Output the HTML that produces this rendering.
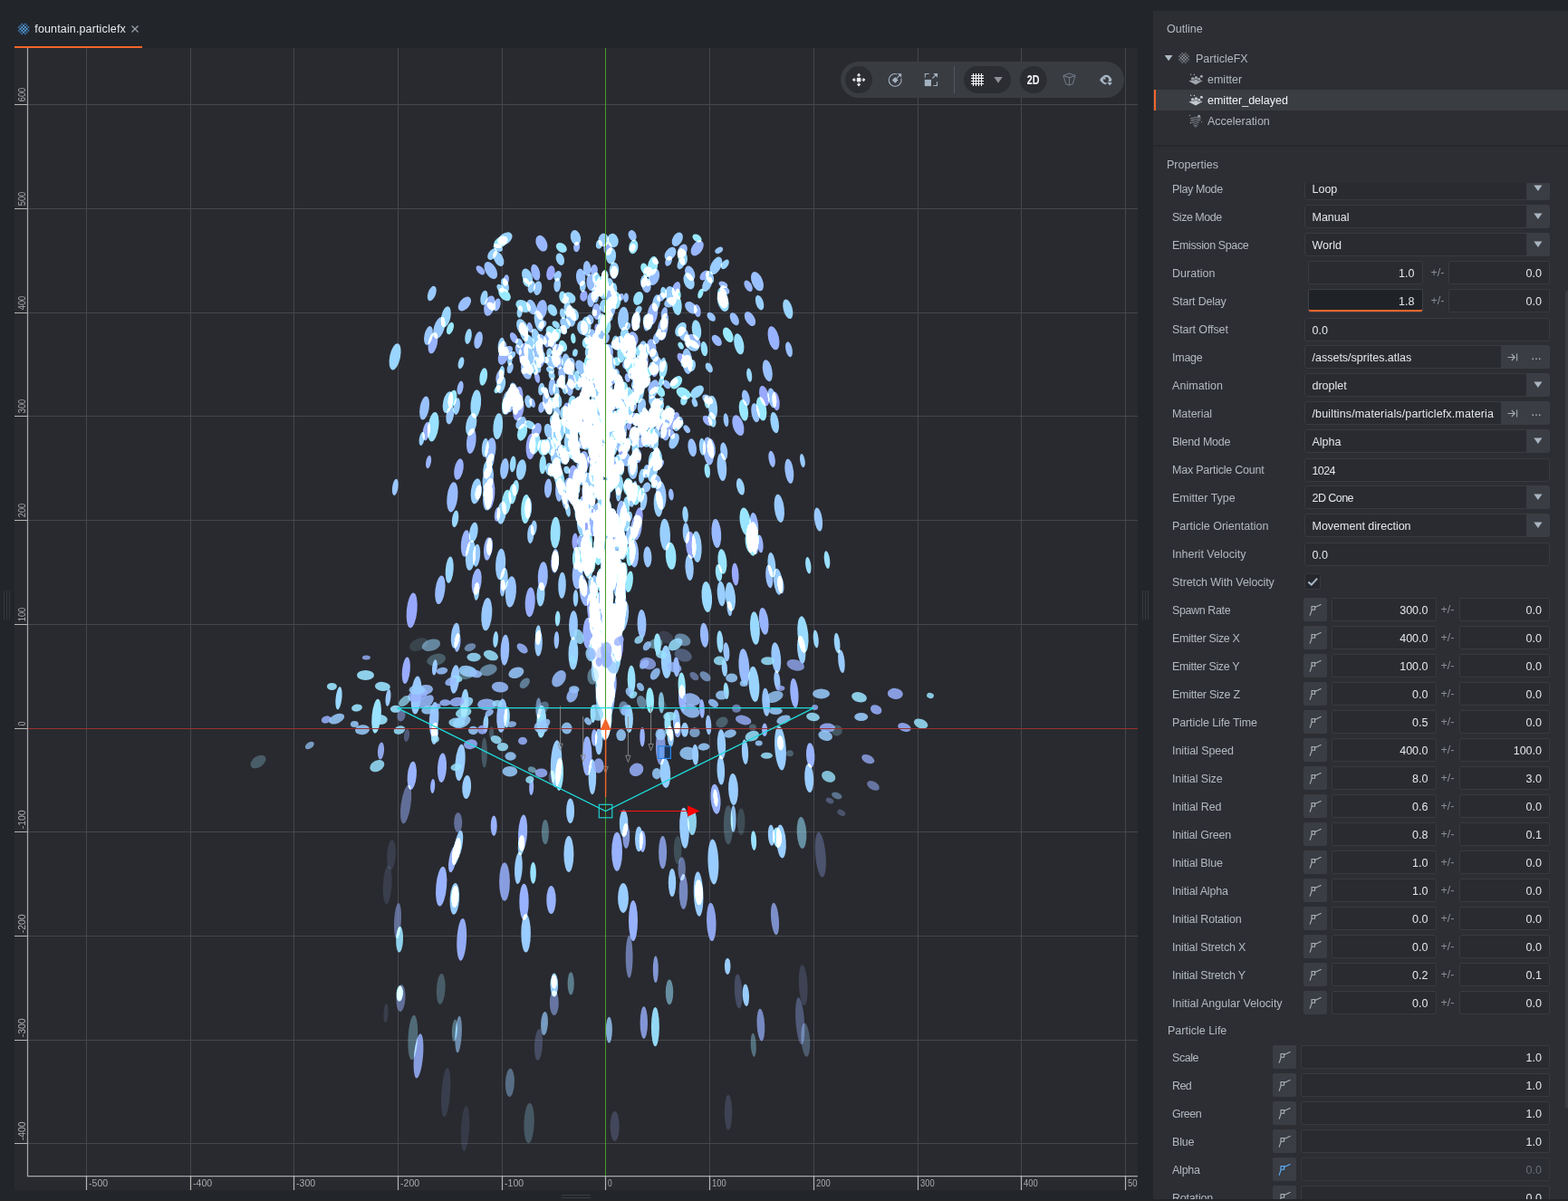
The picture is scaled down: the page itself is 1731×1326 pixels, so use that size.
<!DOCTYPE html>
<html><head><meta charset="utf-8"><title>fountain.particlefx</title><style>
*{box-sizing:border-box;margin:0;padding:0}
html,body{width:1731px;height:1326px;overflow:hidden;background:#22252a;}
body{position:relative;font-family:"Liberation Sans",sans-serif;font-size:12.5px;color:#b2b9c1;}
.abs{position:absolute}
.t{position:absolute;white-space:nowrap;line-height:16px;height:16px}
.val{color:#e4e7ea}
.fld{position:absolute;background:#292b30;border:1px solid #383a40;border-radius:2px;height:26px;line-height:24px;color:#e4e7ea;white-space:nowrap;overflow:hidden}
.fld.r{text-align:right;padding-right:8px}
.fld.l{text-align:left;padding-left:8px}
.cbtn{position:absolute;background:#3a3d43;border-radius:2px;width:26px;height:26px}
.pm{position:absolute;color:#878d95;line-height:16px}
.p{mix-blend-mode:screen;mix-blend-mode:plus-lighter}
</style></head><body>
<div class="t" style="left:38.3px;top:24px;color:#e8eaec;letter-spacing:0.14px">fountain.particlefx</div>
<svg class="abs" style="left:142px;top:25px" width="14" height="14" viewBox="0 0 14 14"><path d="M3.5 3.5 L10.5 10.5 M10.5 3.5 L3.5 10.5" stroke="#9aa0a8" stroke-width="1.3" fill="none"/></svg>
<div class="abs" style="left:16px;top:51px;width:141px;height:2px;background:#f2652a"></div>
<svg class="abs" style="left:0;top:0" width="60" height="50"><rect x="19.82" y="29.28" width="1.78" height="1.78" fill="#3d77ad"/><rect x="19.82" y="32.84" width="1.78" height="1.78" fill="#3d77ad"/><rect x="21.60" y="27.50" width="1.78" height="1.78" fill="#3d77ad"/><rect x="21.60" y="31.06" width="1.78" height="1.78" fill="#5db1fb"/><rect x="21.60" y="34.62" width="1.78" height="1.78" fill="#3d77ad"/><rect x="23.38" y="25.72" width="1.78" height="1.78" fill="#3d77ad"/><rect x="23.38" y="29.28" width="1.78" height="1.78" fill="#5db1fb"/><rect x="23.38" y="32.84" width="1.78" height="1.78" fill="#5db1fb"/><rect x="23.38" y="36.40" width="1.78" height="1.78" fill="#3d77ad"/><rect x="25.16" y="27.50" width="1.78" height="1.78" fill="#5db1fb"/><rect x="25.16" y="31.06" width="1.78" height="1.78" fill="#5db1fb"/><rect x="25.16" y="34.62" width="1.78" height="1.78" fill="#5db1fb"/><rect x="26.94" y="25.72" width="1.78" height="1.78" fill="#3d77ad"/><rect x="26.94" y="29.28" width="1.78" height="1.78" fill="#5db1fb"/><rect x="26.94" y="32.84" width="1.78" height="1.78" fill="#5db1fb"/><rect x="26.94" y="36.40" width="1.78" height="1.78" fill="#3d77ad"/><rect x="28.72" y="27.50" width="1.78" height="1.78" fill="#3d77ad"/><rect x="28.72" y="31.06" width="1.78" height="1.78" fill="#5db1fb"/><rect x="28.72" y="34.62" width="1.78" height="1.78" fill="#3d77ad"/><rect x="30.50" y="29.28" width="1.78" height="1.78" fill="#3d77ad"/><rect x="30.50" y="32.84" width="1.78" height="1.78" fill="#3d77ad"/></svg>
<div class="abs" style="left:16px;top:53px;width:1240px;height:1261px;background:#292a2f"></div>
<svg class="abs" style="left:0;top:0" width="1731" height="1326" viewBox="0 0 1731 1326">
<defs><clipPath id="vp"><rect x="16" y="53" width="1240" height="1261"/></clipPath><clipPath id="vpin"><rect x="31" y="53" width="1225" height="1245"/></clipPath></defs>
<g clip-path="url(#vp)">
<path d="M95.5 53V1298M210.5 53V1298M324.5 53V1298M439.5 53V1298M554.5 53V1298M668.5 53V1298M783.5 53V1298M898.5 53V1298M1013.5 53V1298M1127.5 53V1298M1242.5 53V1298M31 1262.5H1256M31 1148.5H1256M31 1033.5H1256M31 918.5H1256M31 804.5H1256M31 689.5H1256M31 574.5H1256M31 459.5H1256M31 345.5H1256M31 230.5H1256M31 115.5H1256" stroke="#45474c" stroke-width="1" fill="none"/>
<g clip-path="url(#vpin)" style="isolation:isolate">
<ellipse cx="579.4" cy="399.4" rx="4.5" ry="7.3" transform="rotate(-32.1 579.4 399.4)" fill="rgb(153,199,255)" class="p"/>
<ellipse cx="657.4" cy="713.4" rx="4.1" ry="14.6" transform="rotate(-5.1 657.4 713.4)" fill="rgb(153,208,255)" class="p"/>
<ellipse cx="704.8" cy="572.9" rx="4.6" ry="12.7" transform="rotate(7.8 704.8 572.9)" fill="rgb(153,168,255)" class="p"/>
<ellipse cx="657.1" cy="495.7" rx="4.5" ry="10.8" transform="rotate(-2.2 657.1 495.7)" fill="rgb(153,209,255)" class="p"/>
<ellipse cx="697.1" cy="547.5" rx="4.2" ry="12.3" transform="rotate(-1.0 697.1 547.5)" fill="rgb(153,206,255)" class="p"/>
<ellipse cx="697.1" cy="750.6" rx="4.4" ry="15.8" transform="rotate(-0.6 697.1 750.6)" fill="rgb(153,224,255)" class="p"/>
<ellipse cx="669.7" cy="723.7" rx="5.6" ry="17.7" transform="rotate(0.6 669.7 723.7)" fill="rgb(153,193,255)" class="p"/>
<ellipse cx="827.1" cy="599.2" rx="4.3" ry="11.4" transform="rotate(-7.7 827.1 599.2)" fill="rgb(153,229,255)" class="p"/>
<ellipse cx="688.4" cy="680.4" rx="5.4" ry="16.8" transform="rotate(7.0 688.4 680.4)" fill="rgb(153,200,255)" class="p"/>
<ellipse cx="662.4" cy="749.6" rx="2.9" ry="10.5" transform="rotate(-4.5 662.4 749.6)" fill="rgb(153,221,255)" class="p"/>
<ellipse cx="700.5" cy="546.2" rx="3.0" ry="8.5" transform="rotate(6.1 700.5 546.2)" fill="rgb(153,182,255)" class="p"/>
<ellipse cx="668.6" cy="794.7" rx="5.8" ry="21.1" transform="rotate(0.5 668.6 794.7)" fill="rgb(153,206,255)" class="p"/>
<ellipse cx="520.2" cy="468.5" rx="5.7" ry="12.4" transform="rotate(12.2 520.2 468.5)" fill="rgb(153,210,255)" class="p"/>
<ellipse cx="698.3" cy="273.5" rx="2.9" ry="4.2" transform="rotate(17.6 698.3 273.5)" fill="rgb(153,168,255)" class="p"/>
<ellipse cx="603.0" cy="433.7" rx="2.7" ry="6.6" transform="rotate(-10.8 603.0 433.7)" fill="rgb(153,208,255)" class="p"/>
<ellipse cx="662.9" cy="748.8" rx="3.6" ry="11.9" transform="rotate(-4.2 662.9 748.8)" fill="rgb(153,210,255)" class="p"/>
<ellipse cx="781.1" cy="440.9" rx="4.3" ry="6.7" transform="rotate(-49.6 781.1 440.9)" fill="rgb(153,196,255)" class="p"/>
<ellipse cx="601.0" cy="431.0" rx="2.8" ry="4.1" transform="rotate(-53.1 601.0 431.0)" fill="rgb(153,204,255)" class="p"/>
<ellipse cx="499.5" cy="440.3" rx="4.5" ry="9.8" transform="rotate(13.5 499.5 440.3)" fill="rgb(153,234,255)" class="p"/>
<ellipse cx="714.9" cy="355.8" rx="4.5" ry="9.7" transform="rotate(7.6 714.9 355.8)" fill="rgb(153,199,255)" class="p"/>
<ellipse cx="769.5" cy="432.7" rx="5.5" ry="8.7" transform="rotate(47.3 769.5 432.7)" fill="rgb(153,215,255)" class="p"/>
<ellipse cx="593.0" cy="416.7" rx="2.8" ry="6.5" transform="rotate(-12.6 593.0 416.7)" fill="rgb(153,173,255)" class="p"/>
<ellipse cx="663.4" cy="475.5" rx="5.8" ry="10.0" transform="rotate(-1.6 663.4 475.5)" fill="rgb(153,234,255)" class="p"/>
<ellipse cx="625.4" cy="401.8" rx="4.8" ry="11.5" transform="rotate(-6.7 625.4 401.8)" fill="rgb(153,200,255)" class="p"/>
<ellipse cx="811.7" cy="634.1" rx="3.8" ry="12.5" transform="rotate(-3.7 811.7 634.1)" fill="rgb(153,170,255)" class="p"/>
<ellipse cx="541.8" cy="298.5" rx="5.9" ry="10.4" transform="rotate(-30.5 541.8 298.5)" fill="rgb(153,191,255)" class="p"/>
<ellipse cx="598.0" cy="449.7" rx="3.6" ry="6.3" transform="rotate(12.6 598.0 449.7)" fill="rgb(153,186,255)" class="p"/>
<ellipse cx="658.9" cy="385.5" rx="3.2" ry="7.1" transform="rotate(-1.6 658.9 385.5)" fill="rgb(153,218,255)" class="p"/>
<ellipse cx="833.9" cy="455.7" rx="4.4" ry="10.7" transform="rotate(-9.5 833.9 455.7)" fill="rgb(153,195,255)" class="p"/>
<ellipse cx="562.9" cy="397.7" rx="2.7" ry="5.7" transform="rotate(9.8 562.9 397.7)" fill="rgb(153,207,255)" class="p"/>
<ellipse cx="673.2" cy="633.5" rx="4.5" ry="14.5" transform="rotate(-0.1 673.2 633.5)" fill="rgb(153,193,255)" class="p"/>
<ellipse cx="653.9" cy="576.2" rx="5.3" ry="16.1" transform="rotate(-3.0 653.9 576.2)" fill="rgb(153,181,255)" class="p"/>
<ellipse cx="803.8" cy="369.8" rx="5.0" ry="8.8" transform="rotate(-25.2 803.8 369.8)" fill="rgb(153,234,255)" class="p"/>
<ellipse cx="549.0" cy="567.9" rx="3.1" ry="7.9" transform="rotate(6.7 549.0 567.9)" fill="rgb(153,174,255)" class="p"/>
<ellipse cx="675.9" cy="635.0" rx="5.3" ry="17.7" transform="rotate(1.9 675.9 635.0)" fill="rgb(153,212,255)" class="p"/>
<ellipse cx="857.9" cy="751.4" rx="3.4" ry="10.9" transform="rotate(-5.9 857.9 751.4)" fill="rgb(153,197,255)" class="p"/>
<ellipse cx="741.5" cy="479.1" rx="3.3" ry="5.5" transform="rotate(-17.5 741.5 479.1)" fill="rgb(153,184,255)" class="p"/>
<ellipse cx="607.6" cy="493.1" rx="4.5" ry="10.3" transform="rotate(-12.1 607.6 493.1)" fill="rgb(153,212,255)" class="p"/>
<ellipse cx="668.6" cy="764.5" rx="2.9" ry="9.9" transform="rotate(0.1 668.6 764.5)" fill="rgb(153,234,255)" class="p"/>
<ellipse cx="688.1" cy="569.2" rx="3.6" ry="11.4" transform="rotate(3.9 688.1 569.2)" fill="rgb(153,201,255)" class="p"/>
<ellipse cx="613.2" cy="441.4" rx="3.2" ry="5.4" transform="rotate(12.1 613.2 441.4)" fill="rgb(153,224,255)" class="p"/>
<ellipse cx="665.6" cy="629.5" rx="3.0" ry="8.6" transform="rotate(-0.8 665.6 629.5)" fill="rgb(153,192,255)" class="p"/>
<ellipse cx="827.2" cy="414.1" rx="2.9" ry="7.6" transform="rotate(-7.6 827.2 414.1)" fill="rgb(153,216,255)" class="p"/>
<ellipse cx="528.1" cy="375.5" rx="4.5" ry="9.7" transform="rotate(11.0 528.1 375.5)" fill="rgb(153,189,255)" class="p"/>
<ellipse cx="646.3" cy="560.8" rx="3.7" ry="11.7" transform="rotate(-4.3 646.3 560.8)" fill="rgb(153,193,255)" class="p"/>
<ellipse cx="497.0" cy="362.5" rx="3.5" ry="7.0" transform="rotate(19.9 497.0 362.5)" fill="rgb(153,232,255)" class="p"/>
<ellipse cx="661.4" cy="598.5" rx="5.8" ry="18.3" transform="rotate(0.2 661.4 598.5)" fill="rgb(153,229,255)" class="p"/>
<ellipse cx="669.4" cy="359.8" rx="5.0" ry="9.2" transform="rotate(-0.1 669.4 359.8)" fill="rgb(153,224,255)" class="p"/>
<ellipse cx="691.5" cy="401.8" rx="4.1" ry="5.7" transform="rotate(18.6 691.5 401.8)" fill="rgb(153,200,255)" class="p"/>
<ellipse cx="652.5" cy="645.4" rx="3.0" ry="9.8" transform="rotate(-4.4 652.5 645.4)" fill="rgb(153,208,255)" class="p"/>
<ellipse cx="673.0" cy="476.3" rx="3.5" ry="6.0" transform="rotate(1.5 673.0 476.3)" fill="rgb(153,206,255)" class="p"/>
<ellipse cx="648.1" cy="296.4" rx="4.3" ry="8.3" transform="rotate(-3.8 648.1 296.4)" fill="rgb(153,192,255)" class="p"/>
<ellipse cx="668.2" cy="791.9" rx="2.9" ry="10.7" transform="rotate(-0.9 668.2 791.9)" fill="rgb(153,203,255)" class="p"/>
<ellipse cx="671.7" cy="388.7" rx="5.2" ry="8.7" transform="rotate(1.0 671.7 388.7)" fill="rgb(153,188,255)" class="p"/>
<ellipse cx="592.3" cy="475.0" rx="5.1" ry="8.3" transform="rotate(21.1 592.3 475.0)" fill="rgb(153,180,255)" class="p"/>
<ellipse cx="671.1" cy="718.5" rx="5.1" ry="15.7" transform="rotate(1.3 671.1 718.5)" fill="rgb(153,207,255)" class="p"/>
<ellipse cx="764.2" cy="494.2" rx="4.6" ry="10.1" transform="rotate(-8.2 764.2 494.2)" fill="rgb(153,194,255)" class="p"/>
<ellipse cx="436.3" cy="537.9" rx="3.2" ry="9.3" transform="rotate(8.0 436.3 537.9)" fill="rgb(153,198,255)" class="p"/>
<ellipse cx="722.7" cy="487.2" rx="4.3" ry="10.2" transform="rotate(-3.4 722.7 487.2)" fill="rgb(153,210,255)" class="p"/>
<ellipse cx="655.7" cy="657.8" rx="5.1" ry="15.3" transform="rotate(-3.9 655.7 657.8)" fill="rgb(153,215,255)" class="p"/>
<ellipse cx="719.3" cy="384.2" rx="5.2" ry="9.9" transform="rotate(-6.3 719.3 384.2)" fill="rgb(153,185,255)" class="p"/>
<ellipse cx="653.2" cy="547.4" rx="4.6" ry="11.6" transform="rotate(-3.2 653.2 547.4)" fill="rgb(153,186,255)" class="p"/>
<ellipse cx="674.8" cy="680.0" rx="4.9" ry="15.3" transform="rotate(2.2 674.8 680.0)" fill="rgb(153,198,255)" class="p"/>
<ellipse cx="590.5" cy="489.7" rx="5.9" ry="11.8" transform="rotate(8.9 590.5 489.7)" fill="rgb(153,224,255)" class="p"/>
<ellipse cx="673.6" cy="768.2" rx="4.2" ry="13.7" transform="rotate(5.8 673.6 768.2)" fill="rgb(153,202,255)" class="p"/>
<ellipse cx="670.5" cy="406.4" rx="5.8" ry="14.5" transform="rotate(0.3 670.5 406.4)" fill="rgb(153,216,255)" class="p"/>
<ellipse cx="668.1" cy="796.0" rx="3.2" ry="11.4" transform="rotate(-1.9 668.1 796.0)" fill="rgb(153,191,255)" class="p"/>
<ellipse cx="720.6" cy="293.4" rx="5.5" ry="10.5" transform="rotate(9.9 720.6 293.4)" fill="rgb(153,233,255)" class="p"/>
<ellipse cx="552.3" cy="318.3" rx="3.1" ry="5.1" transform="rotate(-36.3 552.3 318.3)" fill="rgb(153,211,255)" class="p"/>
<ellipse cx="620.3" cy="413.2" rx="3.9" ry="8.2" transform="rotate(-9.4 620.3 413.2)" fill="rgb(153,191,255)" class="p"/>
<ellipse cx="634.8" cy="597.9" rx="3.3" ry="9.5" transform="rotate(1.2 634.8 597.9)" fill="rgb(153,168,255)" class="p"/>
<ellipse cx="632.9" cy="450.0" rx="5.7" ry="13.2" transform="rotate(-6.3 632.9 450.0)" fill="rgb(153,223,255)" class="p"/>
<ellipse cx="614.4" cy="452.6" rx="3.5" ry="8.8" transform="rotate(-8.9 614.4 452.6)" fill="rgb(153,203,255)" class="p"/>
<ellipse cx="646.5" cy="542.5" rx="4.1" ry="10.2" transform="rotate(1.2 646.5 542.5)" fill="rgb(153,186,255)" class="p"/>
<ellipse cx="655.3" cy="689.7" rx="4.4" ry="12.7" transform="rotate(-5.1 655.3 689.7)" fill="rgb(153,201,255)" class="p"/>
<ellipse cx="840.6" cy="451.3" rx="5.4" ry="13.3" transform="rotate(-9.8 840.6 451.3)" fill="rgb(153,233,255)" class="p"/>
<ellipse cx="679.5" cy="587.0" rx="5.8" ry="16.8" transform="rotate(2.4 679.5 587.0)" fill="rgb(153,168,255)" class="p"/>
<ellipse cx="682.7" cy="545.7" rx="2.9" ry="8.0" transform="rotate(-0.6 682.7 545.7)" fill="rgb(153,206,255)" class="p"/>
<ellipse cx="565.3" cy="436.4" rx="4.8" ry="12.6" transform="rotate(4.6 565.3 436.4)" fill="rgb(153,191,255)" class="p"/>
<ellipse cx="672.8" cy="581.8" rx="4.0" ry="11.5" transform="rotate(0.9 672.8 581.8)" fill="rgb(153,207,255)" class="p"/>
<ellipse cx="688.7" cy="461.3" rx="5.6" ry="8.3" transform="rotate(11.7 688.7 461.3)" fill="rgb(153,227,255)" class="p"/>
<ellipse cx="692.5" cy="490.3" rx="3.7" ry="7.0" transform="rotate(6.5 692.5 490.3)" fill="rgb(153,224,255)" class="p"/>
<ellipse cx="782.8" cy="405.9" rx="3.5" ry="5.8" transform="rotate(-27.9 782.8 405.9)" fill="rgb(153,206,255)" class="p"/>
<ellipse cx="608.1" cy="399.5" rx="5.3" ry="8.0" transform="rotate(-32.3 608.1 399.5)" fill="rgb(153,202,255)" class="p"/>
<ellipse cx="610.7" cy="379.9" rx="3.5" ry="6.3" transform="rotate(-13.9 610.7 379.9)" fill="rgb(153,181,255)" class="p"/>
<ellipse cx="719.1" cy="507.8" rx="3.2" ry="9.1" transform="rotate(8.6 719.1 507.8)" fill="rgb(153,217,255)" class="p"/>
<ellipse cx="682.0" cy="690.2" rx="5.1" ry="15.1" transform="rotate(5.2 682.0 690.2)" fill="rgb(153,234,255)" class="p"/>
<ellipse cx="613.0" cy="506.2" rx="4.9" ry="11.4" transform="rotate(-11.2 613.0 506.2)" fill="rgb(153,203,255)" class="p"/>
<ellipse cx="530.4" cy="298.3" rx="3.6" ry="6.1" transform="rotate(-41.6 530.4 298.3)" fill="rgb(153,177,255)" class="p"/>
<ellipse cx="682.7" cy="693.9" rx="3.4" ry="11.2" transform="rotate(5.5 682.7 693.9)" fill="rgb(153,178,255)" class="p"/>
<ellipse cx="549.1" cy="429.7" rx="2.8" ry="4.8" transform="rotate(28.7 549.1 429.7)" fill="rgb(153,232,255)" class="p"/>
<ellipse cx="632.8" cy="373.7" rx="2.7" ry="5.7" transform="rotate(-6.4 632.8 373.7)" fill="rgb(153,234,255)" class="p"/>
<ellipse cx="667.8" cy="337.9" rx="5.8" ry="7.4" transform="rotate(-2.1 667.8 337.9)" fill="rgb(153,210,255)" class="p"/>
<ellipse cx="794.9" cy="708.5" rx="3.5" ry="12.3" transform="rotate(-2.9 794.9 708.5)" fill="rgb(153,217,255)" class="p"/>
<ellipse cx="680.1" cy="726.2" rx="5.6" ry="19.4" transform="rotate(6.2 680.1 726.2)" fill="rgb(153,217,255)" class="p"/>
<ellipse cx="666.4" cy="619.2" rx="3.5" ry="10.0" transform="rotate(-0.5 666.4 619.2)" fill="rgb(153,202,255)" class="p"/>
<ellipse cx="797.4" cy="619.9" rx="4.9" ry="13.8" transform="rotate(-5.2 797.4 619.9)" fill="rgb(153,228,255)" class="p"/>
<ellipse cx="569.2" cy="538.7" rx="3.5" ry="8.8" transform="rotate(5.6 569.2 538.7)" fill="rgb(153,227,255)" class="p"/>
<ellipse cx="654.1" cy="524.3" rx="4.0" ry="10.4" transform="rotate(-2.8 654.1 524.3)" fill="rgb(153,225,255)" class="p"/>
<ellipse cx="559.7" cy="791.9" rx="3.1" ry="11.7" transform="rotate(2.0 559.7 791.9)" fill="rgb(153,221,255)" class="p"/>
<ellipse cx="623.5" cy="429.9" rx="2.8" ry="5.4" transform="rotate(-10.0 623.5 429.9)" fill="rgb(153,211,255)" class="p"/>
<ellipse cx="538.5" cy="548.1" rx="5.3" ry="15.5" transform="rotate(4.6 538.5 548.1)" fill="rgb(153,197,255)" class="p"/>
<ellipse cx="565.1" cy="392.3" rx="3.3" ry="5.1" transform="rotate(41.3 565.1 392.3)" fill="rgb(153,202,255)" class="p"/>
<ellipse cx="800.1" cy="320.1" rx="3.7" ry="5.9" transform="rotate(-55.3 800.1 320.1)" fill="rgb(153,188,255)" class="p"/>
<ellipse cx="669.7" cy="790.6" rx="4.1" ry="14.4" transform="rotate(3.5 669.7 790.6)" fill="rgb(153,218,255)" class="p"/>
<ellipse cx="672.4" cy="771.9" rx="3.0" ry="10.2" transform="rotate(4.9 672.4 771.9)" fill="rgb(153,190,255)" class="p"/>
<ellipse cx="618.4" cy="286.2" rx="4.4" ry="6.9" transform="rotate(-18.5 618.4 286.2)" fill="rgb(153,211,255)" class="p"/>
<ellipse cx="459.6" cy="767.5" rx="5.8" ry="21.1" transform="rotate(4.3 459.6 767.5)" fill="rgb(153,200,255)" class="p"/>
<ellipse cx="644.5" cy="509.9" rx="5.7" ry="11.9" transform="rotate(2.3 644.5 509.9)" fill="rgb(153,179,255)" class="p"/>
<ellipse cx="655.8" cy="440.8" rx="3.1" ry="7.0" transform="rotate(-2.3 655.8 440.8)" fill="rgb(153,204,255)" class="p"/>
<ellipse cx="656.4" cy="720.6" rx="5.5" ry="17.3" transform="rotate(-6.1 656.4 720.6)" fill="rgb(153,232,255)" class="p"/>
<ellipse cx="605.1" cy="539.1" rx="4.1" ry="10.7" transform="rotate(3.1 605.1 539.1)" fill="rgb(153,187,255)" class="p"/>
<ellipse cx="698.1" cy="260.0" rx="4.3" ry="6.1" transform="rotate(-18.0 698.1 260.0)" fill="rgb(153,194,255)" class="p"/>
<ellipse cx="513.0" cy="775.8" rx="4.3" ry="15.0" transform="rotate(3.6 513.0 775.8)" fill="rgb(153,211,255)" class="p"/>
<ellipse cx="639.9" cy="617.8" rx="4.8" ry="14.5" transform="rotate(-7.0 639.9 617.8)" fill="rgb(153,209,255)" class="p"/>
<ellipse cx="448.3" cy="740.2" rx="4.4" ry="14.8" transform="rotate(5.6 448.3 740.2)" fill="rgb(153,172,255)" class="p"/>
<ellipse cx="575.4" cy="518.7" rx="5.3" ry="11.5" transform="rotate(8.2 575.4 518.7)" fill="rgb(153,209,255)" class="p"/>
<ellipse cx="593.6" cy="318.1" rx="4.4" ry="8.0" transform="rotate(10.5 593.6 318.1)" fill="rgb(153,201,255)" class="p"/>
<ellipse cx="708.5" cy="525.6" rx="3.3" ry="8.2" transform="rotate(7.9 708.5 525.6)" fill="rgb(153,208,255)" class="p"/>
<ellipse cx="660.3" cy="584.8" rx="5.6" ry="15.6" transform="rotate(-1.8 660.3 584.8)" fill="rgb(153,181,255)" class="p"/>
<ellipse cx="663.2" cy="601.0" rx="5.3" ry="15.2" transform="rotate(-1.2 663.2 601.0)" fill="rgb(153,196,255)" class="p"/>
<ellipse cx="591.2" cy="300.7" rx="4.7" ry="9.2" transform="rotate(-14.3 591.2 300.7)" fill="rgb(153,184,255)" class="p"/>
<ellipse cx="627.0" cy="563.3" rx="2.7" ry="7.4" transform="rotate(-8.7 627.0 563.3)" fill="rgb(153,212,255)" class="p"/>
<ellipse cx="672.9" cy="574.0" rx="4.7" ry="14.3" transform="rotate(0.9 672.9 574.0)" fill="rgb(153,211,255)" class="p"/>
<ellipse cx="636.4" cy="526.9" rx="3.0" ry="8.8" transform="rotate(-5.8 636.4 526.9)" fill="rgb(153,227,255)" class="p"/>
<ellipse cx="746.7" cy="736.4" rx="3.5" ry="10.9" transform="rotate(-2.6 746.7 736.4)" fill="rgb(153,185,255)" class="p"/>
<ellipse cx="661.4" cy="705.3" rx="2.9" ry="9.8" transform="rotate(-3.0 661.4 705.3)" fill="rgb(153,204,255)" class="p"/>
<ellipse cx="668.4" cy="790.7" rx="5.2" ry="17.4" transform="rotate(-0.2 668.4 790.7)" fill="rgb(153,184,255)" class="p"/>
<ellipse cx="593.2" cy="402.9" rx="3.8" ry="9.1" transform="rotate(-11.9 593.2 402.9)" fill="rgb(153,203,255)" class="p"/>
<ellipse cx="648.7" cy="699.0" rx="5.3" ry="17.1" transform="rotate(0.6 648.7 699.0)" fill="rgb(153,176,255)" class="p"/>
<ellipse cx="628.2" cy="475.6" rx="5.6" ry="9.5" transform="rotate(-13.5 628.2 475.6)" fill="rgb(153,217,255)" class="p"/>
<ellipse cx="693.6" cy="437.4" rx="4.9" ry="10.1" transform="rotate(5.2 693.6 437.4)" fill="rgb(153,223,255)" class="p"/>
<ellipse cx="761.1" cy="626.7" rx="4.6" ry="14.2" transform="rotate(-2.9 761.1 626.7)" fill="rgb(153,201,255)" class="p"/>
<ellipse cx="731.6" cy="402.7" rx="3.2" ry="8.1" transform="rotate(9.4 731.6 402.7)" fill="rgb(153,212,255)" class="p"/>
<ellipse cx="550.4" cy="285.7" rx="5.0" ry="9.0" transform="rotate(-25.8 550.4 285.7)" fill="rgb(153,205,255)" class="p"/>
<ellipse cx="701.4" cy="494.8" rx="3.9" ry="11.3" transform="rotate(-1.1 701.4 494.8)" fill="rgb(153,217,255)" class="p"/>
<ellipse cx="686.1" cy="681.4" rx="3.1" ry="9.0" transform="rotate(6.4 686.1 681.4)" fill="rgb(153,173,255)" class="p"/>
<ellipse cx="688.4" cy="605.2" rx="4.8" ry="12.9" transform="rotate(4.9 688.4 605.2)" fill="rgb(153,215,255)" class="p"/>
<ellipse cx="651.5" cy="617.2" rx="3.8" ry="10.6" transform="rotate(-4.3 651.5 617.2)" fill="rgb(153,181,255)" class="p"/>
<ellipse cx="671.2" cy="754.4" rx="3.9" ry="13.9" transform="rotate(2.3 671.2 754.4)" fill="rgb(153,184,255)" class="p"/>
<ellipse cx="608.9" cy="367.7" rx="5.5" ry="8.4" transform="rotate(-27.8 608.9 367.7)" fill="rgb(153,231,255)" class="p"/>
<ellipse cx="668.9" cy="801.7" rx="2.7" ry="9.3" transform="rotate(5.7 668.9 801.7)" fill="rgb(153,221,255)" class="p"/>
<ellipse cx="667.8" cy="304.7" rx="3.9" ry="6.6" transform="rotate(0.1 667.8 304.7)" fill="rgb(153,210,255)" class="p"/>
<ellipse cx="668.4" cy="418.7" rx="3.1" ry="5.4" transform="rotate(-0.0 668.4 418.7)" fill="rgb(153,191,255)" class="p"/>
<ellipse cx="682.0" cy="645.1" rx="4.8" ry="14.1" transform="rotate(3.9 682.0 645.1)" fill="rgb(153,192,255)" class="p"/>
<ellipse cx="594.1" cy="701.1" rx="3.2" ry="10.9" transform="rotate(1.8 594.1 701.1)" fill="rgb(153,209,255)" class="p"/>
<ellipse cx="649.4" cy="469.6" rx="5.3" ry="14.4" transform="rotate(0.8 649.4 469.6)" fill="rgb(153,195,255)" class="p"/>
<ellipse cx="652.9" cy="494.2" rx="4.4" ry="12.3" transform="rotate(-2.6 652.9 494.2)" fill="rgb(153,212,255)" class="p"/>
<ellipse cx="739.8" cy="333.8" rx="5.0" ry="7.2" transform="rotate(55.9 739.8 333.8)" fill="rgb(153,197,255)" class="p"/>
<ellipse cx="703.3" cy="419.8" rx="4.1" ry="10.3" transform="rotate(-1.7 703.3 419.8)" fill="rgb(153,201,255)" class="p"/>
<ellipse cx="572.2" cy="438.8" rx="5.1" ry="12.0" transform="rotate(6.0 572.2 438.8)" fill="rgb(153,168,255)" class="p"/>
<ellipse cx="679.6" cy="621.6" rx="4.8" ry="13.4" transform="rotate(2.9 679.6 621.6)" fill="rgb(153,208,255)" class="p"/>
<ellipse cx="650.7" cy="388.4" rx="4.9" ry="7.7" transform="rotate(5.5 650.7 388.4)" fill="rgb(153,214,255)" class="p"/>
<ellipse cx="669.4" cy="550.6" rx="3.1" ry="7.1" transform="rotate(0.2 669.4 550.6)" fill="rgb(153,184,255)" class="p"/>
<ellipse cx="672.0" cy="505.2" rx="4.1" ry="9.0" transform="rotate(-0.3 672.0 505.2)" fill="rgb(153,193,255)" class="p"/>
<ellipse cx="702.6" cy="435.1" rx="3.1" ry="7.4" transform="rotate(5.8 702.6 435.1)" fill="rgb(153,220,255)" class="p"/>
<ellipse cx="657.0" cy="325.5" rx="4.1" ry="8.8" transform="rotate(-1.8 657.0 325.5)" fill="rgb(153,202,255)" class="p"/>
<ellipse cx="722.0" cy="305.8" rx="5.8" ry="9.4" transform="rotate(16.6 722.0 305.8)" fill="rgb(153,191,255)" class="p"/>
<ellipse cx="740.0" cy="280.1" rx="5.4" ry="8.0" transform="rotate(35.7 740.0 280.1)" fill="rgb(153,201,255)" class="p"/>
<ellipse cx="826.1" cy="315.7" rx="3.9" ry="6.8" transform="rotate(-28.9 826.1 315.7)" fill="rgb(153,182,255)" class="p"/>
<ellipse cx="555.7" cy="393.1" rx="5.5" ry="10.0" transform="rotate(16.8 555.7 393.1)" fill="rgb(153,178,255)" class="p"/>
<ellipse cx="666.4" cy="355.5" rx="4.1" ry="8.2" transform="rotate(-0.4 666.4 355.5)" fill="rgb(153,205,255)" class="p"/>
<ellipse cx="801.7" cy="762.8" rx="2.9" ry="9.2" transform="rotate(-4.2 801.7 762.8)" fill="rgb(153,222,255)" class="p"/>
<ellipse cx="623.3" cy="550.0" rx="2.8" ry="7.3" transform="rotate(-9.2 623.3 550.0)" fill="rgb(153,169,255)" class="p"/>
<ellipse cx="504.3" cy="448.6" rx="3.5" ry="9.4" transform="rotate(6.9 504.3 448.6)" fill="rgb(153,206,255)" class="p"/>
<ellipse cx="801.9" cy="719.8" rx="3.4" ry="10.6" transform="rotate(-4.2 801.9 719.8)" fill="rgb(153,196,255)" class="p"/>
<ellipse cx="608.6" cy="377.8" rx="3.5" ry="5.7" transform="rotate(14.6 608.6 377.8)" fill="rgb(153,183,255)" class="p"/>
<ellipse cx="554.8" cy="384.7" rx="4.3" ry="8.3" transform="rotate(13.8 554.8 384.7)" fill="rgb(153,181,255)" class="p"/>
<ellipse cx="668.7" cy="789.0" rx="4.9" ry="17.3" transform="rotate(0.5 668.7 789.0)" fill="rgb(153,204,255)" class="p"/>
<ellipse cx="575.1" cy="466.9" rx="4.8" ry="7.6" transform="rotate(32.4 575.1 466.9)" fill="rgb(153,201,255)" class="p"/>
<ellipse cx="903.4" cy="573.5" rx="4.4" ry="13.2" transform="rotate(-7.9 903.4 573.5)" fill="rgb(153,200,255)" class="p"/>
<ellipse cx="652.4" cy="331.1" rx="4.1" ry="8.0" transform="rotate(1.8 652.4 331.1)" fill="rgb(153,190,255)" class="p"/>
<ellipse cx="599.2" cy="513.0" rx="3.7" ry="10.3" transform="rotate(2.7 599.2 513.0)" fill="rgb(153,225,255)" class="p"/>
<ellipse cx="758.7" cy="398.8" rx="5.6" ry="14.2" transform="rotate(-4.4 758.7 398.8)" fill="rgb(153,198,255)" class="p"/>
<ellipse cx="668.8" cy="791.7" rx="4.9" ry="15.9" transform="rotate(0.9 668.8 791.7)" fill="rgb(153,202,255)" class="p"/>
<ellipse cx="505.1" cy="709.4" rx="3.3" ry="10.4" transform="rotate(5.2 505.1 709.4)" fill="rgb(153,188,255)" class="p"/>
<ellipse cx="658.7" cy="344.0" rx="4.8" ry="8.9" transform="rotate(-2.1 658.7 344.0)" fill="rgb(153,181,255)" class="p"/>
<ellipse cx="653.6" cy="673.9" rx="5.4" ry="18.6" transform="rotate(-4.9 653.6 673.9)" fill="rgb(153,168,255)" class="p"/>
<ellipse cx="672.6" cy="773.1" rx="5.9" ry="20.3" transform="rotate(5.3 672.6 773.1)" fill="rgb(153,185,255)" class="p"/>
<ellipse cx="598.3" cy="393.6" rx="3.2" ry="5.0" transform="rotate(23.5 598.3 393.6)" fill="rgb(153,205,255)" class="p"/>
<ellipse cx="700.3" cy="540.6" rx="3.1" ry="9.6" transform="rotate(5.8 700.3 540.6)" fill="rgb(153,204,255)" class="p"/>
<ellipse cx="536.3" cy="798.7" rx="2.9" ry="9.8" transform="rotate(3.4 536.3 798.7)" fill="rgb(153,208,255)" class="p"/>
<ellipse cx="753.2" cy="771.0" rx="4.2" ry="14.4" transform="rotate(-2.1 753.2 771.0)" fill="rgb(153,176,255)" class="p"/>
<ellipse cx="587.8" cy="444.8" rx="2.8" ry="5.4" transform="rotate(-18.4 587.8 444.8)" fill="rgb(153,184,255)" class="p"/>
<ellipse cx="746.5" cy="318.9" rx="4.3" ry="8.2" transform="rotate(15.5 746.5 318.9)" fill="rgb(153,177,255)" class="p"/>
<ellipse cx="705.0" cy="342.2" rx="3.2" ry="4.5" transform="rotate(24.5 705.0 342.2)" fill="rgb(153,208,255)" class="p"/>
<ellipse cx="782.2" cy="498.0" rx="5.8" ry="15.5" transform="rotate(-5.1 782.2 498.0)" fill="rgb(153,187,255)" class="p"/>
<ellipse cx="869.8" cy="341.2" rx="5.0" ry="11.1" transform="rotate(-15.0 869.8 341.2)" fill="rgb(153,211,255)" class="p"/>
<ellipse cx="764.2" cy="381.5" rx="5.4" ry="8.1" transform="rotate(-59.7 764.2 381.5)" fill="rgb(153,203,255)" class="p"/>
<ellipse cx="766.9" cy="444.4" rx="2.9" ry="5.0" transform="rotate(-19.9 766.9 444.4)" fill="rgb(153,205,255)" class="p"/>
<ellipse cx="731.5" cy="371.2" rx="3.4" ry="5.1" transform="rotate(30.0 731.5 371.2)" fill="rgb(153,178,255)" class="p"/>
<ellipse cx="833.4" cy="693.6" rx="5.3" ry="18.3" transform="rotate(-3.7 833.4 693.6)" fill="rgb(153,217,255)" class="p"/>
<ellipse cx="672.5" cy="605.4" rx="4.3" ry="11.3" transform="rotate(-0.2 672.5 605.4)" fill="rgb(153,194,255)" class="p"/>
<ellipse cx="673.8" cy="466.7" rx="4.0" ry="10.3" transform="rotate(0.9 673.8 466.7)" fill="rgb(153,197,255)" class="p"/>
<ellipse cx="660.2" cy="569.6" rx="3.1" ry="7.2" transform="rotate(-2.0 660.2 569.6)" fill="rgb(153,182,255)" class="p"/>
<ellipse cx="473.1" cy="510.0" rx="2.8" ry="7.3" transform="rotate(9.7 473.1 510.0)" fill="rgb(153,180,255)" class="p"/>
<ellipse cx="688.3" cy="633.7" rx="4.2" ry="12.8" transform="rotate(5.3 688.3 633.7)" fill="rgb(153,234,255)" class="p"/>
<ellipse cx="871.0" cy="385.8" rx="3.6" ry="8.6" transform="rotate(-11.8 871.0 385.8)" fill="rgb(153,191,255)" class="p"/>
<ellipse cx="636.1" cy="616.3" rx="4.2" ry="12.1" transform="rotate(1.2 636.1 616.3)" fill="rgb(153,228,255)" class="p"/>
<ellipse cx="650.1" cy="405.5" rx="5.7" ry="13.4" transform="rotate(-3.0 650.1 405.5)" fill="rgb(153,234,255)" class="p"/>
<ellipse cx="641.2" cy="578.9" rx="4.3" ry="13.2" transform="rotate(-5.7 641.2 578.9)" fill="rgb(153,210,255)" class="p"/>
<ellipse cx="547.1" cy="706.0" rx="2.8" ry="8.9" transform="rotate(3.7 547.1 706.0)" fill="rgb(153,215,255)" class="p"/>
<ellipse cx="719.3" cy="488.5" rx="3.2" ry="6.5" transform="rotate(11.8 719.3 488.5)" fill="rgb(153,196,255)" class="p"/>
<ellipse cx="468.6" cy="450.5" rx="5.1" ry="13.2" transform="rotate(9.3 468.6 450.5)" fill="rgb(153,194,255)" class="p"/>
<ellipse cx="630.1" cy="349.0" rx="5.5" ry="11.8" transform="rotate(-6.4 630.1 349.0)" fill="rgb(153,200,255)" class="p"/>
<ellipse cx="715.1" cy="482.9" rx="3.1" ry="8.3" transform="rotate(7.8 715.1 482.9)" fill="rgb(153,210,255)" class="p"/>
<ellipse cx="585.8" cy="589.7" rx="3.6" ry="10.5" transform="rotate(2.9 585.8 589.7)" fill="rgb(153,203,255)" class="p"/>
<ellipse cx="758.2" cy="473.7" rx="3.0" ry="4.8" transform="rotate(-35.8 758.2 473.7)" fill="rgb(153,194,255)" class="p"/>
<ellipse cx="669.7" cy="564.6" rx="3.3" ry="8.4" transform="rotate(0.3 669.7 564.6)" fill="rgb(153,168,255)" class="p"/>
<ellipse cx="769.0" cy="364.3" rx="5.1" ry="11.2" transform="rotate(-7.2 769.0 364.3)" fill="rgb(153,219,255)" class="p"/>
<ellipse cx="668.4" cy="643.1" rx="3.6" ry="10.9" transform="rotate(-0.0 668.4 643.1)" fill="rgb(153,210,255)" class="p"/>
<ellipse cx="415.6" cy="790.7" rx="5.1" ry="18.9" transform="rotate(5.1 415.6 790.7)" fill="rgb(153,227,255)" class="p"/>
<ellipse cx="685.8" cy="327.9" rx="2.7" ry="3.9" transform="rotate(10.1 685.8 327.9)" fill="rgb(153,184,255)" class="p"/>
<ellipse cx="694.7" cy="590.8" rx="3.8" ry="10.0" transform="rotate(6.2 694.7 590.8)" fill="rgb(153,201,255)" class="p"/>
<ellipse cx="769.7" cy="274.0" rx="5.8" ry="9.3" transform="rotate(34.1 769.7 274.0)" fill="rgb(153,182,255)" class="p"/>
<ellipse cx="589.3" cy="582.8" rx="3.3" ry="8.2" transform="rotate(4.8 589.3 582.8)" fill="rgb(153,204,255)" class="p"/>
<ellipse cx="595.0" cy="354.5" rx="5.0" ry="11.6" transform="rotate(-11.1 595.0 354.5)" fill="rgb(153,205,255)" class="p"/>
<ellipse cx="525.5" cy="542.3" rx="5.6" ry="14.2" transform="rotate(7.6 525.5 542.3)" fill="rgb(153,207,255)" class="p"/>
<ellipse cx="668.5" cy="704.8" rx="3.6" ry="12.0" transform="rotate(0.0 668.5 704.8)" fill="rgb(153,217,255)" class="p"/>
<ellipse cx="689.7" cy="372.8" rx="5.2" ry="11.9" transform="rotate(-1.3 689.7 372.8)" fill="rgb(153,216,255)" class="p"/>
<ellipse cx="594.6" cy="710.3" rx="4.2" ry="14.3" transform="rotate(1.7 594.6 710.3)" fill="rgb(153,201,255)" class="p"/>
<ellipse cx="651.5" cy="429.5" rx="4.5" ry="8.9" transform="rotate(-3.7 651.5 429.5)" fill="rgb(153,199,255)" class="p"/>
<ellipse cx="557.6" cy="263.5" rx="5.9" ry="8.9" transform="rotate(52.9 557.6 263.5)" fill="rgb(153,210,255)" class="p"/>
<ellipse cx="858.9" cy="642.2" rx="4.8" ry="14.6" transform="rotate(-6.1 858.9 642.2)" fill="rgb(153,203,255)" class="p"/>
<ellipse cx="621.1" cy="346.2" rx="3.0" ry="5.8" transform="rotate(-9.5 621.1 346.2)" fill="rgb(153,211,255)" class="p"/>
<ellipse cx="569.5" cy="449.1" rx="3.5" ry="8.7" transform="rotate(5.0 569.5 449.1)" fill="rgb(153,184,255)" class="p"/>
<ellipse cx="635.5" cy="262.4" rx="5.5" ry="8.4" transform="rotate(-13.3 635.5 262.4)" fill="rgb(153,205,255)" class="p"/>
<ellipse cx="717.8" cy="353.6" rx="3.2" ry="6.4" transform="rotate(9.5 717.8 353.6)" fill="rgb(153,226,255)" class="p"/>
<ellipse cx="671.8" cy="636.1" rx="5.1" ry="14.5" transform="rotate(-0.1 671.8 636.1)" fill="rgb(153,202,255)" class="p"/>
<ellipse cx="658.1" cy="486.2" rx="5.1" ry="13.0" transform="rotate(0.5 658.1 486.2)" fill="rgb(153,219,255)" class="p"/>
<ellipse cx="629.0" cy="328.7" rx="5.3" ry="7.2" transform="rotate(-50.9 629.0 328.7)" fill="rgb(153,216,255)" class="p"/>
<ellipse cx="675.4" cy="442.0" rx="4.6" ry="12.2" transform="rotate(1.1 675.4 442.0)" fill="rgb(153,186,255)" class="p"/>
<ellipse cx="668.5" cy="780.2" rx="5.7" ry="19.8" transform="rotate(-0.0 668.5 780.2)" fill="rgb(153,222,255)" class="p"/>
<ellipse cx="671.6" cy="429.9" rx="5.0" ry="10.8" transform="rotate(-0.2 671.6 429.9)" fill="rgb(153,191,255)" class="p"/>
<ellipse cx="671.5" cy="394.0" rx="3.1" ry="4.1" transform="rotate(3.4 671.5 394.0)" fill="rgb(153,214,255)" class="p"/>
<ellipse cx="766.0" cy="376.7" rx="5.9" ry="9.0" transform="rotate(-40.8 766.0 376.7)" fill="rgb(153,184,255)" class="p"/>
<ellipse cx="677.7" cy="486.2" rx="3.9" ry="9.1" transform="rotate(1.8 677.7 486.2)" fill="rgb(153,229,255)" class="p"/>
<ellipse cx="714.6" cy="312.4" rx="2.7" ry="3.8" transform="rotate(-45.3 714.6 312.4)" fill="rgb(153,203,255)" class="p"/>
<ellipse cx="646.5" cy="441.5" rx="3.1" ry="6.8" transform="rotate(1.8 646.5 441.5)" fill="rgb(153,199,255)" class="p"/>
<ellipse cx="496.2" cy="629.1" rx="4.4" ry="14.7" transform="rotate(4.4 496.2 629.1)" fill="rgb(153,214,255)" class="p"/>
<ellipse cx="662.8" cy="681.1" rx="5.1" ry="15.3" transform="rotate(-2.0 662.8 681.1)" fill="rgb(153,181,255)" class="p"/>
<ellipse cx="717.7" cy="462.9" rx="4.6" ry="12.8" transform="rotate(7.7 717.7 462.9)" fill="rgb(153,192,255)" class="p"/>
<ellipse cx="685.2" cy="689.4" rx="4.2" ry="13.3" transform="rotate(6.3 685.2 689.4)" fill="rgb(153,219,255)" class="p"/>
<ellipse cx="718.9" cy="478.7" rx="3.8" ry="6.9" transform="rotate(14.1 718.9 478.7)" fill="rgb(153,230,255)" class="p"/>
<ellipse cx="852.1" cy="506.8" rx="3.5" ry="9.2" transform="rotate(-9.0 852.1 506.8)" fill="rgb(153,184,255)" class="p"/>
<ellipse cx="851.9" cy="623.6" rx="4.3" ry="13.7" transform="rotate(-5.3 851.9 623.6)" fill="rgb(153,207,255)" class="p"/>
<ellipse cx="630.9" cy="462.0" rx="4.6" ry="6.5" transform="rotate(26.9 630.9 462.0)" fill="rgb(153,191,255)" class="p"/>
<ellipse cx="509.0" cy="400.7" rx="3.1" ry="6.7" transform="rotate(13.3 509.0 400.7)" fill="rgb(153,211,255)" class="p"/>
<ellipse cx="604.2" cy="445.0" rx="4.9" ry="12.6" transform="rotate(-10.2 604.2 445.0)" fill="rgb(153,189,255)" class="p"/>
<ellipse cx="645.6" cy="481.4" rx="5.5" ry="15.5" transform="rotate(-3.7 645.6 481.4)" fill="rgb(153,217,255)" class="p"/>
<ellipse cx="634.1" cy="450.7" rx="4.2" ry="9.7" transform="rotate(-6.2 634.1 450.7)" fill="rgb(153,223,255)" class="p"/>
<ellipse cx="508.1" cy="428.2" rx="3.3" ry="7.7" transform="rotate(10.4 508.1 428.2)" fill="rgb(153,186,255)" class="p"/>
<ellipse cx="678.0" cy="300.9" rx="3.9" ry="7.2" transform="rotate(2.0 678.0 300.9)" fill="rgb(153,189,255)" class="p"/>
<ellipse cx="710.7" cy="310.4" rx="3.7" ry="6.9" transform="rotate(8.3 710.7 310.4)" fill="rgb(153,203,255)" class="p"/>
<ellipse cx="726.7" cy="556.3" rx="5.0" ry="14.4" transform="rotate(-2.1 726.7 556.3)" fill="rgb(153,208,255)" class="p"/>
<ellipse cx="660.3" cy="707.9" rx="3.7" ry="13.0" transform="rotate(-3.6 660.3 707.9)" fill="rgb(153,188,255)" class="p"/>
<ellipse cx="660.9" cy="720.9" rx="5.5" ry="17.7" transform="rotate(-3.9 660.9 720.9)" fill="rgb(153,178,255)" class="p"/>
<ellipse cx="512.9" cy="335.5" rx="5.5" ry="9.1" transform="rotate(39.1 512.9 335.5)" fill="rgb(153,191,255)" class="p"/>
<ellipse cx="682.3" cy="445.6" rx="2.9" ry="4.7" transform="rotate(5.0 682.3 445.6)" fill="rgb(153,204,255)" class="p"/>
<ellipse cx="614.4" cy="481.6" rx="5.0" ry="10.9" transform="rotate(-11.2 614.4 481.6)" fill="rgb(153,212,255)" class="p"/>
<ellipse cx="454.7" cy="673.9" rx="5.8" ry="19.4" transform="rotate(5.4 454.7 673.9)" fill="rgb(153,168,255)" class="p"/>
<ellipse cx="654.6" cy="788.2" rx="2.9" ry="10.0" transform="rotate(0.3 654.6 788.2)" fill="rgb(153,222,255)" class="p"/>
<ellipse cx="576.6" cy="477.4" rx="5.2" ry="9.5" transform="rotate(15.2 576.6 477.4)" fill="rgb(153,230,255)" class="p"/>
<ellipse cx="684.9" cy="476.9" rx="4.5" ry="7.7" transform="rotate(5.4 684.9 476.9)" fill="rgb(153,211,255)" class="p"/>
<ellipse cx="657.3" cy="673.7" rx="3.7" ry="12.2" transform="rotate(-3.7 657.3 673.7)" fill="rgb(153,222,255)" class="p"/>
<ellipse cx="662.9" cy="421.6" rx="5.8" ry="12.3" transform="rotate(-1.1 662.9 421.6)" fill="rgb(153,225,255)" class="p"/>
<ellipse cx="677.5" cy="319.6" rx="3.8" ry="7.4" transform="rotate(1.7 677.5 319.6)" fill="rgb(153,212,255)" class="p"/>
<ellipse cx="666.0" cy="505.2" rx="5.2" ry="13.0" transform="rotate(-0.5 666.0 505.2)" fill="rgb(153,183,255)" class="p"/>
<ellipse cx="647.1" cy="568.2" rx="2.9" ry="8.6" transform="rotate(-4.4 647.1 568.2)" fill="rgb(153,201,255)" class="p"/>
<ellipse cx="663.0" cy="321.4" rx="3.9" ry="6.0" transform="rotate(1.8 663.0 321.4)" fill="rgb(153,215,255)" class="p"/>
<ellipse cx="677.8" cy="674.4" rx="3.0" ry="8.5" transform="rotate(3.3 677.8 674.4)" fill="rgb(153,193,255)" class="p"/>
<ellipse cx="647.1" cy="582.5" rx="4.5" ry="13.3" transform="rotate(-4.6 647.1 582.5)" fill="rgb(153,168,255)" class="p"/>
<ellipse cx="665.6" cy="747.9" rx="3.3" ry="10.6" transform="rotate(-2.2 665.6 747.9)" fill="rgb(153,217,255)" class="p"/>
<ellipse cx="684.0" cy="427.7" rx="5.4" ry="11.3" transform="rotate(3.1 684.0 427.7)" fill="rgb(153,193,255)" class="p"/>
<ellipse cx="607.9" cy="301.3" rx="4.6" ry="8.1" transform="rotate(10.0 607.9 301.3)" fill="rgb(153,168,255)" class="p"/>
<ellipse cx="892.3" cy="624.2" rx="3.0" ry="9.3" transform="rotate(-7.1 892.3 624.2)" fill="rgb(153,222,255)" class="p"/>
<ellipse cx="658.2" cy="387.5" rx="3.8" ry="7.1" transform="rotate(-2.4 658.2 387.5)" fill="rgb(153,179,255)" class="p"/>
<ellipse cx="665.3" cy="443.8" rx="5.9" ry="14.7" transform="rotate(-0.5 665.3 443.8)" fill="rgb(153,234,255)" class="p"/>
<ellipse cx="666.8" cy="460.8" rx="4.8" ry="7.3" transform="rotate(-0.9 666.8 460.8)" fill="rgb(153,199,255)" class="p"/>
<ellipse cx="667.9" cy="744.7" rx="3.0" ry="9.9" transform="rotate(-0.4 667.9 744.7)" fill="rgb(153,219,255)" class="p"/>
<ellipse cx="672.8" cy="336.2" rx="4.6" ry="6.3" transform="rotate(3.5 672.8 336.2)" fill="rgb(153,197,255)" class="p"/>
<ellipse cx="680.7" cy="414.2" rx="3.5" ry="7.3" transform="rotate(-1.1 680.7 414.2)" fill="rgb(153,196,255)" class="p"/>
<ellipse cx="496.8" cy="458.2" rx="4.2" ry="10.3" transform="rotate(9.6 496.8 458.2)" fill="rgb(153,200,255)" class="p"/>
<ellipse cx="538.8" cy="528.7" rx="6.0" ry="14.5" transform="rotate(8.0 538.8 528.7)" fill="rgb(153,202,255)" class="p"/>
<ellipse cx="678.0" cy="465.8" rx="5.3" ry="8.3" transform="rotate(-3.0 678.0 465.8)" fill="rgb(153,195,255)" class="p"/>
<ellipse cx="614.4" cy="706.7" rx="2.8" ry="9.6" transform="rotate(1.3 614.4 706.7)" fill="rgb(153,193,255)" class="p"/>
<ellipse cx="703.4" cy="582.8" rx="5.1" ry="13.7" transform="rotate(7.9 703.4 582.8)" fill="rgb(153,177,255)" class="p"/>
<ellipse cx="780.8" cy="519.8" rx="3.1" ry="8.1" transform="rotate(-5.4 780.8 519.8)" fill="rgb(153,227,255)" class="p"/>
<ellipse cx="675.2" cy="505.7" rx="3.1" ry="6.8" transform="rotate(1.4 675.2 505.7)" fill="rgb(153,191,255)" class="p"/>
<ellipse cx="671.2" cy="564.5" rx="3.7" ry="11.2" transform="rotate(0.5 671.2 564.5)" fill="rgb(153,197,255)" class="p"/>
<ellipse cx="751.5" cy="363.6" rx="5.3" ry="8.5" transform="rotate(31.0 751.5 363.6)" fill="rgb(153,215,255)" class="p"/>
<ellipse cx="519.5" cy="613.3" rx="5.5" ry="16.6" transform="rotate(4.9 519.5 613.3)" fill="rgb(153,206,255)" class="p"/>
<ellipse cx="674.6" cy="491.5" rx="4.0" ry="10.2" transform="rotate(1.1 674.6 491.5)" fill="rgb(153,189,255)" class="p"/>
<ellipse cx="666.5" cy="790.2" rx="4.2" ry="15.3" transform="rotate(-5.7 666.5 790.2)" fill="rgb(153,209,255)" class="p"/>
<ellipse cx="668.5" cy="517.3" rx="3.6" ry="10.2" transform="rotate(-0.0 668.5 517.3)" fill="rgb(153,203,255)" class="p"/>
<ellipse cx="522.8" cy="587.7" rx="4.6" ry="11.2" transform="rotate(9.1 522.8 587.7)" fill="rgb(153,208,255)" class="p"/>
<ellipse cx="585.9" cy="493.0" rx="5.3" ry="14.2" transform="rotate(3.7 585.9 493.0)" fill="rgb(153,168,255)" class="p"/>
<ellipse cx="615.2" cy="314.9" rx="3.8" ry="7.7" transform="rotate(4.9 615.2 314.9)" fill="rgb(153,202,255)" class="p"/>
<ellipse cx="586.8" cy="316.9" rx="3.9" ry="6.7" transform="rotate(14.5 586.8 316.9)" fill="rgb(153,205,255)" class="p"/>
<ellipse cx="618.7" cy="386.7" rx="3.3" ry="5.6" transform="rotate(9.5 618.7 386.7)" fill="rgb(153,205,255)" class="p"/>
<ellipse cx="674.6" cy="416.0" rx="5.8" ry="9.4" transform="rotate(2.2 674.6 416.0)" fill="rgb(153,182,255)" class="p"/>
<ellipse cx="694.8" cy="642.3" rx="3.9" ry="11.8" transform="rotate(7.3 694.8 642.3)" fill="rgb(153,234,255)" class="p"/>
<ellipse cx="666.2" cy="264.9" rx="5.7" ry="7.3" transform="rotate(5.4 666.2 264.9)" fill="rgb(153,201,255)" class="p"/>
<ellipse cx="641.6" cy="522.7" rx="4.0" ry="9.9" transform="rotate(-5.4 641.6 522.7)" fill="rgb(153,217,255)" class="p"/>
<ellipse cx="559.1" cy="554.4" rx="5.1" ry="13.6" transform="rotate(5.1 559.1 554.4)" fill="rgb(153,227,255)" class="p"/>
<ellipse cx="638.5" cy="463.5" rx="2.9" ry="8.0" transform="rotate(1.1 638.5 463.5)" fill="rgb(153,178,255)" class="p"/>
<ellipse cx="621.5" cy="382.0" rx="4.2" ry="6.5" transform="rotate(-20.7 621.5 382.0)" fill="rgb(153,234,255)" class="p"/>
<ellipse cx="628.9" cy="540.6" rx="5.4" ry="13.3" transform="rotate(-8.2 628.9 540.6)" fill="rgb(153,184,255)" class="p"/>
<ellipse cx="618.5" cy="474.8" rx="5.2" ry="12.0" transform="rotate(3.3 618.5 474.8)" fill="rgb(153,214,255)" class="p"/>
<ellipse cx="597.7" cy="796.8" rx="5.3" ry="17.7" transform="rotate(1.9 597.7 796.8)" fill="rgb(153,223,255)" class="p"/>
<ellipse cx="476.8" cy="324.1" rx="4.3" ry="8.6" transform="rotate(20.0 476.8 324.1)" fill="rgb(153,201,255)" class="p"/>
<ellipse cx="656.6" cy="677.1" rx="5.8" ry="18.4" transform="rotate(-4.1 656.6 677.1)" fill="rgb(153,206,255)" class="p"/>
<ellipse cx="707.9" cy="546.5" rx="3.3" ry="8.2" transform="rotate(8.2 707.9 546.5)" fill="rgb(153,234,255)" class="p"/>
<ellipse cx="716.7" cy="300.5" rx="2.9" ry="5.4" transform="rotate(10.2 716.7 300.5)" fill="rgb(153,192,255)" class="p"/>
<ellipse cx="685.6" cy="673.0" rx="5.8" ry="18.9" transform="rotate(5.7 685.6 673.0)" fill="rgb(153,189,255)" class="p"/>
<ellipse cx="661.5" cy="403.3" rx="3.5" ry="8.2" transform="rotate(-1.1 661.5 403.3)" fill="rgb(153,212,255)" class="p"/>
<ellipse cx="678.4" cy="330.7" rx="3.2" ry="6.2" transform="rotate(2.0 678.4 330.7)" fill="rgb(153,232,255)" class="p"/>
<ellipse cx="665.4" cy="514.8" rx="4.6" ry="11.7" transform="rotate(-0.6 665.4 514.8)" fill="rgb(153,221,255)" class="p"/>
<ellipse cx="705.6" cy="431.9" rx="5.6" ry="13.2" transform="rotate(6.2 705.6 431.9)" fill="rgb(153,218,255)" class="p"/>
<ellipse cx="773.4" cy="324.1" rx="2.8" ry="5.6" transform="rotate(18.5 773.4 324.1)" fill="rgb(153,234,255)" class="p"/>
<ellipse cx="634.0" cy="490.8" rx="5.0" ry="14.2" transform="rotate(-5.6 634.0 490.8)" fill="rgb(153,217,255)" class="p"/>
<ellipse cx="556.6" cy="639.7" rx="4.1" ry="12.7" transform="rotate(3.5 556.6 639.7)" fill="rgb(153,206,255)" class="p"/>
<ellipse cx="667.2" cy="305.2" rx="3.2" ry="5.9" transform="rotate(-0.3 667.2 305.2)" fill="rgb(153,206,255)" class="p"/>
<ellipse cx="695.6" cy="450.4" rx="4.4" ry="11.7" transform="rotate(4.2 695.6 450.4)" fill="rgb(153,216,255)" class="p"/>
<ellipse cx="585.2" cy="361.7" rx="2.9" ry="6.0" transform="rotate(-14.7 585.2 361.7)" fill="rgb(153,185,255)" class="p"/>
<ellipse cx="696.8" cy="396.3" rx="4.5" ry="6.0" transform="rotate(50.7 696.8 396.3)" fill="rgb(153,202,255)" class="p"/>
<ellipse cx="746.9" cy="796.6" rx="4.0" ry="13.3" transform="rotate(-2.2 746.9 796.6)" fill="rgb(153,196,255)" class="p"/>
<ellipse cx="577.6" cy="338.0" rx="6.0" ry="8.9" transform="rotate(-57.9 577.6 338.0)" fill="rgb(153,220,255)" class="p"/>
<ellipse cx="704.0" cy="422.4" rx="4.0" ry="9.7" transform="rotate(-1.9 704.0 422.4)" fill="rgb(153,204,255)" class="p"/>
<ellipse cx="885.9" cy="508.6" rx="2.7" ry="7.6" transform="rotate(-8.8 885.9 508.6)" fill="rgb(153,203,255)" class="p"/>
<ellipse cx="710.5" cy="398.4" rx="5.2" ry="12.1" transform="rotate(-2.6 710.5 398.4)" fill="rgb(153,169,255)" class="p"/>
<ellipse cx="708.5" cy="688.8" rx="4.9" ry="15.9" transform="rotate(-1.1 708.5 688.8)" fill="rgb(153,192,255)" class="p"/>
<ellipse cx="732.3" cy="408.2" rx="4.3" ry="10.1" transform="rotate(10.2 732.3 408.2)" fill="rgb(153,226,255)" class="p"/>
<ellipse cx="540.4" cy="337.6" rx="5.8" ry="11.4" transform="rotate(13.7 540.4 337.6)" fill="rgb(153,182,255)" class="p"/>
<ellipse cx="845.6" cy="775.3" rx="4.2" ry="15.5" transform="rotate(-3.6 845.6 775.3)" fill="rgb(153,200,255)" opacity="0.97" class="p"/>
<ellipse cx="655.8" cy="484.9" rx="5.4" ry="15.2" transform="rotate(-2.0 655.8 484.9)" fill="rgb(153,175,255)" class="p"/>
<ellipse cx="828.0" cy="352.0" rx="5.0" ry="8.8" transform="rotate(-30.2 828.0 352.0)" fill="rgb(153,184,255)" class="p"/>
<ellipse cx="542.2" cy="338.1" rx="3.4" ry="5.4" transform="rotate(-48.2 542.2 338.1)" fill="rgb(153,198,255)" class="p"/>
<ellipse cx="552.6" cy="622.9" rx="5.5" ry="17.2" transform="rotate(3.4 552.6 622.9)" fill="rgb(153,201,255)" class="p"/>
<ellipse cx="644.5" cy="442.4" rx="5.3" ry="13.8" transform="rotate(1.1 644.5 442.4)" fill="rgb(153,191,255)" class="p"/>
<ellipse cx="619.6" cy="421.0" rx="4.1" ry="7.0" transform="rotate(9.1 619.6 421.0)" fill="rgb(153,192,255)" class="p"/>
<ellipse cx="557.1" cy="325.3" rx="5.2" ry="8.2" transform="rotate(-43.7 557.1 325.3)" fill="rgb(153,234,255)" class="p"/>
<ellipse cx="740.9" cy="546.0" rx="2.8" ry="6.6" transform="rotate(-5.0 740.9 546.0)" fill="rgb(153,187,255)" class="p"/>
<ellipse cx="738.1" cy="456.0" rx="4.0" ry="8.6" transform="rotate(-6.2 738.1 456.0)" fill="rgb(153,230,255)" class="p"/>
<ellipse cx="526.2" cy="652.9" rx="3.0" ry="10.0" transform="rotate(3.5 526.2 652.9)" fill="rgb(153,210,255)" class="p"/>
<ellipse cx="671.2" cy="613.4" rx="2.9" ry="8.1" transform="rotate(0.7 671.2 613.4)" fill="rgb(153,192,255)" class="p"/>
<ellipse cx="670.7" cy="682.8" rx="6.0" ry="19.6" transform="rotate(0.8 670.7 682.8)" fill="rgb(153,178,255)" class="p"/>
<ellipse cx="675.3" cy="438.3" rx="4.4" ry="6.5" transform="rotate(3.9 675.3 438.3)" fill="rgb(153,202,255)" class="p"/>
<ellipse cx="677.2" cy="704.6" rx="5.5" ry="16.7" transform="rotate(3.8 677.2 704.6)" fill="rgb(153,203,255)" class="p"/>
<ellipse cx="666.7" cy="411.8" rx="4.6" ry="9.9" transform="rotate(0.1 666.7 411.8)" fill="rgb(153,215,255)" class="p"/>
<ellipse cx="777.4" cy="385.1" rx="3.7" ry="8.2" transform="rotate(-7.8 777.4 385.1)" fill="rgb(153,224,255)" class="p"/>
<ellipse cx="502.7" cy="701.7" rx="4.7" ry="14.1" transform="rotate(5.8 502.7 701.7)" fill="rgb(153,199,255)" class="p"/>
<ellipse cx="737.1" cy="799.4" rx="3.6" ry="12.8" transform="rotate(-1.5 737.1 799.4)" fill="rgb(153,226,255)" class="p"/>
<ellipse cx="681.8" cy="669.2" rx="3.7" ry="12.7" transform="rotate(4.2 681.8 669.2)" fill="rgb(153,188,255)" class="p"/>
<ellipse cx="541.6" cy="497.3" rx="5.7" ry="14.2" transform="rotate(7.0 541.6 497.3)" fill="rgb(153,188,255)" class="p"/>
<ellipse cx="665.1" cy="386.4" rx="5.1" ry="12.4" transform="rotate(-0.5 665.1 386.4)" fill="rgb(153,179,255)" class="p"/>
<ellipse cx="668.3" cy="424.6" rx="5.8" ry="9.6" transform="rotate(-0.1 668.3 424.6)" fill="rgb(153,221,255)" class="p"/>
<ellipse cx="517.0" cy="371.5" rx="3.6" ry="8.5" transform="rotate(9.2 517.0 371.5)" fill="rgb(153,215,255)" class="p"/>
<ellipse cx="654.1" cy="515.4" rx="3.5" ry="9.8" transform="rotate(0.6 654.1 515.4)" fill="rgb(153,200,255)" class="p"/>
<ellipse cx="614.4" cy="466.3" rx="4.6" ry="11.9" transform="rotate(-8.9 614.4 466.3)" fill="rgb(153,222,255)" class="p"/>
<ellipse cx="671.2" cy="349.3" rx="3.0" ry="6.9" transform="rotate(-0.2 671.2 349.3)" fill="rgb(153,216,255)" class="p"/>
<ellipse cx="659.7" cy="537.7" rx="4.9" ry="13.9" transform="rotate(-1.6 659.7 537.7)" fill="rgb(153,209,255)" class="p"/>
<ellipse cx="666.5" cy="438.4" rx="3.2" ry="4.3" transform="rotate(-2.5 666.5 438.4)" fill="rgb(153,213,255)" class="p"/>
<ellipse cx="643.3" cy="316.1" rx="3.4" ry="6.2" transform="rotate(3.5 643.3 316.1)" fill="rgb(153,206,255)" class="p"/>
<ellipse cx="730.0" cy="421.3" rx="2.8" ry="5.9" transform="rotate(11.5 730.0 421.3)" fill="rgb(153,223,255)" class="p"/>
<ellipse cx="758.8" cy="376.4" rx="3.2" ry="7.2" transform="rotate(-6.4 758.8 376.4)" fill="rgb(153,196,255)" class="p"/>
<ellipse cx="664.8" cy="735.4" rx="5.6" ry="19.0" transform="rotate(-2.2 664.8 735.4)" fill="rgb(153,224,255)" class="p"/>
<ellipse cx="502.6" cy="572.9" rx="3.5" ry="9.4" transform="rotate(7.8 502.6 572.9)" fill="rgb(153,215,255)" class="p"/>
<ellipse cx="616.3" cy="442.1" rx="3.9" ry="7.7" transform="rotate(-11.3 616.3 442.1)" fill="rgb(153,211,255)" class="p"/>
<ellipse cx="720.1" cy="467.4" rx="4.3" ry="6.0" transform="rotate(59.6 720.1 467.4)" fill="rgb(153,213,255)" class="p"/>
<ellipse cx="647.9" cy="607.3" rx="5.9" ry="18.2" transform="rotate(-4.8 647.9 607.3)" fill="rgb(153,179,255)" class="p"/>
<ellipse cx="762.7" cy="601.8" rx="5.6" ry="15.0" transform="rotate(-4.4 762.7 601.8)" fill="rgb(153,170,255)" class="p"/>
<ellipse cx="631.3" cy="420.4" rx="4.3" ry="9.5" transform="rotate(-6.7 631.3 420.4)" fill="rgb(153,190,255)" class="p"/>
<ellipse cx="790.8" cy="589.0" rx="5.3" ry="16.0" transform="rotate(-4.0 790.8 589.0)" fill="rgb(153,186,255)" class="p"/>
<ellipse cx="752.0" cy="395.3" rx="3.8" ry="6.0" transform="rotate(-29.6 752.0 395.3)" fill="rgb(153,168,255)" class="p"/>
<ellipse cx="665.5" cy="769.3" rx="2.8" ry="10.3" transform="rotate(0.1 665.5 769.3)" fill="rgb(153,229,255)" class="p"/>
<ellipse cx="558.0" cy="447.9" rx="3.9" ry="9.7" transform="rotate(5.8 558.0 447.9)" fill="rgb(153,224,255)" class="p"/>
<ellipse cx="578.1" cy="391.0" rx="5.0" ry="12.3" transform="rotate(4.8 578.1 391.0)" fill="rgb(153,179,255)" class="p"/>
<ellipse cx="695.5" cy="539.7" rx="3.3" ry="10.2" transform="rotate(4.9 695.5 539.7)" fill="rgb(153,213,255)" class="p"/>
<ellipse cx="838.6" cy="334.2" rx="4.2" ry="8.5" transform="rotate(-17.1 838.6 334.2)" fill="rgb(153,208,255)" class="p"/>
<ellipse cx="668.9" cy="621.7" rx="4.0" ry="10.8" transform="rotate(0.1 668.9 621.7)" fill="rgb(153,191,255)" class="p"/>
<ellipse cx="729.8" cy="547.2" rx="5.7" ry="15.6" transform="rotate(-2.6 729.8 547.2)" fill="rgb(153,199,255)" class="p"/>
<ellipse cx="753.2" cy="277.3" rx="5.0" ry="8.2" transform="rotate(23.8 753.2 277.3)" fill="rgb(153,185,255)" class="p"/>
<ellipse cx="597.0" cy="656.2" rx="4.5" ry="13.3" transform="rotate(2.6 597.0 656.2)" fill="rgb(153,209,255)" class="p"/>
<ellipse cx="724.5" cy="403.4" rx="5.3" ry="10.0" transform="rotate(13.0 724.5 403.4)" fill="rgb(153,197,255)" class="p"/>
<ellipse cx="641.4" cy="570.2" rx="5.1" ry="12.8" transform="rotate(-6.2 641.4 570.2)" fill="rgb(153,211,255)" class="p"/>
<ellipse cx="750.5" cy="468.9" rx="3.3" ry="5.3" transform="rotate(35.6 750.5 468.9)" fill="rgb(153,217,255)" class="p"/>
<ellipse cx="520.3" cy="487.1" rx="5.2" ry="14.0" transform="rotate(6.4 520.3 487.1)" fill="rgb(153,181,255)" class="p"/>
<ellipse cx="884.7" cy="717.5" rx="4.5" ry="15.2" transform="rotate(-5.3 884.7 717.5)" fill="rgb(153,208,255)" class="p"/>
<ellipse cx="485.9" cy="651.2" rx="5.4" ry="15.9" transform="rotate(6.9 485.9 651.2)" fill="rgb(153,188,255)" class="p"/>
<ellipse cx="674.4" cy="339.0" rx="5.2" ry="11.3" transform="rotate(0.9 674.4 339.0)" fill="rgb(153,197,255)" class="p"/>
<ellipse cx="619.8" cy="273.5" rx="4.8" ry="6.6" transform="rotate(-52.0 619.8 273.5)" fill="rgb(153,228,255)" class="p"/>
<ellipse cx="876.9" cy="765.2" rx="4.5" ry="16.2" transform="rotate(-4.3 876.9 765.2)" fill="rgb(153,177,255)" class="p"/>
<ellipse cx="662.5" cy="516.7" rx="4.4" ry="13.0" transform="rotate(-1.0 662.5 516.7)" fill="rgb(153,200,255)" class="p"/>
<ellipse cx="691.5" cy="559.0" rx="3.6" ry="10.5" transform="rotate(-0.8 691.5 559.0)" fill="rgb(153,221,255)" class="p"/>
<ellipse cx="668.5" cy="543.3" rx="5.7" ry="14.2" transform="rotate(0.0 668.5 543.3)" fill="rgb(153,177,255)" class="p"/>
<ellipse cx="723.3" cy="409.5" rx="3.6" ry="6.8" transform="rotate(12.8 723.3 409.5)" fill="rgb(153,177,255)" class="p"/>
<ellipse cx="738.0" cy="461.0" rx="5.4" ry="11.5" transform="rotate(14.0 738.0 461.0)" fill="rgb(153,186,255)" class="p"/>
<ellipse cx="730.1" cy="775.7" rx="3.2" ry="11.8" transform="rotate(-1.2 730.1 775.7)" fill="rgb(153,225,255)" opacity="0.80" class="p"/>
<ellipse cx="679.7" cy="679.1" rx="2.9" ry="9.1" transform="rotate(3.9 679.7 679.1)" fill="rgb(153,208,255)" class="p"/>
<ellipse cx="688.6" cy="474.9" rx="3.4" ry="9.0" transform="rotate(-0.9 688.6 474.9)" fill="rgb(153,196,255)" class="p"/>
<ellipse cx="671.3" cy="487.3" rx="2.8" ry="6.0" transform="rotate(0.6 671.3 487.3)" fill="rgb(153,204,255)" class="p"/>
<ellipse cx="722.1" cy="392.0" rx="4.6" ry="7.3" transform="rotate(-15.3 722.1 392.0)" fill="rgb(153,199,255)" class="p"/>
<ellipse cx="798.2" cy="332.7" rx="6.0" ry="11.5" transform="rotate(-15.3 798.2 332.7)" fill="rgb(153,219,255)" class="p"/>
<ellipse cx="526.1" cy="613.2" rx="4.0" ry="12.6" transform="rotate(4.3 526.1 613.2)" fill="rgb(153,201,255)" class="p"/>
<ellipse cx="732.6" cy="323.1" rx="3.4" ry="6.4" transform="rotate(-7.7 732.6 323.1)" fill="rgb(153,215,255)" class="p"/>
<ellipse cx="740.6" cy="613.8" rx="5.8" ry="15.1" transform="rotate(-3.8 740.6 613.8)" fill="rgb(153,229,255)" class="p"/>
<ellipse cx="684.7" cy="655.5" rx="5.1" ry="17.4" transform="rotate(4.7 684.7 655.5)" fill="rgb(153,190,255)" class="p"/>
<ellipse cx="688.0" cy="351.6" rx="6.0" ry="12.9" transform="rotate(3.2 688.0 351.6)" fill="rgb(153,202,255)" class="p"/>
<ellipse cx="662.5" cy="422.1" rx="3.1" ry="3.9" transform="rotate(57.6 662.5 422.1)" fill="rgb(153,209,255)" class="p"/>
<ellipse cx="720.9" cy="517.4" rx="5.7" ry="15.2" transform="rotate(9.6 720.9 517.4)" fill="rgb(153,209,255)" class="p"/>
<ellipse cx="668.8" cy="558.9" rx="3.4" ry="9.4" transform="rotate(0.1 668.8 558.9)" fill="rgb(153,184,255)" class="p"/>
<ellipse cx="674.5" cy="759.3" rx="5.9" ry="19.6" transform="rotate(5.5 674.5 759.3)" fill="rgb(153,177,255)" class="p"/>
<ellipse cx="374.0" cy="770.9" rx="3.4" ry="12.6" transform="rotate(6.0 374.0 770.9)" fill="rgb(153,215,255)" class="p"/>
<ellipse cx="729.3" cy="432.4" rx="4.2" ry="6.3" transform="rotate(-30.5 729.3 432.4)" fill="rgb(153,234,255)" class="p"/>
<ellipse cx="685.8" cy="659.8" rx="4.3" ry="13.2" transform="rotate(5.3 685.8 659.8)" fill="rgb(153,214,255)" class="p"/>
<ellipse cx="657.6" cy="503.2" rx="3.1" ry="6.4" transform="rotate(-2.5 657.6 503.2)" fill="rgb(153,196,255)" class="p"/>
<ellipse cx="720.7" cy="406.9" rx="4.2" ry="7.4" transform="rotate(-8.8 720.7 406.9)" fill="rgb(153,198,255)" class="p"/>
<ellipse cx="633.0" cy="690.4" rx="4.9" ry="16.1" transform="rotate(1.0 633.0 690.4)" fill="rgb(153,201,255)" class="p"/>
<ellipse cx="871.3" cy="520.2" rx="4.7" ry="13.8" transform="rotate(-6.9 871.3 520.2)" fill="rgb(153,191,255)" class="p"/>
<ellipse cx="655.0" cy="383.9" rx="5.3" ry="12.1" transform="rotate(-2.2 655.0 383.9)" fill="rgb(153,215,255)" class="p"/>
<ellipse cx="674.8" cy="731.0" rx="2.9" ry="8.7" transform="rotate(3.6 674.8 731.0)" fill="rgb(153,181,255)" class="p"/>
<ellipse cx="692.7" cy="381.2" rx="5.8" ry="13.1" transform="rotate(3.9 692.7 381.2)" fill="rgb(153,178,255)" class="p"/>
<ellipse cx="631.1" cy="542.8" rx="5.9" ry="14.7" transform="rotate(-7.8 631.1 542.8)" fill="rgb(153,173,255)" class="p"/>
<ellipse cx="669.2" cy="439.6" rx="3.1" ry="8.0" transform="rotate(0.1 669.2 439.6)" fill="rgb(153,212,255)" class="p"/>
<ellipse cx="669.0" cy="799.3" rx="4.4" ry="15.3" transform="rotate(3.5 669.0 799.3)" fill="rgb(153,168,255)" class="p"/>
<ellipse cx="473.0" cy="370.5" rx="4.5" ry="10.6" transform="rotate(11.9 473.0 370.5)" fill="rgb(153,199,255)" class="p"/>
<ellipse cx="499.4" cy="548.8" rx="5.9" ry="16.7" transform="rotate(6.5 499.4 548.8)" fill="rgb(153,188,255)" class="p"/>
<ellipse cx="656.0" cy="647.6" rx="4.1" ry="12.6" transform="rotate(0.4 656.0 647.6)" fill="rgb(153,204,255)" class="p"/>
<ellipse cx="780.3" cy="659.0" rx="5.7" ry="17.0" transform="rotate(-4.0 780.3 659.0)" fill="rgb(153,218,255)" class="p"/>
<ellipse cx="839.2" cy="600.4" rx="3.3" ry="10.0" transform="rotate(-5.7 839.2 600.4)" fill="rgb(153,179,255)" class="p"/>
<ellipse cx="615.6" cy="304.6" rx="3.9" ry="5.8" transform="rotate(20.8 615.6 304.6)" fill="rgb(153,200,255)" class="p"/>
<ellipse cx="635.5" cy="660.4" rx="2.8" ry="9.3" transform="rotate(0.8 635.5 660.4)" fill="rgb(153,208,255)" class="p"/>
<ellipse cx="746.6" cy="422.3" rx="5.3" ry="8.2" transform="rotate(38.7 746.6 422.3)" fill="rgb(153,234,255)" class="p"/>
<ellipse cx="675.6" cy="581.7" rx="3.9" ry="11.9" transform="rotate(1.5 675.6 581.7)" fill="rgb(153,168,255)" class="p"/>
<ellipse cx="823.4" cy="439.2" rx="4.1" ry="8.9" transform="rotate(-12.3 823.4 439.2)" fill="rgb(153,193,255)" class="p"/>
<ellipse cx="535.6" cy="494.2" rx="3.7" ry="10.6" transform="rotate(4.7 535.6 494.2)" fill="rgb(153,206,255)" class="p"/>
<ellipse cx="647.6" cy="561.5" rx="5.0" ry="15.2" transform="rotate(0.6 647.6 561.5)" fill="rgb(153,202,255)" class="p"/>
<ellipse cx="554.9" cy="649.3" rx="2.8" ry="9.2" transform="rotate(3.0 554.9 649.3)" fill="rgb(153,199,255)" class="p"/>
<ellipse cx="557.5" cy="314.7" rx="3.9" ry="7.9" transform="rotate(-19.5 557.5 314.7)" fill="rgb(153,209,255)" class="p"/>
<ellipse cx="661.7" cy="408.3" rx="5.1" ry="8.3" transform="rotate(-2.3 661.7 408.3)" fill="rgb(153,234,255)" class="p"/>
<ellipse cx="525.3" cy="445.9" rx="5.7" ry="15.6" transform="rotate(5.7 525.3 445.9)" fill="rgb(153,218,255)" class="p"/>
<ellipse cx="478.3" cy="471.2" rx="5.9" ry="16.4" transform="rotate(7.6 478.3 471.2)" fill="rgb(153,225,255)" class="p"/>
<ellipse cx="465.6" cy="484.5" rx="2.8" ry="7.6" transform="rotate(8.3 465.6 484.5)" fill="rgb(153,209,255)" class="p"/>
<ellipse cx="738.1" cy="288.4" rx="3.5" ry="5.7" transform="rotate(21.9 738.1 288.4)" fill="rgb(153,196,255)" class="p"/>
<ellipse cx="769.8" cy="343.0" rx="3.7" ry="7.2" transform="rotate(-10.7 769.8 343.0)" fill="rgb(153,181,255)" class="p"/>
<ellipse cx="654.5" cy="452.2" rx="4.8" ry="11.9" transform="rotate(-2.4 654.5 452.2)" fill="rgb(153,224,255)" class="p"/>
<ellipse cx="543.4" cy="280.7" rx="4.3" ry="7.0" transform="rotate(32.6 543.4 280.7)" fill="rgb(153,207,255)" class="p"/>
<ellipse cx="595.9" cy="384.7" rx="3.9" ry="9.4" transform="rotate(-11.0 595.9 384.7)" fill="rgb(153,168,255)" class="p"/>
<ellipse cx="670.4" cy="663.2" rx="5.6" ry="16.6" transform="rotate(0.6 670.4 663.2)" fill="rgb(153,212,255)" class="p"/>
<ellipse cx="667.4" cy="652.8" rx="5.1" ry="14.3" transform="rotate(-0.4 667.4 652.8)" fill="rgb(153,234,255)" class="p"/>
<ellipse cx="711.3" cy="296.2" rx="3.9" ry="5.9" transform="rotate(-14.3 711.3 296.2)" fill="rgb(153,234,255)" class="p"/>
<ellipse cx="669.3" cy="497.9" rx="2.8" ry="6.7" transform="rotate(0.2 669.3 497.9)" fill="rgb(153,234,255)" class="p"/>
<ellipse cx="668.4" cy="629.1" rx="4.7" ry="15.2" transform="rotate(0.0 668.4 629.1)" fill="rgb(153,198,255)" class="p"/>
<ellipse cx="612.0" cy="489.4" rx="3.4" ry="6.8" transform="rotate(-13.7 612.0 489.4)" fill="rgb(153,222,255)" class="p"/>
<ellipse cx="724.0" cy="480.4" rx="4.0" ry="9.6" transform="rotate(10.2 724.0 480.4)" fill="rgb(153,208,255)" class="p"/>
<ellipse cx="668.4" cy="773.6" rx="4.4" ry="15.9" transform="rotate(-0.1 668.4 773.6)" fill="rgb(153,223,255)" class="p"/>
<ellipse cx="563.9" cy="653.3" rx="6.0" ry="17.2" transform="rotate(4.1 563.9 653.3)" fill="rgb(153,197,255)" class="p"/>
<ellipse cx="658.0" cy="407.9" rx="3.8" ry="8.9" transform="rotate(-1.7 658.0 407.9)" fill="rgb(153,202,255)" class="p"/>
<ellipse cx="678.0" cy="465.8" rx="3.6" ry="10.1" transform="rotate(1.5 678.0 465.8)" fill="rgb(153,200,255)" class="p"/>
<ellipse cx="573.8" cy="344.2" rx="3.1" ry="6.7" transform="rotate(7.5 573.8 344.2)" fill="rgb(153,213,255)" class="p"/>
<ellipse cx="528.3" cy="543.6" rx="3.5" ry="8.2" transform="rotate(9.7 528.3 543.6)" fill="rgb(153,201,255)" class="p"/>
<ellipse cx="820.9" cy="452.9" rx="4.9" ry="11.9" transform="rotate(-8.7 820.9 452.9)" fill="rgb(153,232,255)" class="p"/>
<ellipse cx="729.5" cy="468.7" rx="4.1" ry="6.5" transform="rotate(25.9 729.5 468.7)" fill="rgb(153,169,255)" class="p"/>
<ellipse cx="559.6" cy="444.7" rx="4.9" ry="13.0" transform="rotate(4.6 559.6 444.7)" fill="rgb(153,197,255)" class="p"/>
<ellipse cx="617.5" cy="540.6" rx="4.4" ry="13.1" transform="rotate(1.7 617.5 540.6)" fill="rgb(153,190,255)" class="p"/>
<ellipse cx="667.8" cy="654.4" rx="4.9" ry="15.0" transform="rotate(-0.2 667.8 654.4)" fill="rgb(153,204,255)" class="p"/>
<ellipse cx="537.3" cy="678.2" rx="5.9" ry="18.2" transform="rotate(4.1 537.3 678.2)" fill="rgb(153,201,255)" class="p"/>
<ellipse cx="631.6" cy="491.9" rx="4.1" ry="7.7" transform="rotate(-9.8 631.6 491.9)" fill="rgb(153,234,255)" class="p"/>
<ellipse cx="782.2" cy="800.4" rx="3.1" ry="10.8" transform="rotate(-2.8 782.2 800.4)" fill="rgb(153,194,255)" class="p"/>
<ellipse cx="612.9" cy="394.7" rx="4.1" ry="10.2" transform="rotate(-8.2 612.9 394.7)" fill="rgb(153,197,255)" class="p"/>
<ellipse cx="569.2" cy="436.7" rx="3.9" ry="7.7" transform="rotate(11.5 569.2 436.7)" fill="rgb(153,233,255)" class="p"/>
<ellipse cx="861.9" cy="645.5" rx="3.4" ry="9.9" transform="rotate(-7.0 861.9 645.5)" fill="rgb(153,196,255)" class="p"/>
<ellipse cx="682.1" cy="434.4" rx="5.5" ry="8.6" transform="rotate(5.7 682.1 434.4)" fill="rgb(153,220,255)" class="p"/>
<ellipse cx="666.6" cy="772.2" rx="3.0" ry="9.8" transform="rotate(-2.4 666.6 772.2)" fill="rgb(153,187,255)" class="p"/>
<ellipse cx="637.2" cy="449.5" rx="3.6" ry="9.9" transform="rotate(-4.7 637.2 449.5)" fill="rgb(153,191,255)" class="p"/>
<ellipse cx="646.0" cy="611.3" rx="3.8" ry="9.9" transform="rotate(-5.8 646.0 611.3)" fill="rgb(153,168,255)" class="p"/>
<ellipse cx="622.5" cy="363.8" rx="2.9" ry="4.9" transform="rotate(-13.7 622.5 363.8)" fill="rgb(153,213,255)" class="p"/>
<ellipse cx="786.9" cy="449.7" rx="5.1" ry="13.1" transform="rotate(-5.7 786.9 449.7)" fill="rgb(153,209,255)" class="p"/>
<ellipse cx="680.0" cy="518.6" rx="2.9" ry="6.2" transform="rotate(-1.0 680.0 518.6)" fill="rgb(153,219,255)" class="p"/>
<ellipse cx="700.1" cy="504.5" rx="3.5" ry="7.8" transform="rotate(6.6 700.1 504.5)" fill="rgb(153,225,255)" class="p"/>
<ellipse cx="633.6" cy="547.6" rx="4.8" ry="12.9" transform="rotate(-7.0 633.6 547.6)" fill="rgb(153,218,255)" class="p"/>
<ellipse cx="702.0" cy="408.2" rx="2.8" ry="5.6" transform="rotate(6.9 702.0 408.2)" fill="rgb(153,201,255)" class="p"/>
<ellipse cx="833.4" cy="602.5" rx="3.4" ry="9.8" transform="rotate(-6.3 833.4 602.5)" fill="rgb(153,191,255)" class="p"/>
<ellipse cx="549.8" cy="470.6" rx="5.3" ry="14.4" transform="rotate(4.7 549.8 470.6)" fill="rgb(153,217,255)" class="p"/>
<ellipse cx="774.9" cy="782.5" rx="2.9" ry="10.5" transform="rotate(-2.3 774.9 782.5)" fill="rgb(153,178,255)" class="p"/>
<ellipse cx="648.7" cy="621.6" rx="5.8" ry="17.4" transform="rotate(-5.0 648.7 621.6)" fill="rgb(153,218,255)" class="p"/>
<ellipse cx="660.0" cy="569.6" rx="5.1" ry="14.3" transform="rotate(-1.8 660.0 569.6)" fill="rgb(153,190,255)" class="p"/>
<ellipse cx="620.5" cy="646.2" rx="4.3" ry="14.5" transform="rotate(1.2 620.5 646.2)" fill="rgb(153,203,255)" class="p"/>
<ellipse cx="717.8" cy="409.4" rx="3.9" ry="6.2" transform="rotate(20.6 717.8 409.4)" fill="rgb(153,230,255)" class="p"/>
<ellipse cx="666.7" cy="669.6" rx="3.0" ry="9.0" transform="rotate(-0.6 666.7 669.6)" fill="rgb(153,197,255)" class="p"/>
<ellipse cx="657.2" cy="701.4" rx="3.1" ry="9.5" transform="rotate(-4.7 657.2 701.4)" fill="rgb(153,208,255)" class="p"/>
<ellipse cx="637.1" cy="537.1" rx="3.3" ry="7.8" transform="rotate(-6.7 637.1 537.1)" fill="rgb(153,205,255)" class="p"/>
<ellipse cx="641.5" cy="599.8" rx="3.6" ry="9.1" transform="rotate(-6.8 641.5 599.8)" fill="rgb(153,185,255)" class="p"/>
<ellipse cx="913.0" cy="618.1" rx="3.1" ry="9.9" transform="rotate(-6.7 913.0 618.1)" fill="rgb(153,223,255)" class="p"/>
<ellipse cx="664.4" cy="314.6" rx="6.0" ry="9.9" transform="rotate(-1.2 664.4 314.6)" fill="rgb(153,224,255)" class="p"/>
<ellipse cx="633.4" cy="476.8" rx="4.1" ry="10.7" transform="rotate(-5.9 633.4 476.8)" fill="rgb(153,232,255)" class="p"/>
<ellipse cx="777.7" cy="304.0" rx="4.1" ry="6.4" transform="rotate(41.2 777.7 304.0)" fill="rgb(153,179,255)" class="p"/>
<ellipse cx="744.6" cy="464.6" rx="5.1" ry="10.0" transform="rotate(17.9 744.6 464.6)" fill="rgb(153,175,255)" class="p"/>
<ellipse cx="744.0" cy="421.9" rx="3.4" ry="5.1" transform="rotate(46.5 744.0 421.9)" fill="rgb(153,187,255)" class="p"/>
<ellipse cx="584.3" cy="391.4" rx="5.3" ry="11.7" transform="rotate(-14.4 584.3 391.4)" fill="rgb(153,204,255)" class="p"/>
<ellipse cx="632.9" cy="721.5" rx="5.4" ry="18.0" transform="rotate(0.9 632.9 721.5)" fill="rgb(153,210,255)" class="p"/>
<ellipse cx="665.4" cy="446.2" rx="5.7" ry="8.3" transform="rotate(-1.8 665.4 446.2)" fill="rgb(153,202,255)" class="p"/>
<ellipse cx="785.3" cy="495.1" rx="4.4" ry="10.8" transform="rotate(-6.7 785.3 495.1)" fill="rgb(153,188,255)" class="p"/>
<ellipse cx="596.7" cy="400.1" rx="3.9" ry="6.2" transform="rotate(21.3 596.7 400.1)" fill="rgb(153,174,255)" class="p"/>
<ellipse cx="674.5" cy="530.7" rx="4.1" ry="12.6" transform="rotate(1.1 674.5 530.7)" fill="rgb(153,234,255)" class="p"/>
<ellipse cx="754.5" cy="368.8" rx="5.3" ry="8.5" transform="rotate(-24.3 754.5 368.8)" fill="rgb(153,196,255)" class="p"/>
<ellipse cx="583.3" cy="561.2" rx="3.8" ry="11.6" transform="rotate(2.7 583.3 561.2)" fill="rgb(153,202,255)" class="p"/>
<ellipse cx="836.0" cy="310.7" rx="6.0" ry="11.2" transform="rotate(-22.5 836.0 310.7)" fill="rgb(153,192,255)" class="p"/>
<ellipse cx="723.0" cy="453.0" rx="5.7" ry="13.2" transform="rotate(9.7 723.0 453.0)" fill="rgb(153,191,255)" class="p"/>
<ellipse cx="553.1" cy="424.6" rx="4.8" ry="9.9" transform="rotate(10.9 553.1 424.6)" fill="rgb(153,210,255)" class="p"/>
<ellipse cx="669.6" cy="390.0" rx="4.3" ry="8.7" transform="rotate(0.2 669.6 390.0)" fill="rgb(153,186,255)" class="p"/>
<ellipse cx="669.3" cy="792.1" rx="3.5" ry="11.9" transform="rotate(2.6 669.3 792.1)" fill="rgb(153,203,255)" class="p"/>
<ellipse cx="694.4" cy="400.6" rx="5.1" ry="12.2" transform="rotate(-1.5 694.4 400.6)" fill="rgb(153,225,255)" class="p"/>
<ellipse cx="830.0" cy="595.8" rx="5.8" ry="17.9" transform="rotate(-4.8 830.0 595.8)" fill="rgb(153,234,255)" class="p"/>
<ellipse cx="676.3" cy="640.8" rx="3.2" ry="9.1" transform="rotate(2.2 676.3 640.8)" fill="rgb(153,217,255)" class="p"/>
<ellipse cx="775.4" cy="493.3" rx="3.5" ry="9.5" transform="rotate(-4.6 775.4 493.3)" fill="rgb(153,207,255)" class="p"/>
<ellipse cx="553.9" cy="411.4" rx="3.0" ry="7.5" transform="rotate(5.9 553.9 411.4)" fill="rgb(153,214,255)" class="p"/>
<ellipse cx="666.1" cy="314.7" rx="4.2" ry="7.6" transform="rotate(-0.5 666.1 314.7)" fill="rgb(153,224,255)" class="p"/>
<ellipse cx="563.2" cy="406.4" rx="3.3" ry="6.1" transform="rotate(14.6 563.2 406.4)" fill="rgb(153,200,255)" class="p"/>
<ellipse cx="613.0" cy="618.7" rx="4.1" ry="12.7" transform="rotate(1.7 613.0 618.7)" fill="rgb(153,187,255)" class="p"/>
<ellipse cx="617.6" cy="528.6" rx="5.5" ry="14.4" transform="rotate(-9.7 617.6 528.6)" fill="rgb(153,225,255)" class="p"/>
<ellipse cx="653.5" cy="448.7" rx="4.1" ry="5.5" transform="rotate(21.2 653.5 448.7)" fill="rgb(153,197,255)" class="p"/>
<ellipse cx="613.1" cy="588.1" rx="5.5" ry="17.4" transform="rotate(1.6 613.1 588.1)" fill="rgb(153,225,255)" class="p"/>
<ellipse cx="852.4" cy="439.5" rx="4.5" ry="11.1" transform="rotate(-10.4 852.4 439.5)" fill="rgb(153,194,255)" class="p"/>
<ellipse cx="673.1" cy="324.2" rx="5.8" ry="8.4" transform="rotate(2.3 673.1 324.2)" fill="rgb(153,190,255)" class="p"/>
<ellipse cx="617.9" cy="422.2" rx="3.9" ry="5.8" transform="rotate(24.4 617.9 422.2)" fill="rgb(153,188,255)" class="p"/>
<ellipse cx="621.6" cy="364.4" rx="3.8" ry="5.4" transform="rotate(-34.5 621.6 364.4)" fill="rgb(153,208,255)" class="p"/>
<ellipse cx="673.0" cy="750.3" rx="3.2" ry="11.7" transform="rotate(3.4 673.0 750.3)" fill="rgb(153,194,255)" class="p"/>
<ellipse cx="675.4" cy="688.1" rx="5.7" ry="17.5" transform="rotate(2.6 675.4 688.1)" fill="rgb(153,225,255)" class="p"/>
<ellipse cx="651.1" cy="616.5" rx="5.2" ry="15.8" transform="rotate(-4.3 651.1 616.5)" fill="rgb(153,196,255)" class="p"/>
<ellipse cx="721.2" cy="443.6" rx="4.7" ry="7.1" transform="rotate(-21.1 721.2 443.6)" fill="rgb(153,208,255)" class="p"/>
<ellipse cx="676.4" cy="576.2" rx="3.1" ry="8.3" transform="rotate(1.7 676.4 576.2)" fill="rgb(153,203,255)" class="p"/>
<ellipse cx="724.0" cy="502.8" rx="3.9" ry="9.3" transform="rotate(10.7 724.0 502.8)" fill="rgb(153,222,255)" class="p"/>
<ellipse cx="744.1" cy="486.9" rx="5.0" ry="9.1" transform="rotate(22.1 744.1 486.9)" fill="rgb(153,201,255)" class="p"/>
<ellipse cx="694.5" cy="467.4" rx="2.9" ry="7.5" transform="rotate(4.4 694.5 467.4)" fill="rgb(153,177,255)" class="p"/>
<ellipse cx="659.8" cy="381.8" rx="5.6" ry="9.1" transform="rotate(2.1 659.8 381.8)" fill="rgb(153,198,255)" class="p"/>
<ellipse cx="737.4" cy="456.8" rx="5.7" ry="8.3" transform="rotate(61.3 737.4 456.8)" fill="rgb(153,194,255)" class="p"/>
<ellipse cx="747.8" cy="264.3" rx="5.3" ry="8.3" transform="rotate(28.1 747.8 264.3)" fill="rgb(153,200,255)" class="p"/>
<ellipse cx="669.0" cy="791.2" rx="4.6" ry="16.4" transform="rotate(1.6 669.0 791.2)" fill="rgb(153,201,255)" class="p"/>
<ellipse cx="733.6" cy="355.2" rx="4.3" ry="9.5" transform="rotate(10.6 733.6 355.2)" fill="rgb(153,189,255)" class="p"/>
<ellipse cx="526.2" cy="642.2" rx="5.3" ry="14.5" transform="rotate(6.4 526.2 642.2)" fill="rgb(153,180,255)" class="p"/>
<ellipse cx="662.2" cy="452.6" rx="5.1" ry="8.6" transform="rotate(-2.1 662.2 452.6)" fill="rgb(153,202,255)" class="p"/>
<ellipse cx="652.4" cy="618.6" rx="4.9" ry="13.8" transform="rotate(-4.1 652.4 618.6)" fill="rgb(153,232,255)" class="p"/>
<ellipse cx="781.0" cy="464.4" rx="4.1" ry="6.6" transform="rotate(-39.0 781.0 464.4)" fill="rgb(153,174,255)" class="p"/>
<ellipse cx="810.8" cy="352.2" rx="4.3" ry="7.5" transform="rotate(-26.9 810.8 352.2)" fill="rgb(153,189,255)" class="p"/>
<ellipse cx="801.5" cy="463.7" rx="2.8" ry="7.5" transform="rotate(-5.9 801.5 463.7)" fill="rgb(153,196,255)" class="p"/>
<ellipse cx="643.8" cy="646.8" rx="4.2" ry="11.9" transform="rotate(-7.3 643.8 646.8)" fill="rgb(153,176,255)" class="p"/>
<ellipse cx="582.1" cy="305.4" rx="5.4" ry="9.3" transform="rotate(-22.0 582.1 305.4)" fill="rgb(153,209,255)" class="p"/>
<ellipse cx="627.2" cy="459.1" rx="5.8" ry="14.7" transform="rotate(-6.8 627.2 459.1)" fill="rgb(153,173,255)" class="p"/>
<ellipse cx="654.6" cy="673.7" rx="3.0" ry="8.9" transform="rotate(0.5 654.6 673.7)" fill="rgb(153,231,255)" class="p"/>
<ellipse cx="821.4" cy="736.2" rx="5.9" ry="19.9" transform="rotate(-3.8 821.4 736.2)" fill="rgb(153,187,255)" class="p"/>
<ellipse cx="661.3" cy="512.2" rx="3.3" ry="8.4" transform="rotate(-1.4 661.3 512.2)" fill="rgb(153,217,255)" class="p"/>
<ellipse cx="710.2" cy="405.2" rx="4.7" ry="9.0" transform="rotate(9.1 710.2 405.2)" fill="rgb(153,219,255)" class="p"/>
<ellipse cx="558.6" cy="309.4" rx="3.1" ry="6.3" transform="rotate(10.4 558.6 309.4)" fill="rgb(153,180,255)" class="p"/>
<ellipse cx="725.9" cy="710.9" rx="3.9" ry="11.7" transform="rotate(-2.1 725.9 710.9)" fill="rgb(153,228,255)" class="p"/>
<ellipse cx="578.2" cy="366.5" rx="4.5" ry="10.7" transform="rotate(-13.6 578.2 366.5)" fill="rgb(153,209,255)" class="p"/>
<ellipse cx="642.3" cy="518.1" rx="5.9" ry="17.6" transform="rotate(0.8 642.3 518.1)" fill="rgb(153,195,255)" class="p"/>
<ellipse cx="751.6" cy="381.7" rx="2.8" ry="4.3" transform="rotate(-27.4 751.6 381.7)" fill="rgb(153,225,255)" class="p"/>
<ellipse cx="725.0" cy="449.1" rx="3.6" ry="9.7" transform="rotate(8.7 725.0 449.1)" fill="rgb(153,219,255)" class="p"/>
<ellipse cx="642.2" cy="570.3" rx="3.9" ry="11.8" transform="rotate(-5.3 642.2 570.3)" fill="rgb(153,180,255)" class="p"/>
<ellipse cx="580.9" cy="311.8" rx="3.2" ry="5.2" transform="rotate(-28.6 580.9 311.8)" fill="rgb(153,218,255)" class="p"/>
<ellipse cx="672.6" cy="514.7" rx="4.1" ry="10.4" transform="rotate(0.8 672.6 514.7)" fill="rgb(153,223,255)" class="p"/>
<ellipse cx="666.1" cy="769.2" rx="5.2" ry="18.3" transform="rotate(-2.8 666.1 769.2)" fill="rgb(153,205,255)" class="p"/>
<ellipse cx="660.0" cy="608.1" rx="5.2" ry="16.0" transform="rotate(-2.0 660.0 608.1)" fill="rgb(153,234,255)" class="p"/>
<ellipse cx="669.0" cy="580.9" rx="5.7" ry="16.8" transform="rotate(-0.0 669.0 580.9)" fill="rgb(153,195,255)" class="p"/>
<ellipse cx="675.6" cy="615.4" rx="4.1" ry="13.5" transform="rotate(1.7 675.6 615.4)" fill="rgb(153,197,255)" class="p"/>
<ellipse cx="548.7" cy="336.5" rx="3.7" ry="7.2" transform="rotate(14.0 548.7 336.5)" fill="rgb(153,186,255)" class="p"/>
<ellipse cx="552.7" cy="267.4" rx="5.5" ry="8.4" transform="rotate(55.7 552.7 267.4)" fill="rgb(153,234,255)" class="p"/>
<ellipse cx="668.8" cy="477.5" rx="3.8" ry="10.9" transform="rotate(0.1 668.8 477.5)" fill="rgb(153,227,255)" class="p"/>
<ellipse cx="654.0" cy="452.7" rx="4.9" ry="10.3" transform="rotate(1.3 654.0 452.7)" fill="rgb(153,221,255)" class="p"/>
<ellipse cx="614.3" cy="397.2" rx="4.0" ry="6.1" transform="rotate(-27.4 614.3 397.2)" fill="rgb(153,218,255)" class="p"/>
<ellipse cx="676.7" cy="265.5" rx="6.0" ry="7.8" transform="rotate(-13.1 676.7 265.5)" fill="rgb(153,211,255)" class="p"/>
<ellipse cx="668.0" cy="435.1" rx="5.4" ry="10.6" transform="rotate(0.1 668.0 435.1)" fill="rgb(153,200,255)" class="p"/>
<ellipse cx="747.3" cy="336.4" rx="5.3" ry="11.7" transform="rotate(-5.7 747.3 336.4)" fill="rgb(153,223,255)" class="p"/>
<ellipse cx="709.4" cy="382.4" rx="3.9" ry="6.2" transform="rotate(14.6 709.4 382.4)" fill="rgb(153,198,255)" class="p"/>
<ellipse cx="572.1" cy="386.4" rx="3.0" ry="6.0" transform="rotate(-19.2 572.1 386.4)" fill="rgb(153,187,255)" class="p"/>
<ellipse cx="669.4" cy="795.8" rx="6.0" ry="21.6" transform="rotate(4.2 669.4 795.8)" fill="rgb(153,215,255)" class="p"/>
<ellipse cx="651.1" cy="460.1" rx="3.9" ry="9.4" transform="rotate(-3.1 651.1 460.1)" fill="rgb(153,169,255)" class="p"/>
<ellipse cx="668.9" cy="406.0" rx="4.4" ry="10.2" transform="rotate(-0.0 668.9 406.0)" fill="rgb(153,180,255)" class="p"/>
<ellipse cx="725.9" cy="506.9" rx="5.3" ry="12.1" transform="rotate(-4.1 725.9 506.9)" fill="rgb(153,216,255)" class="p"/>
<ellipse cx="652.6" cy="411.7" rx="3.7" ry="7.6" transform="rotate(-3.1 652.6 411.7)" fill="rgb(153,181,255)" class="p"/>
<ellipse cx="658.3" cy="307.3" rx="3.9" ry="6.5" transform="rotate(2.0 658.3 307.3)" fill="rgb(153,220,255)" class="p"/>
<ellipse cx="607.5" cy="408.3" rx="3.5" ry="4.9" transform="rotate(-60.5 607.5 408.3)" fill="rgb(153,209,255)" class="p"/>
<ellipse cx="470.7" cy="476.1" rx="3.9" ry="10.4" transform="rotate(8.7 470.7 476.1)" fill="rgb(153,178,255)" class="p"/>
<ellipse cx="722.8" cy="458.5" rx="5.5" ry="14.3" transform="rotate(8.8 722.8 458.5)" fill="rgb(153,211,255)" class="p"/>
<ellipse cx="606.2" cy="388.8" rx="2.8" ry="4.6" transform="rotate(14.0 606.2 388.8)" fill="rgb(153,210,255)" class="p"/>
<ellipse cx="730.0" cy="328.1" rx="3.8" ry="5.5" transform="rotate(40.0 730.0 328.1)" fill="rgb(153,193,255)" class="p"/>
<ellipse cx="666.2" cy="759.5" rx="3.4" ry="11.4" transform="rotate(-2.1 666.2 759.5)" fill="rgb(153,181,255)" class="p"/>
<ellipse cx="553.4" cy="381.5" rx="3.7" ry="8.9" transform="rotate(6.8 553.4 381.5)" fill="rgb(153,207,255)" class="p"/>
<ellipse cx="800.4" cy="291.8" rx="3.5" ry="6.0" transform="rotate(34.7 800.4 291.8)" fill="rgb(153,212,255)" class="p"/>
<ellipse cx="736.0" cy="424.4" rx="3.6" ry="5.3" transform="rotate(-36.7 736.0 424.4)" fill="rgb(153,193,255)" class="p"/>
<ellipse cx="636.6" cy="272.8" rx="3.5" ry="5.5" transform="rotate(7.6 636.6 272.8)" fill="rgb(153,182,255)" class="p"/>
<ellipse cx="536.9" cy="541.4" rx="3.6" ry="8.7" transform="rotate(8.0 536.9 541.4)" fill="rgb(153,182,255)" class="p"/>
<ellipse cx="661.3" cy="270.0" rx="3.4" ry="4.7" transform="rotate(5.3 661.3 270.0)" fill="rgb(153,211,255)" class="p"/>
<ellipse cx="624.0" cy="357.0" rx="5.0" ry="7.0" transform="rotate(-36.7 624.0 357.0)" fill="rgb(153,204,255)" class="p"/>
<ellipse cx="678.2" cy="380.0" rx="3.7" ry="4.9" transform="rotate(10.6 678.2 380.0)" fill="rgb(153,194,255)" class="p"/>
<ellipse cx="646.8" cy="456.7" rx="4.0" ry="5.3" transform="rotate(62.4 646.8 456.7)" fill="rgb(153,218,255)" class="p"/>
<ellipse cx="638.1" cy="566.2" rx="3.5" ry="10.0" transform="rotate(1.1 638.1 566.2)" fill="rgb(153,208,255)" class="p"/>
<ellipse cx="597.9" cy="268.7" rx="5.9" ry="9.3" transform="rotate(-23.1 597.9 268.7)" fill="rgb(153,184,255)" class="p"/>
<ellipse cx="540.7" cy="603.4" rx="3.3" ry="9.8" transform="rotate(4.3 540.7 603.4)" fill="rgb(153,187,255)" class="p"/>
<ellipse cx="538.5" cy="606.0" rx="4.4" ry="12.7" transform="rotate(4.9 538.5 606.0)" fill="rgb(153,182,255)" class="p"/>
<ellipse cx="701.0" cy="431.3" rx="3.2" ry="7.1" transform="rotate(-2.4 701.0 431.3)" fill="rgb(153,194,255)" class="p"/>
<ellipse cx="565.9" cy="545.3" rx="4.2" ry="11.2" transform="rotate(4.6 565.9 545.3)" fill="rgb(153,229,255)" class="p"/>
<ellipse cx="655.8" cy="409.8" rx="5.9" ry="13.3" transform="rotate(0.9 655.8 409.8)" fill="rgb(153,215,255)" class="p"/>
<ellipse cx="843.2" cy="685.9" rx="5.1" ry="14.9" transform="rotate(-6.8 843.2 685.9)" fill="rgb(153,180,255)" class="p"/>
<ellipse cx="554.0" cy="790.1" rx="5.7" ry="18.7" transform="rotate(3.2 554.0 790.1)" fill="rgb(153,191,255)" class="p"/>
<ellipse cx="660.3" cy="740.4" rx="4.8" ry="17.2" transform="rotate(-5.2 660.3 740.4)" fill="rgb(153,211,255)" class="p"/>
<ellipse cx="728.3" cy="460.9" rx="6.0" ry="10.1" transform="rotate(20.3 728.3 460.9)" fill="rgb(153,211,255)" class="p"/>
<ellipse cx="553.8" cy="566.2" rx="5.0" ry="12.5" transform="rotate(6.6 553.8 566.2)" fill="rgb(153,211,255)" class="p"/>
<ellipse cx="928.9" cy="730.1" rx="3.6" ry="12.9" transform="rotate(-5.8 928.9 730.1)" fill="rgb(153,202,255)" class="p"/>
<ellipse cx="540.5" cy="545.3" rx="5.8" ry="17.4" transform="rotate(4.2 540.5 545.3)" fill="rgb(153,170,255)" class="p"/>
<ellipse cx="753.5" cy="283.6" rx="5.2" ry="9.3" transform="rotate(-12.3 753.5 283.6)" fill="rgb(153,215,255)" class="p"/>
<ellipse cx="653.4" cy="390.6" rx="4.4" ry="6.2" transform="rotate(-12.3 653.4 390.6)" fill="rgb(153,192,255)" class="p"/>
<ellipse cx="668.0" cy="618.3" rx="4.0" ry="11.5" transform="rotate(-0.1 668.0 618.3)" fill="rgb(153,187,255)" class="p"/>
<ellipse cx="712.9" cy="388.0" rx="3.6" ry="8.9" transform="rotate(6.5 712.9 388.0)" fill="rgb(153,214,255)" class="p"/>
<ellipse cx="599.3" cy="636.2" rx="5.5" ry="15.9" transform="rotate(2.7 599.3 636.2)" fill="rgb(153,184,255)" class="p"/>
<ellipse cx="734.2" cy="590.2" rx="5.8" ry="17.4" transform="rotate(-2.2 734.2 590.2)" fill="rgb(153,207,255)" class="p"/>
<ellipse cx="797.2" cy="329.8" rx="4.0" ry="7.6" transform="rotate(-15.6 797.2 329.8)" fill="rgb(153,211,255)" class="p"/>
<ellipse cx="666.7" cy="447.5" rx="4.5" ry="11.8" transform="rotate(-0.3 666.7 447.5)" fill="rgb(153,184,255)" class="p"/>
<ellipse cx="662.9" cy="763.9" rx="5.2" ry="18.9" transform="rotate(-5.6 662.9 763.9)" fill="rgb(153,211,255)" class="p"/>
<ellipse cx="614.1" cy="517.0" rx="5.1" ry="11.9" transform="rotate(3.7 614.1 517.0)" fill="rgb(153,207,255)" class="p"/>
<ellipse cx="699.3" cy="272.5" rx="5.0" ry="7.8" transform="rotate(10.7 699.3 272.5)" fill="rgb(153,227,255)" class="p"/>
<ellipse cx="797.8" cy="328.8" rx="5.6" ry="11.6" transform="rotate(-11.3 797.8 328.8)" fill="rgb(153,216,255)" class="p"/>
<ellipse cx="630.8" cy="406.5" rx="3.7" ry="7.6" transform="rotate(-7.3 630.8 406.5)" fill="rgb(153,208,255)" class="p"/>
<ellipse cx="580.0" cy="408.5" rx="3.5" ry="5.2" transform="rotate(52.7 580.0 408.5)" fill="rgb(153,219,255)" class="p"/>
<ellipse cx="624.2" cy="331.3" rx="3.0" ry="4.1" transform="rotate(32.8 624.2 331.3)" fill="rgb(153,224,255)" class="p"/>
<ellipse cx="665.1" cy="449.9" rx="3.3" ry="5.8" transform="rotate(0.6 665.1 449.9)" fill="rgb(153,197,255)" class="p"/>
<ellipse cx="662.1" cy="662.5" rx="3.2" ry="9.2" transform="rotate(0.2 662.1 662.5)" fill="rgb(153,195,255)" class="p"/>
<ellipse cx="685.2" cy="472.1" rx="2.8" ry="6.3" transform="rotate(3.3 685.2 472.1)" fill="rgb(153,230,255)" class="p"/>
<ellipse cx="586.9" cy="339.0" rx="4.9" ry="8.6" transform="rotate(-20.6 586.9 339.0)" fill="rgb(153,196,255)" class="p"/>
<ellipse cx="748.7" cy="324.7" rx="2.9" ry="6.0" transform="rotate(-7.5 748.7 324.7)" fill="rgb(153,234,255)" class="p"/>
<ellipse cx="663.3" cy="745.9" rx="4.0" ry="14.0" transform="rotate(-3.7 663.3 745.9)" fill="rgb(153,185,255)" class="p"/>
<ellipse cx="641.5" cy="563.2" rx="4.2" ry="9.8" transform="rotate(1.8 641.5 563.2)" fill="rgb(153,203,255)" class="p"/>
<ellipse cx="661.5" cy="721.1" rx="4.2" ry="12.8" transform="rotate(-3.6 661.5 721.1)" fill="rgb(153,189,255)" class="p"/>
<ellipse cx="659.1" cy="392.7" rx="5.8" ry="11.0" transform="rotate(-2.1 659.1 392.7)" fill="rgb(153,214,255)" class="p"/>
<ellipse cx="785.2" cy="349.8" rx="3.7" ry="5.8" transform="rotate(-41.0 785.2 349.8)" fill="rgb(153,196,255)" class="p"/>
<ellipse cx="637.3" cy="528.1" rx="3.5" ry="10.5" transform="rotate(-5.5 637.3 528.1)" fill="rgb(153,200,255)" class="p"/>
<ellipse cx="647.4" cy="619.4" rx="5.4" ry="16.3" transform="rotate(-5.3 647.4 619.4)" fill="rgb(153,192,255)" class="p"/>
<ellipse cx="477.9" cy="378.7" rx="5.0" ry="11.9" transform="rotate(11.3 477.9 378.7)" fill="rgb(153,179,255)" class="p"/>
<ellipse cx="604.8" cy="374.9" rx="4.6" ry="8.8" transform="rotate(7.9 604.8 374.9)" fill="rgb(153,189,255)" class="p"/>
<ellipse cx="724.5" cy="334.4" rx="4.3" ry="9.3" transform="rotate(9.2 724.5 334.4)" fill="rgb(153,205,255)" class="p"/>
<ellipse cx="646.9" cy="360.3" rx="5.6" ry="10.7" transform="rotate(2.6 646.9 360.3)" fill="rgb(153,212,255)" class="p"/>
<ellipse cx="636.0" cy="500.6" rx="4.2" ry="10.4" transform="rotate(-6.1 636.0 500.6)" fill="rgb(153,202,255)" class="p"/>
<ellipse cx="679.0" cy="602.6" rx="2.9" ry="8.2" transform="rotate(2.5 679.0 602.6)" fill="rgb(153,196,255)" class="p"/>
<ellipse cx="854.0" cy="373.3" rx="5.9" ry="13.3" transform="rotate(-13.0 854.0 373.3)" fill="rgb(153,178,255)" class="p"/>
<ellipse cx="714.0" cy="300.5" rx="3.5" ry="6.0" transform="rotate(11.1 714.0 300.5)" fill="rgb(153,223,255)" class="p"/>
<ellipse cx="621.5" cy="328.4" rx="4.0" ry="6.9" transform="rotate(-12.4 621.5 328.4)" fill="rgb(153,223,255)" class="p"/>
<ellipse cx="664.0" cy="774.8" rx="5.9" ry="20.8" transform="rotate(-6.1 664.0 774.8)" fill="rgb(153,205,255)" class="p"/>
<ellipse cx="701.6" cy="355.2" rx="4.6" ry="10.4" transform="rotate(5.2 701.6 355.2)" fill="rgb(153,190,255)" class="p"/>
<ellipse cx="670.6" cy="760.6" rx="4.5" ry="14.7" transform="rotate(2.0 670.6 760.6)" fill="rgb(153,207,255)" class="p"/>
<ellipse cx="702.4" cy="353.7" rx="4.6" ry="9.8" transform="rotate(5.7 702.4 353.7)" fill="rgb(153,194,255)" class="p"/>
<ellipse cx="777.6" cy="701.2" rx="4.6" ry="13.6" transform="rotate(-4.0 777.6 701.2)" fill="rgb(153,185,255)" class="p"/>
<ellipse cx="696.5" cy="611.5" rx="4.8" ry="13.7" transform="rotate(6.9 696.5 611.5)" fill="rgb(153,234,255)" class="p"/>
<ellipse cx="817.5" cy="537.3" rx="4.2" ry="9.4" transform="rotate(-12.3 817.5 537.3)" fill="rgb(153,210,255)" class="p"/>
<ellipse cx="762.8" cy="339.7" rx="5.3" ry="7.9" transform="rotate(-43.2 762.8 339.7)" fill="rgb(153,192,255)" class="p"/>
<ellipse cx="669.2" cy="430.0" rx="3.8" ry="7.5" transform="rotate(-0.1 669.2 430.0)" fill="rgb(153,197,255)" class="p"/>
<ellipse cx="694.3" cy="793.6" rx="4.6" ry="15.4" transform="rotate(-0.7 694.3 793.6)" fill="rgb(153,210,255)" class="p"/>
<ellipse cx="560.0" cy="387.5" rx="4.5" ry="6.9" transform="rotate(52.3 560.0 387.5)" fill="rgb(153,189,255)" class="p"/>
<ellipse cx="673.0" cy="615.8" rx="3.1" ry="8.6" transform="rotate(1.1 673.0 615.8)" fill="rgb(153,218,255)" class="p"/>
<ellipse cx="682.3" cy="710.7" rx="5.8" ry="19.6" transform="rotate(-0.3 682.3 710.7)" fill="rgb(153,168,255)" class="p"/>
<ellipse cx="676.2" cy="574.8" rx="5.0" ry="13.8" transform="rotate(-0.3 676.2 574.8)" fill="rgb(153,206,255)" class="p"/>
<ellipse cx="698.1" cy="384.8" rx="4.5" ry="10.2" transform="rotate(4.8 698.1 384.8)" fill="rgb(153,191,255)" class="p"/>
<ellipse cx="677.9" cy="298.2" rx="5.3" ry="8.7" transform="rotate(2.6 677.9 298.2)" fill="rgb(153,207,255)" class="p"/>
<ellipse cx="783.8" cy="305.9" rx="4.0" ry="7.2" transform="rotate(-18.0 783.8 305.9)" fill="rgb(153,202,255)" class="p"/>
<ellipse cx="640.6" cy="566.3" rx="5.4" ry="15.3" transform="rotate(-5.8 640.6 566.3)" fill="rgb(153,230,255)" class="p"/>
<ellipse cx="635.8" cy="482.0" rx="2.7" ry="5.7" transform="rotate(-7.2 635.8 482.0)" fill="rgb(153,226,255)" class="p"/>
<ellipse cx="731.6" cy="362.7" rx="5.6" ry="12.7" transform="rotate(9.9 731.6 362.7)" fill="rgb(153,185,255)" class="p"/>
<ellipse cx="796.9" cy="515.7" rx="5.2" ry="15.4" transform="rotate(-4.3 796.9 515.7)" fill="rgb(153,201,255)" class="p"/>
<ellipse cx="654.2" cy="554.0" rx="2.8" ry="8.1" transform="rotate(0.5 654.2 554.0)" fill="rgb(153,197,255)" class="p"/>
<ellipse cx="708.4" cy="448.5" rx="4.5" ry="8.9" transform="rotate(8.8 708.4 448.5)" fill="rgb(153,201,255)" class="p"/>
<ellipse cx="620.3" cy="423.4" rx="3.8" ry="6.4" transform="rotate(-15.3 620.3 423.4)" fill="rgb(153,195,255)" class="p"/>
<ellipse cx="667.6" cy="560.5" rx="4.0" ry="9.2" transform="rotate(-0.2 667.6 560.5)" fill="rgb(153,224,255)" class="p"/>
<ellipse cx="701.2" cy="581.6" rx="4.9" ry="13.1" transform="rotate(7.4 701.2 581.6)" fill="rgb(153,172,255)" class="p"/>
<ellipse cx="662.2" cy="388.3" rx="5.7" ry="11.4" transform="rotate(0.6 662.2 388.3)" fill="rgb(153,234,255)" class="p"/>
<ellipse cx="761.7" cy="301.7" rx="5.1" ry="8.4" transform="rotate(-20.8 761.7 301.7)" fill="rgb(153,193,255)" class="p"/>
<ellipse cx="671.0" cy="274.5" rx="4.6" ry="7.3" transform="rotate(0.8 671.0 274.5)" fill="rgb(153,176,255)" class="p"/>
<ellipse cx="667.7" cy="314.6" rx="4.2" ry="5.8" transform="rotate(0.5 667.7 314.6)" fill="rgb(153,195,255)" class="p"/>
<ellipse cx="534.4" cy="328.8" rx="3.9" ry="8.2" transform="rotate(10.8 534.4 328.8)" fill="rgb(153,211,255)" class="p"/>
<ellipse cx="860.3" cy="561.3" rx="5.4" ry="15.7" transform="rotate(-6.9 860.3 561.3)" fill="rgb(153,201,255)" class="p"/>
<ellipse cx="665.6" cy="423.4" rx="2.8" ry="7.5" transform="rotate(0.1 665.6 423.4)" fill="rgb(153,210,255)" class="p"/>
<ellipse cx="566.2" cy="512.4" rx="3.3" ry="8.9" transform="rotate(4.6 566.2 512.4)" fill="rgb(153,217,255)" class="p"/>
<ellipse cx="714.9" cy="614.8" rx="4.5" ry="11.6" transform="rotate(-2.4 714.9 614.8)" fill="rgb(153,198,255)" class="p"/>
<ellipse cx="662.5" cy="371.1" rx="5.6" ry="13.4" transform="rotate(-0.9 662.5 371.1)" fill="rgb(153,197,255)" class="p"/>
<ellipse cx="757.4" cy="588.6" rx="3.7" ry="11.5" transform="rotate(-2.6 757.4 588.6)" fill="rgb(153,201,255)" class="p"/>
<ellipse cx="637.7" cy="634.5" rx="6.0" ry="15.9" transform="rotate(1.5 637.7 634.5)" fill="rgb(153,187,255)" class="p"/>
<ellipse cx="494.4" cy="444.2" rx="5.2" ry="12.1" transform="rotate(12.1 494.4 444.2)" fill="rgb(153,215,255)" class="p"/>
<ellipse cx="713.4" cy="314.7" rx="5.2" ry="8.6" transform="rotate(-9.5 713.4 314.7)" fill="rgb(153,191,255)" class="p"/>
<ellipse cx="700.0" cy="611.2" rx="5.1" ry="15.2" transform="rotate(-1.1 700.0 611.2)" fill="rgb(153,189,255)" class="p"/>
<ellipse cx="641.1" cy="306.1" rx="5.1" ry="9.7" transform="rotate(-5.3 641.1 306.1)" fill="rgb(153,194,255)" class="p"/>
<ellipse cx="634.9" cy="552.8" rx="3.6" ry="10.8" transform="rotate(-6.4 634.9 552.8)" fill="rgb(153,198,255)" class="p"/>
<ellipse cx="638.6" cy="468.1" rx="5.2" ry="8.7" transform="rotate(-10.2 638.6 468.1)" fill="rgb(153,196,255)" class="p"/>
<ellipse cx="769.5" cy="262.9" rx="3.7" ry="5.6" transform="rotate(-55.0 769.5 262.9)" fill="rgb(153,234,255)" class="p"/>
<ellipse cx="614.1" cy="431.6" rx="3.3" ry="7.9" transform="rotate(-9.1 614.1 431.6)" fill="rgb(153,207,255)" class="p"/>
<ellipse cx="674.2" cy="403.8" rx="5.3" ry="12.1" transform="rotate(-0.4 674.2 403.8)" fill="rgb(153,201,255)" class="p"/>
<ellipse cx="805.4" cy="672.1" rx="2.8" ry="8.1" transform="rotate(-5.5 805.4 672.1)" fill="rgb(153,199,255)" class="p"/>
<ellipse cx="723.7" cy="288.6" rx="2.9" ry="4.0" transform="rotate(-41.3 723.7 288.6)" fill="rgb(153,202,255)" class="p"/>
<ellipse cx="538.3" cy="517.5" rx="4.8" ry="11.1" transform="rotate(9.2 538.3 517.5)" fill="rgb(153,212,255)" class="p"/>
<ellipse cx="667.2" cy="577.2" rx="5.8" ry="15.3" transform="rotate(-0.3 667.2 577.2)" fill="rgb(153,194,255)" class="p"/>
<ellipse cx="611.2" cy="443.9" rx="4.5" ry="6.4" transform="rotate(-61.9 611.2 443.9)" fill="rgb(153,219,255)" class="p"/>
<ellipse cx="684.7" cy="591.6" rx="4.7" ry="12.6" transform="rotate(3.8 684.7 591.6)" fill="rgb(153,234,255)" class="p"/>
<ellipse cx="752.7" cy="756.9" rx="4.1" ry="14.4" transform="rotate(-1.9 752.7 756.9)" fill="rgb(153,230,255)" class="p"/>
<ellipse cx="676.9" cy="706.2" rx="4.3" ry="14.3" transform="rotate(3.6 676.9 706.2)" fill="rgb(153,209,255)" class="p"/>
<ellipse cx="674.9" cy="742.3" rx="4.9" ry="17.9" transform="rotate(4.2 674.9 742.3)" fill="rgb(153,190,255)" class="p"/>
<ellipse cx="669.7" cy="796.2" rx="3.1" ry="11.5" transform="rotate(6.0 669.7 796.2)" fill="rgb(153,234,255)" class="p"/>
<ellipse cx="668.4" cy="710.8" rx="3.2" ry="10.6" transform="rotate(-0.0 668.4 710.8)" fill="rgb(153,194,255)" class="p"/>
<ellipse cx="670.7" cy="460.3" rx="6.0" ry="14.1" transform="rotate(-0.1 670.7 460.3)" fill="rgb(153,223,255)" class="p"/>
<ellipse cx="664.3" cy="765.0" rx="4.1" ry="14.6" transform="rotate(-4.4 664.3 765.0)" fill="rgb(153,234,255)" class="p"/>
<ellipse cx="702.2" cy="463.8" rx="3.3" ry="7.4" transform="rotate(6.3 702.2 463.8)" fill="rgb(153,185,255)" class="p"/>
<ellipse cx="686.2" cy="568.9" rx="5.7" ry="16.2" transform="rotate(-0.7 686.2 568.9)" fill="rgb(153,188,255)" class="p"/>
<ellipse cx="551.7" cy="416.1" rx="4.1" ry="8.2" transform="rotate(12.8 551.7 416.1)" fill="rgb(153,183,255)" class="p"/>
<ellipse cx="644.4" cy="326.7" rx="4.1" ry="6.0" transform="rotate(10.6 644.4 326.7)" fill="rgb(153,171,255)" class="p"/>
<ellipse cx="668.1" cy="764.7" rx="4.7" ry="16.4" transform="rotate(-0.4 668.1 764.7)" fill="rgb(153,234,255)" class="p"/>
<ellipse cx="732.2" cy="477.4" rx="3.7" ry="7.1" transform="rotate(15.8 732.2 477.4)" fill="rgb(153,188,255)" class="p"/>
<ellipse cx="760.6" cy="310.6" rx="5.6" ry="9.3" transform="rotate(-19.4 760.6 310.6)" fill="rgb(153,209,255)" class="p"/>
<ellipse cx="667.9" cy="665.0" rx="5.6" ry="17.2" transform="rotate(-0.2 667.9 665.0)" fill="rgb(153,226,255)" class="p"/>
<ellipse cx="847.3" cy="409.2" rx="5.1" ry="12.2" transform="rotate(-10.7 847.3 409.2)" fill="rgb(153,193,255)" class="p"/>
<ellipse cx="646.8" cy="438.0" rx="4.2" ry="8.9" transform="rotate(-4.2 646.8 438.0)" fill="rgb(153,208,255)" class="p"/>
<ellipse cx="640.9" cy="456.0" rx="4.7" ry="6.3" transform="rotate(-41.3 640.9 456.0)" fill="rgb(153,193,255)" class="p"/>
<ellipse cx="634.9" cy="389.5" rx="2.8" ry="4.2" transform="rotate(13.4 634.9 389.5)" fill="rgb(153,220,255)" class="p"/>
<ellipse cx="669.8" cy="448.3" rx="3.6" ry="5.3" transform="rotate(0.8 669.8 448.3)" fill="rgb(153,220,255)" class="p"/>
<ellipse cx="626.8" cy="341.1" rx="4.2" ry="8.7" transform="rotate(-7.1 626.8 341.1)" fill="rgb(153,212,255)" class="p"/>
<ellipse cx="661.4" cy="536.6" rx="5.2" ry="14.9" transform="rotate(-1.3 661.4 536.6)" fill="rgb(153,198,255)" class="p"/>
<ellipse cx="786.1" cy="463.5" rx="4.1" ry="8.3" transform="rotate(-13.2 786.1 463.5)" fill="rgb(153,215,255)" class="p"/>
<ellipse cx="596.4" cy="379.6" rx="3.2" ry="6.5" transform="rotate(6.9 596.4 379.6)" fill="rgb(153,197,255)" class="p"/>
<ellipse cx="672.0" cy="347.2" rx="3.4" ry="4.9" transform="rotate(2.2 672.0 347.2)" fill="rgb(153,211,255)" class="p"/>
<ellipse cx="653.2" cy="498.0" rx="3.0" ry="6.8" transform="rotate(1.0 653.2 498.0)" fill="rgb(153,218,255)" class="p"/>
<ellipse cx="648.6" cy="451.7" rx="3.5" ry="8.0" transform="rotate(-3.7 648.6 451.7)" fill="rgb(153,200,255)" class="p"/>
<ellipse cx="669.0" cy="700.4" rx="5.4" ry="18.5" transform="rotate(0.2 669.0 700.4)" fill="rgb(153,187,255)" class="p"/>
<ellipse cx="673.9" cy="604.5" rx="3.9" ry="12.6" transform="rotate(1.2 673.9 604.5)" fill="rgb(153,211,255)" class="p"/>
<ellipse cx="688.8" cy="430.3" rx="4.4" ry="8.8" transform="rotate(4.3 688.8 430.3)" fill="rgb(153,221,255)" class="p"/>
<ellipse cx="636.5" cy="557.9" rx="3.7" ry="9.4" transform="rotate(-6.9 636.5 557.9)" fill="rgb(153,220,255)" class="p"/>
<ellipse cx="513.9" cy="599.9" rx="4.9" ry="14.8" transform="rotate(5.0 513.9 599.9)" fill="rgb(153,182,255)" class="p"/>
<ellipse cx="635.3" cy="540.0" rx="4.0" ry="11.2" transform="rotate(-6.3 635.3 540.0)" fill="rgb(153,182,255)" class="p"/>
<ellipse cx="584.5" cy="377.4" rx="5.0" ry="8.5" transform="rotate(-25.8 584.5 377.4)" fill="rgb(153,212,255)" class="p"/>
<ellipse cx="479.1" cy="793.8" rx="5.2" ry="18.9" transform="rotate(4.0 479.1 793.8)" fill="rgb(153,197,255)" class="p"/>
<ellipse cx="698.8" cy="514.3" rx="3.8" ry="10.2" transform="rotate(5.5 698.8 514.3)" fill="rgb(153,187,255)" class="p"/>
<ellipse cx="632.6" cy="524.6" rx="5.0" ry="11.2" transform="rotate(2.8 632.6 524.6)" fill="rgb(153,174,255)" class="p"/>
<ellipse cx="815.8" cy="379.8" rx="5.3" ry="11.7" transform="rotate(-11.2 815.8 379.8)" fill="rgb(153,224,255)" class="p"/>
<ellipse cx="645.2" cy="654.1" rx="5.4" ry="14.9" transform="rotate(-7.2 645.2 654.1)" fill="rgb(153,181,255)" class="p"/>
<ellipse cx="793.7" cy="276.3" rx="3.1" ry="4.8" transform="rotate(57.6 793.7 276.3)" fill="rgb(153,199,255)" class="p"/>
<ellipse cx="735.6" cy="730.9" rx="5.8" ry="18.2" transform="rotate(-2.1 735.6 730.9)" fill="rgb(153,206,255)" class="p"/>
<ellipse cx="724.9" cy="373.3" rx="3.9" ry="6.9" transform="rotate(14.4 724.9 373.3)" fill="rgb(153,196,255)" class="p"/>
<ellipse cx="796.3" cy="655.5" rx="4.5" ry="13.8" transform="rotate(-4.0 796.3 655.5)" fill="rgb(153,206,255)" class="p"/>
<ellipse cx="576.7" cy="361.5" rx="5.7" ry="9.9" transform="rotate(-24.9 576.7 361.5)" fill="rgb(153,208,255)" class="p"/>
<ellipse cx="697.9" cy="385.4" rx="3.9" ry="8.4" transform="rotate(-2.2 697.9 385.4)" fill="rgb(153,234,255)" class="p"/>
<ellipse cx="594.4" cy="781.8" rx="3.1" ry="11.6" transform="rotate(1.5 594.4 781.8)" fill="rgb(153,197,255)" opacity="0.61" class="p"/>
<ellipse cx="682.0" cy="470.1" rx="4.7" ry="10.3" transform="rotate(-1.1 682.0 470.1)" fill="rgb(153,206,255)" class="p"/>
<ellipse cx="661.1" cy="818.6" rx="4.2" ry="14.7" transform="rotate(0.2 661.1 818.6)" fill="rgb(153,202,255)" class="p"/>
<ellipse cx="806.4" cy="658.7" rx="5.5" ry="15.9" transform="rotate(-5.5 806.4 658.7)" fill="rgb(153,208,255)" class="p"/>
<ellipse cx="740.6" cy="326.3" rx="5.9" ry="10.5" transform="rotate(-11.4 740.6 326.3)" fill="rgb(153,205,255)" class="p"/>
<ellipse cx="751.8" cy="291.0" rx="3.8" ry="6.6" transform="rotate(21.1 751.8 291.0)" fill="rgb(153,205,255)" class="p"/>
<ellipse cx="780.7" cy="313.8" rx="4.7" ry="8.6" transform="rotate(24.3 780.7 313.8)" fill="rgb(153,206,255)" class="p"/>
<ellipse cx="484.8" cy="361.9" rx="5.8" ry="12.3" transform="rotate(16.3 484.8 361.9)" fill="rgb(153,202,255)" class="p"/>
<ellipse cx="793.5" cy="632.5" rx="3.6" ry="9.6" transform="rotate(-5.9 793.5 632.5)" fill="rgb(153,226,255)" class="p"/>
<ellipse cx="666.1" cy="767.6" rx="3.9" ry="12.5" transform="rotate(-2.6 666.1 767.6)" fill="rgb(153,192,255)" class="p"/>
<ellipse cx="502.1" cy="750.0" rx="5.0" ry="15.7" transform="rotate(5.4 502.1 750.0)" fill="rgb(153,197,255)" class="p"/>
<ellipse cx="691.6" cy="576.6" rx="4.2" ry="10.1" transform="rotate(5.6 691.6 576.6)" fill="rgb(153,217,255)" class="p"/>
<ellipse cx="843.7" cy="437.1" rx="5.1" ry="11.4" transform="rotate(-13.7 843.7 437.1)" fill="rgb(153,168,255)" class="p"/>
<ellipse cx="655.0" cy="612.7" rx="3.3" ry="8.8" transform="rotate(0.7 655.0 612.7)" fill="rgb(153,200,255)" class="p"/>
<ellipse cx="492.3" cy="349.8" rx="5.1" ry="11.7" transform="rotate(11.3 492.3 349.8)" fill="rgb(153,213,255)" class="p"/>
<ellipse cx="609.8" cy="342.4" rx="4.7" ry="6.9" transform="rotate(-31.5 609.8 342.4)" fill="rgb(153,216,255)" class="p"/>
<ellipse cx="648.9" cy="539.4" rx="6.0" ry="17.6" transform="rotate(0.7 648.9 539.4)" fill="rgb(153,202,255)" class="p"/>
<ellipse cx="652.4" cy="311.7" rx="5.0" ry="9.3" transform="rotate(-3.4 652.4 311.7)" fill="rgb(153,189,255)" class="p"/>
<ellipse cx="697.1" cy="597.1" rx="3.1" ry="9.2" transform="rotate(6.5 697.1 597.1)" fill="rgb(153,232,255)" class="p"/>
<ellipse cx="709.0" cy="469.3" rx="5.2" ry="14.4" transform="rotate(-1.6 709.0 469.3)" fill="rgb(153,184,255)" class="p"/>
<ellipse cx="659.2" cy="403.4" rx="4.5" ry="11.0" transform="rotate(0.5 659.2 403.4)" fill="rgb(153,207,255)" class="p"/>
<ellipse cx="616.8" cy="518.8" rx="3.7" ry="7.7" transform="rotate(-12.5 616.8 518.8)" fill="rgb(153,174,255)" class="p"/>
<ellipse cx="663.7" cy="745.8" rx="5.5" ry="18.3" transform="rotate(-3.4 663.7 745.8)" fill="rgb(153,168,255)" class="p"/>
<ellipse cx="780.3" cy="443.9" rx="2.7" ry="7.0" transform="rotate(-5.5 780.3 443.9)" fill="rgb(153,227,255)" class="p"/>
<ellipse cx="567.3" cy="373.0" rx="3.7" ry="6.4" transform="rotate(-28.2 567.3 373.0)" fill="rgb(153,178,255)" class="p"/>
<ellipse cx="855.2" cy="466.6" rx="4.5" ry="11.8" transform="rotate(-8.5 855.2 466.6)" fill="rgb(153,211,255)" class="p"/>
<ellipse cx="790.5" cy="293.3" rx="5.7" ry="10.4" transform="rotate(26.2 790.5 293.3)" fill="rgb(153,204,255)" class="p"/>
<ellipse cx="686.8" cy="602.9" rx="5.3" ry="14.4" transform="rotate(4.5 686.8 602.9)" fill="rgb(153,202,255)" class="p"/>
<ellipse cx="671.0" cy="776.7" rx="4.4" ry="14.4" transform="rotate(3.7 671.0 776.7)" fill="rgb(153,207,255)" class="p"/>
<ellipse cx="657.2" cy="462.6" rx="5.2" ry="6.9" transform="rotate(-19.6 657.2 462.6)" fill="rgb(153,234,255)" class="p"/>
<ellipse cx="822.7" cy="575.7" rx="5.9" ry="15.4" transform="rotate(-7.7 822.7 575.7)" fill="rgb(153,229,255)" class="p"/>
<ellipse cx="584.9" cy="469.0" rx="4.1" ry="6.3" transform="rotate(-55.6 584.9 469.0)" fill="rgb(153,218,255)" class="p"/>
<ellipse cx="832.3" cy="592.3" rx="5.1" ry="15.8" transform="rotate(-5.1 832.3 592.3)" fill="rgb(153,219,255)" class="p"/>
<ellipse cx="549.8" cy="273.5" rx="3.7" ry="5.8" transform="rotate(-54.6 549.8 273.5)" fill="rgb(153,208,255)" class="p"/>
<ellipse cx="769.2" cy="603.7" rx="5.4" ry="17.2" transform="rotate(-2.8 769.2 603.7)" fill="rgb(153,207,255)" class="p"/>
<ellipse cx="636.9" cy="416.5" rx="3.2" ry="7.3" transform="rotate(-5.4 636.9 416.5)" fill="rgb(153,220,255)" class="p"/>
<ellipse cx="617.5" cy="495.8" rx="3.7" ry="9.4" transform="rotate(-9.2 617.5 495.8)" fill="rgb(153,185,255)" class="p"/>
<ellipse cx="702.5" cy="403.9" rx="4.6" ry="8.7" transform="rotate(-4.5 702.5 403.9)" fill="rgb(153,207,255)" class="p"/>
<ellipse cx="623.8" cy="552.7" rx="3.6" ry="10.0" transform="rotate(-8.8 623.8 552.7)" fill="rgb(153,195,255)" class="p"/>
<ellipse cx="657.6" cy="375.8" rx="3.9" ry="8.2" transform="rotate(-2.0 657.6 375.8)" fill="rgb(153,212,255)" class="p"/>
<ellipse cx="668.5" cy="763.5" rx="2.7" ry="9.0" transform="rotate(-0.0 668.5 763.5)" fill="rgb(153,208,255)" class="p"/>
<ellipse cx="623.2" cy="503.9" rx="4.4" ry="9.2" transform="rotate(-10.3 623.2 503.9)" fill="rgb(153,234,255)" class="p"/>
<ellipse cx="679.4" cy="580.1" rx="4.8" ry="13.3" transform="rotate(2.4 679.4 580.1)" fill="rgb(153,191,255)" class="p"/>
<ellipse cx="672.4" cy="771.3" rx="3.0" ry="9.6" transform="rotate(4.8 672.4 771.3)" fill="rgb(153,192,255)" class="p"/>
<ellipse cx="711.1" cy="466.4" rx="5.4" ry="14.6" transform="rotate(6.8 711.1 466.4)" fill="rgb(153,212,255)" class="p"/>
<ellipse cx="628.5" cy="429.4" rx="4.0" ry="7.6" transform="rotate(-9.3 628.5 429.4)" fill="rgb(153,188,255)" class="p"/>
<ellipse cx="557.4" cy="717.7" rx="4.8" ry="17.0" transform="rotate(2.4 557.4 717.7)" fill="rgb(153,189,255)" class="p"/>
<ellipse cx="512.3" cy="784.4" rx="3.5" ry="12.3" transform="rotate(3.7 512.3 784.4)" fill="rgb(153,187,255)" class="p"/>
<ellipse cx="674.3" cy="660.7" rx="3.0" ry="8.6" transform="rotate(1.8 674.3 660.7)" fill="rgb(153,208,255)" class="p"/>
<ellipse cx="669.8" cy="745.4" rx="3.0" ry="10.0" transform="rotate(0.9 669.8 745.4)" fill="rgb(153,227,255)" class="p"/>
<ellipse cx="647.9" cy="421.8" rx="5.8" ry="12.2" transform="rotate(-4.0 647.9 421.8)" fill="rgb(153,189,255)" class="p"/>
<ellipse cx="661.1" cy="434.0" rx="5.0" ry="11.3" transform="rotate(-1.3 661.1 434.0)" fill="rgb(153,208,255)" class="p"/>
<ellipse cx="672.9" cy="349.6" rx="3.7" ry="5.4" transform="rotate(2.7 672.9 349.6)" fill="rgb(153,205,255)" class="p"/>
<ellipse cx="656.0" cy="298.4" rx="3.9" ry="6.4" transform="rotate(2.4 656.0 298.4)" fill="rgb(153,182,255)" class="p"/>
<ellipse cx="710.7" cy="553.6" rx="3.6" ry="10.0" transform="rotate(8.5 710.7 553.6)" fill="rgb(153,203,255)" class="p"/>
<ellipse cx="727.0" cy="367.6" rx="2.7" ry="4.6" transform="rotate(17.3 727.0 367.6)" fill="rgb(153,212,255)" class="p"/>
<ellipse cx="659.2" cy="469.9" rx="4.6" ry="7.5" transform="rotate(2.5 659.2 469.9)" fill="rgb(153,212,255)" class="p"/>
<ellipse cx="615.6" cy="683.0" rx="2.8" ry="8.5" transform="rotate(1.9 615.6 683.0)" fill="rgb(153,225,255)" class="p"/>
<ellipse cx="673.7" cy="657.3" rx="3.7" ry="11.8" transform="rotate(1.6 673.7 657.3)" fill="rgb(153,198,255)" class="p"/>
<ellipse cx="612.6" cy="445.9" rx="3.6" ry="5.3" transform="rotate(32.0 612.6 445.9)" fill="rgb(153,168,255)" class="p"/>
<ellipse cx="659.2" cy="400.9" rx="5.3" ry="13.3" transform="rotate(-1.4 659.2 400.9)" fill="rgb(153,208,255)" class="p"/>
<ellipse cx="589.9" cy="407.4" rx="3.3" ry="6.7" transform="rotate(-15.4 589.9 407.4)" fill="rgb(153,210,255)" class="p"/>
<ellipse cx="664.3" cy="355.4" rx="4.3" ry="9.4" transform="rotate(0.3 664.3 355.4)" fill="rgb(153,214,255)" class="p"/>
<ellipse cx="832.4" cy="755.4" rx="5.8" ry="19.6" transform="rotate(-4.2 832.4 755.4)" fill="rgb(153,212,255)" class="p"/>
<ellipse cx="660.0" cy="685.7" rx="3.2" ry="10.9" transform="rotate(-3.0 660.0 685.7)" fill="rgb(153,180,255)" class="p"/>
<ellipse cx="675.0" cy="436.7" rx="3.7" ry="7.0" transform="rotate(-0.9 675.0 436.7)" fill="rgb(153,202,255)" class="p"/>
<ellipse cx="686.8" cy="594.5" rx="3.3" ry="9.7" transform="rotate(4.1 686.8 594.5)" fill="rgb(153,194,255)" class="p"/>
<ellipse cx="648.4" cy="600.5" rx="5.8" ry="15.8" transform="rotate(0.9 648.4 600.5)" fill="rgb(153,234,255)" class="p"/>
<ellipse cx="679.7" cy="693.2" rx="3.0" ry="9.9" transform="rotate(-0.3 679.7 693.2)" fill="rgb(153,234,255)" class="p"/>
<ellipse cx="712.3" cy="455.7" rx="3.1" ry="5.7" transform="rotate(-6.8 712.3 455.7)" fill="rgb(153,208,255)" class="p"/>
<ellipse cx="799.8" cy="737.5" rx="3.1" ry="9.6" transform="rotate(-4.5 799.8 737.5)" fill="rgb(153,207,255)" class="p"/>
<ellipse cx="436.1" cy="393.9" rx="5.9" ry="14.9" transform="rotate(11.7 436.1 393.9)" fill="rgb(153,213,255)" class="p"/>
<ellipse cx="720.3" cy="346.7" rx="5.7" ry="12.4" transform="rotate(8.3 720.3 346.7)" fill="rgb(153,181,255)" class="p"/>
<ellipse cx="671.7" cy="601.6" rx="3.1" ry="8.5" transform="rotate(-0.1 671.7 601.6)" fill="rgb(153,194,255)" class="p"/>
<ellipse cx="563.2" cy="441.2" rx="5.3" ry="14.2" transform="rotate(4.5 563.2 441.2)" fill="rgb(153,187,255)" class="p"/>
<ellipse cx="799.2" cy="498.1" rx="3.9" ry="9.8" transform="rotate(-7.2 799.2 498.1)" fill="rgb(153,199,255)" class="p"/>
<ellipse cx="556.9" cy="517.5" rx="4.6" ry="11.6" transform="rotate(6.1 556.9 517.5)" fill="rgb(153,195,255)" class="p"/>
<ellipse cx="669.5" cy="756.3" rx="5.4" ry="19.1" transform="rotate(0.9 669.5 756.3)" fill="rgb(153,222,255)" class="p"/>
<ellipse cx="670.5" cy="450.6" rx="4.5" ry="11.5" transform="rotate(-0.1 670.5 450.6)" fill="rgb(153,209,255)" class="p"/>
<ellipse cx="754.6" cy="434.3" rx="5.8" ry="8.6" transform="rotate(-56.7 754.6 434.3)" fill="rgb(153,233,255)" class="p"/>
<ellipse cx="686.5" cy="637.4" rx="4.9" ry="16.6" transform="rotate(4.7 686.5 637.4)" fill="rgb(153,193,255)" class="p"/>
<ellipse cx="683.4" cy="535.7" rx="4.6" ry="11.3" transform="rotate(3.1 683.4 535.7)" fill="rgb(153,220,255)" class="p"/>
<ellipse cx="686.0" cy="389.2" rx="4.6" ry="11.4" transform="rotate(2.6 686.0 389.2)" fill="rgb(153,224,255)" class="p"/>
<ellipse cx="661.7" cy="318.0" rx="5.8" ry="9.4" transform="rotate(1.5 661.7 318.0)" fill="rgb(153,193,255)" class="p"/>
<ellipse cx="668.6" cy="799.1" rx="4.4" ry="16.3" transform="rotate(1.1 668.6 799.1)" fill="rgb(153,168,255)" class="p"/>
<ellipse cx="672.4" cy="633.9" rx="4.9" ry="14.2" transform="rotate(1.1 672.4 633.9)" fill="rgb(153,210,255)" class="p"/>
<ellipse cx="670.1" cy="732.0" rx="2.9" ry="9.0" transform="rotate(1.0 670.1 732.0)" fill="rgb(153,231,255)" class="p"/>
<ellipse cx="703.0" cy="546.6" rx="4.8" ry="11.2" transform="rotate(7.8 703.0 546.6)" fill="rgb(153,231,255)" class="p"/>
<ellipse cx="661.6" cy="639.5" rx="3.2" ry="9.1" transform="rotate(-1.9 661.6 639.5)" fill="rgb(153,222,255)" class="p"/>
<ellipse cx="671.8" cy="685.9" rx="5.6" ry="16.2" transform="rotate(1.3 671.8 685.9)" fill="rgb(153,183,255)" class="p"/>
<ellipse cx="533.7" cy="416.0" rx="4.2" ry="9.9" transform="rotate(8.6 533.7 416.0)" fill="rgb(153,229,255)" class="p"/>
<ellipse cx="572.3" cy="452.3" rx="5.9" ry="12.1" transform="rotate(9.9 572.3 452.3)" fill="rgb(153,168,255)" class="p"/>
<ellipse cx="663.6" cy="405.1" rx="3.6" ry="5.4" transform="rotate(-2.6 663.6 405.1)" fill="rgb(153,194,255)" class="p"/>
<ellipse cx="664.5" cy="553.2" rx="4.9" ry="14.8" transform="rotate(0.1 664.5 553.2)" fill="rgb(153,216,255)" class="p"/>
<ellipse cx="591.6" cy="371.6" rx="4.3" ry="9.0" transform="rotate(-13.7 591.6 371.6)" fill="rgb(153,209,255)" class="p"/>
<ellipse cx="832.5" cy="579.8" rx="4.6" ry="13.9" transform="rotate(-5.3 832.5 579.8)" fill="rgb(153,185,255)" class="p"/>
<ellipse cx="684.6" cy="626.6" rx="2.8" ry="8.8" transform="rotate(-0.5 684.6 626.6)" fill="rgb(153,200,255)" class="p"/>
<ellipse cx="585.2" cy="664.9" rx="5.5" ry="16.3" transform="rotate(2.9 585.2 664.9)" fill="rgb(153,175,255)" class="p"/>
<ellipse cx="594.2" cy="390.1" rx="5.6" ry="12.0" transform="rotate(-13.2 594.2 390.1)" fill="rgb(153,196,255)" class="p"/>
<ellipse cx="541.4" cy="508.9" rx="3.9" ry="8.4" transform="rotate(11.5 541.4 508.9)" fill="rgb(153,195,255)" class="p"/>
<ellipse cx="647.3" cy="428.8" rx="5.8" ry="11.1" transform="rotate(-4.9 647.3 428.8)" fill="rgb(153,183,255)" class="p"/>
<ellipse cx="900.7" cy="705.4" rx="2.9" ry="9.9" transform="rotate(-5.6 900.7 705.4)" fill="rgb(153,213,255)" class="p"/>
<ellipse cx="856.6" cy="442.9" rx="3.9" ry="10.5" transform="rotate(-7.9 856.6 442.9)" fill="rgb(153,168,255)" class="p"/>
<ellipse cx="756.6" cy="568.0" rx="3.2" ry="9.0" transform="rotate(-3.6 756.6 568.0)" fill="rgb(153,212,255)" class="p"/>
<ellipse cx="609.4" cy="426.8" rx="3.8" ry="9.6" transform="rotate(2.9 609.4 426.8)" fill="rgb(153,194,255)" class="p"/>
<ellipse cx="672.6" cy="433.7" rx="4.8" ry="6.3" transform="rotate(-8.1 672.6 433.7)" fill="rgb(153,210,255)" class="p"/>
<ellipse cx="672.9" cy="313.9" rx="4.3" ry="6.8" transform="rotate(-1.2 672.9 313.9)" fill="rgb(153,210,255)" class="p"/>
<ellipse cx="924.1" cy="709.9" rx="3.2" ry="11.3" transform="rotate(-5.5 924.1 709.9)" fill="rgb(153,211,255)" class="p"/>
<ellipse cx="661.6" cy="696.7" rx="4.1" ry="14.2" transform="rotate(-2.7 661.6 696.7)" fill="rgb(153,204,255)" class="p"/>
<ellipse cx="798.4" cy="314.2" rx="3.3" ry="5.3" transform="rotate(-62.6 798.4 314.2)" fill="rgb(153,184,255)" class="p"/>
<ellipse cx="506.5" cy="518.1" rx="4.9" ry="11.9" transform="rotate(10.1 506.5 518.1)" fill="rgb(153,177,255)" class="p"/>
<ellipse cx="614.0" cy="370.1" rx="4.9" ry="7.8" transform="rotate(15.4 614.0 370.1)" fill="rgb(153,234,255)" class="p"/>
<ellipse cx="686.1" cy="651.9" rx="5.1" ry="16.0" transform="rotate(-0.5 686.1 651.9)" fill="rgb(153,193,255)" class="p"/>
<ellipse cx="644.6" cy="562.1" rx="4.9" ry="14.9" transform="rotate(-4.7 644.6 562.1)" fill="rgb(153,188,255)" class="p"/>
<ellipse cx="663.3" cy="640.9" rx="4.8" ry="13.2" transform="rotate(-1.5 663.3 640.9)" fill="rgb(153,230,255)" class="p"/>
<ellipse cx="613.7" cy="358.3" rx="3.4" ry="4.8" transform="rotate(-46.8 613.7 358.3)" fill="rgb(153,220,255)" class="p"/>
<ellipse cx="675.3" cy="582.0" rx="4.8" ry="12.1" transform="rotate(1.6 675.3 582.0)" fill="rgb(153,192,255)" class="p"/>
<ellipse cx="613.4" cy="371.5" rx="3.1" ry="4.8" transform="rotate(17.9 613.4 371.5)" fill="rgb(153,220,255)" class="p"/>
<ellipse cx="733.3" cy="345.6" rx="3.4" ry="6.6" transform="rotate(12.8 733.3 345.6)" fill="rgb(153,187,255)" class="p"/>
<ellipse cx="666.0" cy="321.4" rx="4.4" ry="9.1" transform="rotate(0.2 666.0 321.4)" fill="rgb(153,208,255)" class="p"/>
<ellipse cx="691.1" cy="328.7" rx="2.8" ry="5.3" transform="rotate(4.7 691.1 328.7)" fill="rgb(153,193,255)" class="p"/>
<ellipse cx="660.9" cy="527.4" rx="5.8" ry="17.3" transform="rotate(0.2 660.9 527.4)" fill="rgb(153,186,255)" class="p"/>
<ellipse cx="685.3" cy="516.5" rx="3.9" ry="8.5" transform="rotate(-1.4 685.3 516.5)" fill="rgb(153,218,255)" class="p"/>
<ellipse cx="658.0" cy="512.1" rx="4.7" ry="10.5" transform="rotate(-2.3 658.0 512.1)" fill="rgb(153,192,255)" class="p"/>
<ellipse cx="428.5" cy="770.2" rx="2.8" ry="9.6" transform="rotate(5.9 428.5 770.2)" fill="rgb(153,200,255)" class="p"/>
<ellipse cx="717.6" cy="773.3" rx="4.4" ry="14.0" transform="rotate(-1.6 717.6 773.3)" fill="rgb(153,234,255)" class="p"/>
<ellipse cx="677.7" cy="634.6" rx="3.3" ry="10.7" transform="rotate(2.4 677.7 634.6)" fill="rgb(153,194,255)" class="p"/>
<ellipse cx="886.4" cy="700.5" rx="5.9" ry="20.2" transform="rotate(-5.2 886.4 700.5)" fill="rgb(153,219,255)" class="p"/>
<ellipse cx="656.8" cy="739.8" rx="4.0" ry="12.8" transform="rotate(0.4 656.8 739.8)" fill="rgb(153,198,255)" class="p"/>
<ellipse cx="479.9" cy="736.8" rx="2.8" ry="8.7" transform="rotate(6.1 479.9 736.8)" fill="rgb(153,196,255)" class="p"/>
<ellipse cx="646.3" cy="609.8" rx="5.2" ry="16.5" transform="rotate(-5.2 646.3 609.8)" fill="rgb(153,205,255)" class="p"/>
<ellipse cx="791.3" cy="375.9" rx="4.4" ry="7.0" transform="rotate(-39.2 791.3 375.9)" fill="rgb(153,184,255)" class="p"/>
<ellipse cx="856.8" cy="726.0" rx="5.2" ry="16.8" transform="rotate(-5.5 856.8 726.0)" fill="rgb(153,199,255)" class="p"/>
<ellipse cx="674.5" cy="282.4" rx="5.6" ry="9.2" transform="rotate(1.7 674.5 282.4)" fill="rgb(153,211,255)" class="p"/>
<ellipse cx="849.3" cy="636.5" rx="4.0" ry="12.9" transform="rotate(-5.0 849.3 636.5)" fill="rgb(153,192,255)" class="p"/>
<ellipse cx="667.3" cy="734.0" rx="2.8" ry="9.0" transform="rotate(0.0 667.3 734.0)" fill="rgb(153,210,255)" class="p"/>
<ellipse cx="622.7" cy="466.2" rx="2.9" ry="4.6" transform="rotate(-19.6 622.7 466.2)" fill="rgb(153,206,255)" class="p"/>
<ellipse cx="670.3" cy="341.2" rx="3.3" ry="6.3" transform="rotate(-0.2 670.3 341.2)" fill="rgb(153,213,255)" class="p"/>
<ellipse cx="698.5" cy="515.6" rx="5.7" ry="13.5" transform="rotate(-1.9 698.5 515.6)" fill="rgb(153,200,255)" class="p"/>
<ellipse cx="702.1" cy="501.6" rx="2.9" ry="6.9" transform="rotate(6.6 702.1 501.6)" fill="rgb(153,191,255)" class="p"/>
<ellipse cx="702.4" cy="361.0" rx="3.3" ry="4.4" transform="rotate(45.1 702.4 361.0)" fill="rgb(153,209,255)" class="p"/>
<ellipse cx="628.1" cy="490.4" rx="5.2" ry="11.5" transform="rotate(-8.3 628.1 490.4)" fill="rgb(153,213,255)" class="p"/>
<ellipse cx="680.8" cy="621.6" rx="4.3" ry="13.6" transform="rotate(3.1 680.8 621.6)" fill="rgb(153,204,255)" class="p"/>
<ellipse cx="647.8" cy="451.6" rx="5.2" ry="11.4" transform="rotate(-4.0 647.8 451.6)" fill="rgb(153,202,255)" class="p"/>
<ellipse cx="580.4" cy="562.0" rx="5.2" ry="16.0" transform="rotate(2.6 580.4 562.0)" fill="rgb(153,231,255)" class="p"/>
<ellipse cx="612.5" cy="620.3" rx="4.3" ry="12.2" transform="rotate(2.2 612.5 620.3)" fill="rgb(153,174,255)" class="p"/>
<ellipse cx="597.6" cy="429.6" rx="3.4" ry="7.0" transform="rotate(6.8 597.6 429.6)" fill="rgb(153,208,255)" class="p"/>
<ellipse cx="667.7" cy="543.2" rx="4.9" ry="13.4" transform="rotate(0.0 667.7 543.2)" fill="rgb(153,203,255)" class="p"/>
<ellipse cx="814.9" cy="469.7" rx="5.9" ry="11.7" transform="rotate(-17.0 814.9 469.7)" fill="rgb(153,177,255)" class="p"/>
<ellipse cx="598.9" cy="358.4" rx="3.6" ry="5.2" transform="rotate(42.0 598.9 358.4)" fill="rgb(153,191,255)" class="p"/>
<ellipse cx="675.7" cy="737.4" rx="3.6" ry="11.4" transform="rotate(4.5 675.7 737.4)" fill="rgb(153,219,255)" class="p"/>
<ellipse cx="643.2" cy="437.5" rx="3.3" ry="4.7" transform="rotate(-11.8 643.2 437.5)" fill="rgb(153,204,255)" class="p"/>
<ellipse cx="616.8" cy="399.3" rx="4.5" ry="8.5" transform="rotate(-4.6 616.8 399.3)" fill="rgb(153,185,255)" class="p"/>
<ellipse cx="644.2" cy="487.3" rx="5.7" ry="8.5" transform="rotate(9.2 644.2 487.3)" fill="rgb(153,183,255)" class="p"/>
<ellipse cx="707.4" cy="388.4" rx="5.5" ry="8.1" transform="rotate(-0.8 707.4 388.4)" fill="rgb(153,224,255)" class="p"/>
<ellipse cx="676.4" cy="526.5" rx="4.0" ry="5.8" transform="rotate(1.2 676.4 526.5)" fill="rgb(153,216,255)" class="p"/>
<ellipse cx="725.1" cy="464.9" rx="4.2" ry="7.9" transform="rotate(-14.3 725.1 464.9)" fill="rgb(153,168,255)" class="p"/>
<ellipse cx="648.5" cy="427.6" rx="5.7" ry="7.8" transform="rotate(-17.7 648.5 427.6)" fill="rgb(153,210,255)" class="p"/>
<ellipse cx="661.8" cy="474.0" rx="2.8" ry="4.4" transform="rotate(-5.2 661.8 474.0)" fill="rgb(153,207,255)" class="p"/>
<ellipse cx="651.1" cy="448.7" rx="3.7" ry="4.7" transform="rotate(11.0 651.1 448.7)" fill="rgb(153,193,255)" class="p"/>
<ellipse cx="693.1" cy="360.1" rx="2.9" ry="4.1" transform="rotate(14.8 693.1 360.1)" fill="rgb(153,203,255)" class="p"/>
<ellipse cx="672.2" cy="515.7" rx="5.0" ry="9.4" transform="rotate(18.0 672.2 515.7)" fill="rgb(153,228,255)" class="p"/>
<ellipse cx="606.8" cy="518.1" rx="4.7" ry="7.2" transform="rotate(-2.6 606.8 518.1)" fill="rgb(153,212,255)" class="p"/>
<ellipse cx="681.7" cy="426.9" rx="3.2" ry="4.5" transform="rotate(-6.3 681.7 426.9)" fill="rgb(153,175,255)" class="p"/>
<ellipse cx="694.9" cy="570.4" rx="3.1" ry="5.6" transform="rotate(7.0 694.9 570.4)" fill="rgb(153,206,255)" class="p"/>
<ellipse cx="654.2" cy="383.1" rx="2.9" ry="4.0" transform="rotate(11.7 654.2 383.1)" fill="rgb(153,177,255)" class="p"/>
<ellipse cx="630.2" cy="423.6" rx="3.9" ry="5.2" transform="rotate(-22.7 630.2 423.6)" fill="rgb(153,233,255)" class="p"/>
<ellipse cx="660.3" cy="519.3" rx="4.2" ry="6.1" transform="rotate(-15.3 660.3 519.3)" fill="rgb(153,189,255)" class="p"/>
<ellipse cx="633.7" cy="347.3" rx="5.1" ry="7.1" transform="rotate(-20.4 633.7 347.3)" fill="rgb(153,213,255)" class="p"/>
<ellipse cx="668.6" cy="410.0" rx="5.2" ry="6.8" transform="rotate(11.8 668.6 410.0)" fill="rgb(153,168,255)" class="p"/>
<ellipse cx="666.4" cy="389.5" rx="5.7" ry="10.5" transform="rotate(-14.6 666.4 389.5)" fill="rgb(153,209,255)" class="p"/>
<ellipse cx="700.5" cy="479.7" rx="5.6" ry="8.6" transform="rotate(-10.5 700.5 479.7)" fill="rgb(153,190,255)" class="p"/>
<ellipse cx="654.6" cy="372.0" rx="4.7" ry="9.0" transform="rotate(-12.7 654.6 372.0)" fill="rgb(153,194,255)" class="p"/>
<ellipse cx="598.6" cy="374.6" rx="3.9" ry="6.6" transform="rotate(-36.5 598.6 374.6)" fill="rgb(153,188,255)" class="p"/>
<ellipse cx="692.2" cy="377.4" rx="3.3" ry="5.5" transform="rotate(-14.0 692.2 377.4)" fill="rgb(153,187,255)" class="p"/>
<ellipse cx="690.7" cy="492.3" rx="5.5" ry="8.2" transform="rotate(5.8 690.7 492.3)" fill="rgb(153,196,255)" class="p"/>
<ellipse cx="666.2" cy="460.7" rx="3.7" ry="6.4" transform="rotate(-7.5 666.2 460.7)" fill="rgb(153,203,255)" class="p"/>
<ellipse cx="679.3" cy="523.2" rx="3.4" ry="6.0" transform="rotate(-12.3 679.3 523.2)" fill="rgb(153,202,255)" class="p"/>
<ellipse cx="605.8" cy="476.2" rx="4.8" ry="8.5" transform="rotate(-14.5 605.8 476.2)" fill="rgb(153,205,255)" class="p"/>
<ellipse cx="690.0" cy="456.5" rx="3.7" ry="6.1" transform="rotate(-0.8 690.0 456.5)" fill="rgb(153,221,255)" class="p"/>
<ellipse cx="628.6" cy="404.3" rx="5.8" ry="9.6" transform="rotate(15.2 628.6 404.3)" fill="rgb(153,195,255)" class="p"/>
<ellipse cx="750.0" cy="465.5" rx="4.0" ry="5.5" transform="rotate(10.0 750.0 465.5)" fill="rgb(153,194,255)" class="p"/>
<ellipse cx="702.5" cy="412.6" rx="5.5" ry="9.5" transform="rotate(18.2 702.5 412.6)" fill="rgb(153,168,255)" class="p"/>
<ellipse cx="683.6" cy="419.3" rx="3.6" ry="5.9" transform="rotate(-6.0 683.6 419.3)" fill="rgb(153,217,255)" class="p"/>
<ellipse cx="572.3" cy="443.6" rx="5.6" ry="8.9" transform="rotate(-5.9 572.3 443.6)" fill="rgb(153,207,255)" class="p"/>
<ellipse cx="671.8" cy="394.0" rx="2.8" ry="4.1" transform="rotate(0.7 671.8 394.0)" fill="rgb(153,187,255)" class="p"/>
<ellipse cx="662.4" cy="537.2" rx="4.5" ry="7.5" transform="rotate(-6.8 662.4 537.2)" fill="rgb(153,187,255)" class="p"/>
<ellipse cx="699.3" cy="391.4" rx="2.9" ry="3.7" transform="rotate(10.5 699.3 391.4)" fill="rgb(153,196,255)" class="p"/>
<ellipse cx="669.4" cy="495.2" rx="4.2" ry="7.2" transform="rotate(10.8 669.4 495.2)" fill="rgb(153,175,255)" class="p"/>
<ellipse cx="689.4" cy="435.5" rx="3.6" ry="5.4" transform="rotate(-0.7 689.4 435.5)" fill="rgb(153,192,255)" class="p"/>
<ellipse cx="601.9" cy="493.7" rx="4.9" ry="8.8" transform="rotate(1.9 601.9 493.7)" fill="rgb(153,227,255)" class="p"/>
<ellipse cx="655.0" cy="570.2" rx="3.2" ry="4.2" transform="rotate(-18.7 655.0 570.2)" fill="rgb(153,205,255)" class="p"/>
<ellipse cx="715.0" cy="355.5" rx="5.1" ry="8.4" transform="rotate(-11.6 715.0 355.5)" fill="rgb(153,205,255)" class="p"/>
<ellipse cx="660.4" cy="443.5" rx="3.8" ry="6.4" transform="rotate(6.1 660.4 443.5)" fill="rgb(153,208,255)" class="p"/>
<ellipse cx="709.7" cy="415.1" rx="5.9" ry="10.3" transform="rotate(5.2 709.7 415.1)" fill="rgb(153,221,255)" class="p"/>
<ellipse cx="659.9" cy="484.6" rx="5.3" ry="7.5" transform="rotate(6.5 659.9 484.6)" fill="rgb(153,174,255)" class="p"/>
<ellipse cx="681.7" cy="477.4" rx="5.4" ry="9.9" transform="rotate(-16.2 681.7 477.4)" fill="rgb(153,220,255)" class="p"/>
<ellipse cx="640.7" cy="423.1" rx="2.9" ry="4.4" transform="rotate(3.8 640.7 423.1)" fill="rgb(153,200,255)" class="p"/>
<ellipse cx="682.6" cy="506.6" rx="3.1" ry="4.8" transform="rotate(6.4 682.6 506.6)" fill="rgb(153,218,255)" class="p"/>
<ellipse cx="637.0" cy="492.5" rx="3.8" ry="5.6" transform="rotate(-6.1 637.0 492.5)" fill="rgb(153,206,255)" class="p"/>
<ellipse cx="693.1" cy="535.5" rx="4.5" ry="7.8" transform="rotate(5.4 693.1 535.5)" fill="rgb(153,234,255)" class="p"/>
<ellipse cx="657.3" cy="401.6" rx="4.4" ry="8.2" transform="rotate(13.3 657.3 401.6)" fill="rgb(153,207,255)" class="p"/>
<ellipse cx="700.2" cy="462.3" rx="4.8" ry="6.6" transform="rotate(-1.9 700.2 462.3)" fill="rgb(153,186,255)" class="p"/>
<ellipse cx="658.3" cy="465.9" rx="3.4" ry="6.3" transform="rotate(8.1 658.3 465.9)" fill="rgb(153,210,255)" class="p"/>
<ellipse cx="703.6" cy="463.2" rx="4.6" ry="7.1" transform="rotate(4.0 703.6 463.2)" fill="rgb(153,229,255)" class="p"/>
<ellipse cx="686.3" cy="463.5" rx="4.7" ry="6.9" transform="rotate(21.6 686.3 463.5)" fill="rgb(153,230,255)" class="p"/>
<ellipse cx="714.1" cy="422.0" rx="3.5" ry="5.7" transform="rotate(27.5 714.1 422.0)" fill="rgb(153,213,255)" class="p"/>
<ellipse cx="640.1" cy="444.5" rx="5.3" ry="7.2" transform="rotate(-12.0 640.1 444.5)" fill="rgb(153,202,255)" class="p"/>
<ellipse cx="687.6" cy="498.8" rx="4.9" ry="8.3" transform="rotate(1.3 687.6 498.8)" fill="rgb(153,168,255)" class="p"/>
<ellipse cx="636.1" cy="471.8" rx="4.4" ry="7.6" transform="rotate(3.6 636.1 471.8)" fill="rgb(153,184,255)" class="p"/>
<ellipse cx="699.8" cy="440.2" rx="5.2" ry="7.7" transform="rotate(23.0 699.8 440.2)" fill="rgb(153,215,255)" class="p"/>
<ellipse cx="681.1" cy="457.0" rx="2.9" ry="4.0" transform="rotate(4.4 681.1 457.0)" fill="rgb(153,218,255)" class="p"/>
<ellipse cx="656.6" cy="325.8" rx="3.6" ry="5.8" transform="rotate(17.3 656.6 325.8)" fill="rgb(153,195,255)" class="p"/>
<ellipse cx="700.3" cy="424.1" rx="3.2" ry="4.6" transform="rotate(16.5 700.3 424.1)" fill="rgb(153,202,255)" class="p"/>
<ellipse cx="678.6" cy="465.0" rx="3.5" ry="5.8" transform="rotate(-9.0 678.6 465.0)" fill="rgb(153,212,255)" class="p"/>
<ellipse cx="643.1" cy="419.6" rx="4.0" ry="6.4" transform="rotate(-5.1 643.1 419.6)" fill="rgb(153,204,255)" class="p"/>
<ellipse cx="683.1" cy="422.3" rx="4.8" ry="8.4" transform="rotate(1.7 683.1 422.3)" fill="rgb(153,204,255)" class="p"/>
<ellipse cx="705.6" cy="418.2" rx="5.0" ry="9.5" transform="rotate(13.1 705.6 418.2)" fill="rgb(153,191,255)" class="p"/>
<ellipse cx="724.4" cy="531.7" rx="5.7" ry="8.1" transform="rotate(-15.4 724.4 531.7)" fill="rgb(153,196,255)" class="p"/>
<ellipse cx="663.5" cy="416.0" rx="5.8" ry="8.1" transform="rotate(4.4 663.5 416.0)" fill="rgb(153,200,255)" class="p"/>
<ellipse cx="714.1" cy="518.4" rx="3.5" ry="5.5" transform="rotate(5.5 714.1 518.4)" fill="rgb(153,200,255)" class="p"/>
<ellipse cx="667.8" cy="484.1" rx="4.0" ry="7.0" transform="rotate(19.9 667.8 484.1)" fill="rgb(153,197,255)" class="p"/>
<ellipse cx="727.0" cy="513.8" rx="4.1" ry="7.7" transform="rotate(42.4 727.0 513.8)" fill="rgb(153,178,255)" class="p"/>
<ellipse cx="623.6" cy="505.3" rx="5.6" ry="7.4" transform="rotate(15.5 623.6 505.3)" fill="rgb(153,196,255)" class="p"/>
<ellipse cx="763.7" cy="403.7" rx="4.2" ry="6.7" transform="rotate(9.8 763.7 403.7)" fill="rgb(153,211,255)" class="p"/>
<ellipse cx="727.1" cy="450.5" rx="4.8" ry="8.8" transform="rotate(29.4 727.1 450.5)" fill="rgb(153,217,255)" class="p"/>
<ellipse cx="635.4" cy="525.8" rx="2.8" ry="5.0" transform="rotate(14.0 635.4 525.8)" fill="rgb(153,209,255)" class="p"/>
<ellipse cx="675.8" cy="460.5" rx="4.1" ry="7.8" transform="rotate(23.0 675.8 460.5)" fill="rgb(153,196,255)" class="p"/>
<ellipse cx="698.0" cy="543.1" rx="6.0" ry="10.3" transform="rotate(17.2 698.0 543.1)" fill="rgb(153,231,255)" class="p"/>
<ellipse cx="669.0" cy="519.1" rx="3.0" ry="4.4" transform="rotate(-1.5 669.0 519.1)" fill="rgb(153,190,255)" class="p"/>
<ellipse cx="695.4" cy="463.0" rx="3.6" ry="4.8" transform="rotate(-19.7 695.4 463.0)" fill="rgb(153,203,255)" class="p"/>
<ellipse cx="668.3" cy="400.6" rx="5.6" ry="9.3" transform="rotate(39.8 668.3 400.6)" fill="rgb(153,216,255)" class="p"/>
<ellipse cx="673.3" cy="510.8" rx="4.2" ry="6.7" transform="rotate(-9.5 673.3 510.8)" fill="rgb(153,190,255)" class="p"/>
<ellipse cx="692.8" cy="417.1" rx="3.1" ry="5.0" transform="rotate(-8.1 692.8 417.1)" fill="rgb(153,185,255)" class="p"/>
<ellipse cx="721.3" cy="427.5" rx="5.3" ry="8.6" transform="rotate(23.5 721.3 427.5)" fill="rgb(153,187,255)" class="p"/>
<ellipse cx="602.7" cy="397.5" rx="2.8" ry="3.6" transform="rotate(-5.6 602.7 397.5)" fill="rgb(153,196,255)" class="p"/>
<ellipse cx="704.6" cy="329.4" rx="5.3" ry="7.6" transform="rotate(16.6 704.6 329.4)" fill="rgb(153,225,255)" class="p"/>
<ellipse cx="661.1" cy="495.7" rx="4.5" ry="7.6" transform="rotate(2.3 661.1 495.7)" fill="rgb(153,211,255)" class="p"/>
<ellipse cx="755.0" cy="442.2" rx="3.7" ry="5.5" transform="rotate(13.7 755.0 442.2)" fill="rgb(153,228,255)" class="p"/>
<ellipse cx="668.5" cy="385.5" rx="3.9" ry="5.7" transform="rotate(2.8 668.5 385.5)" fill="rgb(153,219,255)" class="p"/>
<ellipse cx="692.6" cy="538.0" rx="4.7" ry="8.2" transform="rotate(-1.5 692.6 538.0)" fill="rgb(153,227,255)" class="p"/>
<ellipse cx="599.1" cy="494.1" rx="5.5" ry="8.8" transform="rotate(-5.1 599.1 494.1)" fill="rgb(153,228,255)" class="p"/>
<ellipse cx="655.1" cy="434.1" rx="2.9" ry="4.6" transform="rotate(-5.7 655.1 434.1)" fill="rgb(153,225,255)" class="p"/>
<ellipse cx="682.8" cy="491.9" rx="3.8" ry="7.2" transform="rotate(-16.4 682.8 491.9)" fill="rgb(153,193,255)" class="p"/>
<ellipse cx="649.2" cy="375.1" rx="3.8" ry="5.3" transform="rotate(4.2 649.2 375.1)" fill="rgb(153,210,255)" class="p"/>
<ellipse cx="706.7" cy="427.5" rx="5.6" ry="9.0" transform="rotate(16.3 706.7 427.5)" fill="rgb(153,186,255)" class="p"/>
<ellipse cx="699.9" cy="481.8" rx="5.7" ry="11.0" transform="rotate(6.8 699.9 481.8)" fill="rgb(153,200,255)" class="p"/>
<ellipse cx="641.7" cy="421.9" rx="3.5" ry="4.7" transform="rotate(-11.3 641.7 421.9)" fill="rgb(153,196,255)" class="p"/>
<ellipse cx="711.4" cy="485.0" rx="3.1" ry="5.4" transform="rotate(3.8 711.4 485.0)" fill="rgb(153,213,255)" class="p"/>
<ellipse cx="734.9" cy="476.5" rx="5.2" ry="9.9" transform="rotate(2.5 734.9 476.5)" fill="rgb(153,182,255)" class="p"/>
<ellipse cx="698.1" cy="412.2" rx="4.5" ry="6.5" transform="rotate(7.8 698.1 412.2)" fill="rgb(153,187,255)" class="p"/>
<ellipse cx="690.6" cy="507.0" rx="5.7" ry="7.9" transform="rotate(-9.2 690.6 507.0)" fill="rgb(153,191,255)" class="p"/>
<ellipse cx="643.1" cy="361.7" rx="6.0" ry="8.0" transform="rotate(-6.9 643.1 361.7)" fill="rgb(153,206,255)" class="p"/>
<ellipse cx="597.9" cy="341.8" rx="5.9" ry="11.0" transform="rotate(8.2 597.9 341.8)" fill="rgb(153,185,255)" class="p"/>
<ellipse cx="685.1" cy="463.2" rx="5.4" ry="9.5" transform="rotate(-3.7 685.1 463.2)" fill="rgb(153,221,255)" class="p"/>
<ellipse cx="620.1" cy="539.3" rx="4.4" ry="7.6" transform="rotate(-1.5 620.1 539.3)" fill="rgb(153,205,255)" class="p"/>
<ellipse cx="581.2" cy="407.9" rx="5.9" ry="11.0" transform="rotate(-12.1 581.2 407.9)" fill="rgb(153,189,255)" class="p"/>
<ellipse cx="666.5" cy="475.2" rx="2.9" ry="3.7" transform="rotate(11.8 666.5 475.2)" fill="rgb(153,204,255)" class="p"/>
<ellipse cx="614.9" cy="387.2" rx="5.2" ry="7.5" transform="rotate(15.0 614.9 387.2)" fill="rgb(153,182,255)" class="p"/>
<ellipse cx="664.3" cy="474.3" rx="3.8" ry="6.9" transform="rotate(-2.3 664.3 474.3)" fill="rgb(153,192,255)" class="p"/>
<ellipse cx="609.1" cy="414.4" rx="3.3" ry="4.7" transform="rotate(-16.2 609.1 414.4)" fill="rgb(153,213,255)" class="p"/>
<ellipse cx="706.2" cy="473.3" rx="2.7" ry="3.7" transform="rotate(1.1 706.2 473.3)" fill="rgb(153,231,255)" class="p"/>
<ellipse cx="679.9" cy="331.6" rx="5.6" ry="9.7" transform="rotate(2.8 679.9 331.6)" fill="rgb(153,225,255)" class="p"/>
<ellipse cx="674.6" cy="414.9" rx="4.0" ry="6.1" transform="rotate(-7.1 674.6 414.9)" fill="rgb(153,216,255)" class="p"/>
<ellipse cx="682.0" cy="430.1" rx="4.2" ry="6.1" transform="rotate(-12.9 682.0 430.1)" fill="rgb(153,217,255)" class="p"/>
<ellipse cx="665.2" cy="497.1" rx="4.6" ry="7.9" transform="rotate(3.3 665.2 497.1)" fill="rgb(153,221,255)" class="p"/>
<ellipse cx="655.5" cy="490.1" rx="5.9" ry="8.2" transform="rotate(11.0 655.5 490.1)" fill="rgb(153,224,255)" class="p"/>
<ellipse cx="747.3" cy="469.5" rx="4.5" ry="6.6" transform="rotate(12.5 747.3 469.5)" fill="rgb(153,205,255)" class="p"/>
<ellipse cx="679.1" cy="377.2" rx="3.5" ry="6.8" transform="rotate(8.6 679.1 377.2)" fill="rgb(153,211,255)" class="p"/>
<ellipse cx="573.3" cy="378.9" rx="3.8" ry="5.3" transform="rotate(-15.0 573.3 378.9)" fill="rgb(153,202,255)" class="p"/>
<ellipse cx="637.1" cy="452.5" rx="5.9" ry="9.2" transform="rotate(-4.4 637.1 452.5)" fill="rgb(153,168,255)" class="p"/>
<ellipse cx="584.6" cy="407.6" rx="4.1" ry="6.0" transform="rotate(-12.9 584.6 407.6)" fill="rgb(153,228,255)" class="p"/>
<ellipse cx="705.5" cy="399.4" rx="5.0" ry="6.7" transform="rotate(5.2 705.5 399.4)" fill="rgb(153,184,255)" class="p"/>
<ellipse cx="697.0" cy="377.0" rx="4.3" ry="7.1" transform="rotate(-0.7 697.0 377.0)" fill="rgb(153,179,255)" class="p"/>
<ellipse cx="678.1" cy="527.6" rx="5.9" ry="10.9" transform="rotate(2.7 678.1 527.6)" fill="rgb(153,195,255)" class="p"/>
<ellipse cx="623.6" cy="456.4" rx="5.6" ry="8.2" transform="rotate(-1.8 623.6 456.4)" fill="rgb(153,214,255)" class="p"/>
<ellipse cx="685.3" cy="481.2" rx="5.7" ry="8.8" transform="rotate(-3.4 685.3 481.2)" fill="rgb(153,175,255)" class="p"/>
<ellipse cx="683.6" cy="481.7" rx="4.7" ry="6.4" transform="rotate(-4.2 683.6 481.7)" fill="rgb(153,233,255)" class="p"/>
<ellipse cx="667.5" cy="405.1" rx="5.9" ry="11.2" transform="rotate(-3.5 667.5 405.1)" fill="rgb(153,204,255)" class="p"/>
<ellipse cx="680.3" cy="380.4" rx="3.4" ry="5.4" transform="rotate(1.8 680.3 380.4)" fill="rgb(153,223,255)" class="p"/>
<ellipse cx="583.2" cy="443.4" rx="3.9" ry="7.2" transform="rotate(-6.7 583.2 443.4)" fill="rgb(153,204,255)" class="p"/>
<ellipse cx="642.0" cy="449.3" rx="5.9" ry="10.6" transform="rotate(-6.0 642.0 449.3)" fill="rgb(153,215,255)" class="p"/>
<ellipse cx="651.5" cy="352.7" rx="3.9" ry="5.4" transform="rotate(-11.5 651.5 352.7)" fill="rgb(153,196,255)" class="p"/>
<ellipse cx="647.5" cy="378.7" rx="4.8" ry="6.1" transform="rotate(0.5 647.5 378.7)" fill="rgb(153,225,255)" class="p"/>
<ellipse cx="687.0" cy="444.8" rx="5.8" ry="11.0" transform="rotate(-24.5 687.0 444.8)" fill="rgb(153,194,255)" class="p"/>
<ellipse cx="712.8" cy="458.8" rx="3.9" ry="5.8" transform="rotate(15.1 712.8 458.8)" fill="rgb(153,202,255)" class="p"/>
<ellipse cx="708.8" cy="488.0" rx="4.7" ry="6.6" transform="rotate(28.9 708.8 488.0)" fill="rgb(153,189,255)" class="p"/>
<ellipse cx="649.4" cy="466.2" rx="4.3" ry="7.7" transform="rotate(-7.3 649.4 466.2)" fill="rgb(153,200,255)" class="p"/>
<ellipse cx="637.6" cy="426.3" rx="3.4" ry="4.9" transform="rotate(-16.2 637.6 426.3)" fill="rgb(153,215,255)" class="p"/>
<ellipse cx="683.6" cy="516.8" rx="5.5" ry="6.9" transform="rotate(8.1 683.6 516.8)" fill="rgb(153,197,255)" class="p"/>
<ellipse cx="659.8" cy="363.4" rx="3.3" ry="6.1" transform="rotate(-12.6 659.8 363.4)" fill="rgb(153,171,255)" class="p"/>
<ellipse cx="684.7" cy="457.0" rx="2.8" ry="5.4" transform="rotate(2.5 684.7 457.0)" fill="rgb(153,197,255)" class="p"/>
<ellipse cx="658.5" cy="405.9" rx="3.6" ry="5.2" transform="rotate(8.0 658.5 405.9)" fill="rgb(153,204,255)" class="p"/>
<ellipse cx="648.1" cy="447.9" rx="4.7" ry="8.4" transform="rotate(13.1 648.1 447.9)" fill="rgb(153,215,255)" class="p"/>
<ellipse cx="652.8" cy="508.0" rx="4.0" ry="5.4" transform="rotate(-23.8 652.8 508.0)" fill="rgb(153,168,255)" class="p"/>
<ellipse cx="673.8" cy="501.0" rx="4.1" ry="6.6" transform="rotate(30.8 673.8 501.0)" fill="rgb(153,195,255)" class="p"/>
<ellipse cx="704.5" cy="505.1" rx="3.5" ry="6.1" transform="rotate(1.5 704.5 505.1)" fill="rgb(153,175,255)" class="p"/>
<ellipse cx="675.3" cy="499.6" rx="4.5" ry="7.9" transform="rotate(32.9 675.3 499.6)" fill="rgb(153,228,255)" class="p"/>
<ellipse cx="656.2" cy="345.3" rx="2.8" ry="3.6" transform="rotate(-0.8 656.2 345.3)" fill="rgb(153,211,255)" class="p"/>
<ellipse cx="685.1" cy="449.2" rx="5.1" ry="9.5" transform="rotate(-19.5 685.1 449.2)" fill="rgb(153,213,255)" class="p"/>
<ellipse cx="673.7" cy="496.4" rx="4.0" ry="5.1" transform="rotate(7.7 673.7 496.4)" fill="rgb(153,209,255)" class="p"/>
<ellipse cx="567.2" cy="429.0" rx="3.9" ry="6.7" transform="rotate(-19.2 567.2 429.0)" fill="rgb(153,195,255)" class="p"/>
<ellipse cx="699.4" cy="449.0" rx="3.4" ry="5.4" transform="rotate(19.2 699.4 449.0)" fill="rgb(153,193,255)" class="p"/>
<ellipse cx="651.6" cy="478.8" rx="5.5" ry="8.5" transform="rotate(1.3 651.6 478.8)" fill="rgb(153,205,255)" class="p"/>
<ellipse cx="645.5" cy="456.4" rx="5.2" ry="7.2" transform="rotate(8.7 645.5 456.4)" fill="rgb(153,212,255)" class="p"/>
<ellipse cx="757.5" cy="398.9" rx="5.5" ry="7.2" transform="rotate(32.0 757.5 398.9)" fill="rgb(153,205,255)" class="p"/>
<ellipse cx="674.9" cy="533.6" rx="4.9" ry="7.6" transform="rotate(-9.8 674.9 533.6)" fill="rgb(153,184,255)" class="p"/>
<ellipse cx="644.4" cy="463.9" rx="5.2" ry="10.0" transform="rotate(-9.0 644.4 463.9)" fill="rgb(153,168,255)" class="p"/>
<ellipse cx="669.5" cy="559.6" rx="5.3" ry="8.8" transform="rotate(4.2 669.5 559.6)" fill="rgb(153,211,255)" class="p"/>
<ellipse cx="713.1" cy="523.1" rx="3.3" ry="4.6" transform="rotate(0.3 713.1 523.1)" fill="rgb(153,210,255)" class="p"/>
<ellipse cx="666.4" cy="449.6" rx="4.0" ry="6.8" transform="rotate(-11.4 666.4 449.6)" fill="rgb(153,221,255)" class="p"/>
<ellipse cx="695.9" cy="442.7" rx="4.4" ry="6.2" transform="rotate(8.0 695.9 442.7)" fill="rgb(153,210,255)" class="p"/>
<ellipse cx="676.6" cy="514.4" rx="5.5" ry="10.5" transform="rotate(15.8 676.6 514.4)" fill="rgb(153,189,255)" class="p"/>
<ellipse cx="677.8" cy="413.4" rx="3.5" ry="5.5" transform="rotate(13.9 677.8 413.4)" fill="rgb(153,229,255)" class="p"/>
<ellipse cx="660.9" cy="489.4" rx="3.6" ry="5.2" transform="rotate(-9.7 660.9 489.4)" fill="rgb(153,234,255)" class="p"/>
<ellipse cx="682.5" cy="378.8" rx="5.2" ry="8.3" transform="rotate(24.4 682.5 378.8)" fill="rgb(153,197,255)" class="p"/>
<ellipse cx="669.8" cy="543.3" rx="3.6" ry="4.7" transform="rotate(9.4 669.8 543.3)" fill="rgb(153,187,255)" class="p"/>
<ellipse cx="642.4" cy="476.8" rx="3.9" ry="5.3" transform="rotate(-0.5 642.4 476.8)" fill="rgb(153,225,255)" class="p"/>
<ellipse cx="606.2" cy="450.8" rx="4.1" ry="7.0" transform="rotate(-10.8 606.2 450.8)" fill="rgb(153,220,255)" class="p"/>
<ellipse cx="620.5" cy="496.6" rx="4.3" ry="5.4" transform="rotate(2.9 620.5 496.6)" fill="rgb(153,224,255)" class="p"/>
<ellipse cx="631.0" cy="490.1" rx="3.9" ry="5.1" transform="rotate(-19.4 631.0 490.1)" fill="rgb(153,192,255)" class="p"/>
<ellipse cx="688.4" cy="436.0" rx="3.5" ry="5.1" transform="rotate(-6.2 688.4 436.0)" fill="rgb(153,174,255)" class="p"/>
<ellipse cx="652.2" cy="405.4" rx="4.9" ry="8.9" transform="rotate(-11.5 652.2 405.4)" fill="rgb(153,228,255)" class="p"/>
<ellipse cx="695.8" cy="388.8" rx="3.0" ry="4.1" transform="rotate(9.3 695.8 388.8)" fill="rgb(153,180,255)" class="p"/>
<ellipse cx="680.8" cy="399.1" rx="3.7" ry="4.9" transform="rotate(-13.1 680.8 399.1)" fill="rgb(153,229,255)" class="p"/>
<ellipse cx="674.1" cy="492.6" rx="5.4" ry="10.2" transform="rotate(4.4 674.1 492.6)" fill="rgb(153,216,255)" class="p"/>
<ellipse cx="660.5" cy="421.7" rx="4.6" ry="8.0" transform="rotate(-14.1 660.5 421.7)" fill="rgb(153,171,255)" class="p"/>
<ellipse cx="609.3" cy="519.1" rx="4.2" ry="7.4" transform="rotate(4.2 609.3 519.1)" fill="rgb(153,216,255)" class="p"/>
<ellipse cx="667.8" cy="402.4" rx="4.0" ry="5.2" transform="rotate(-0.9 667.8 402.4)" fill="rgb(153,191,255)" class="p"/>
<ellipse cx="612.2" cy="469.3" rx="4.2" ry="7.7" transform="rotate(-9.4 612.2 469.3)" fill="rgb(153,177,255)" class="p"/>
<ellipse cx="714.1" cy="485.3" rx="5.6" ry="8.5" transform="rotate(5.8 714.1 485.3)" fill="rgb(153,216,255)" class="p"/>
<ellipse cx="669.3" cy="373.8" rx="3.3" ry="5.6" transform="rotate(16.1 669.3 373.8)" fill="rgb(153,194,255)" class="p"/>
<ellipse cx="724.6" cy="508.4" rx="5.0" ry="8.2" transform="rotate(-0.2 724.6 508.4)" fill="rgb(153,185,255)" class="p"/>
<ellipse cx="669.9" cy="521.7" rx="4.0" ry="7.3" transform="rotate(-1.6 669.9 521.7)" fill="rgb(153,203,255)" class="p"/>
<ellipse cx="652.4" cy="411.9" rx="3.6" ry="4.8" transform="rotate(0.6 652.4 411.9)" fill="rgb(153,184,255)" class="p"/>
<ellipse cx="636.0" cy="501.9" rx="5.3" ry="9.3" transform="rotate(-4.6 636.0 501.9)" fill="rgb(153,207,255)" class="p"/>
<ellipse cx="612.8" cy="465.9" rx="5.7" ry="8.3" transform="rotate(-17.9 612.8 465.9)" fill="rgb(153,212,255)" class="p"/>
<ellipse cx="713.8" cy="538.1" rx="4.3" ry="5.8" transform="rotate(21.3 713.8 538.1)" fill="rgb(153,198,255)" class="p"/>
<ellipse cx="654.2" cy="425.7" rx="3.6" ry="5.7" transform="rotate(-10.8 654.2 425.7)" fill="rgb(153,178,255)" class="p"/>
<ellipse cx="729.1" cy="443.1" rx="3.0" ry="4.8" transform="rotate(24.9 729.1 443.1)" fill="rgb(153,209,255)" class="p"/>
<ellipse cx="645.8" cy="455.5" rx="4.4" ry="6.8" transform="rotate(-27.4 645.8 455.5)" fill="rgb(153,194,255)" class="p"/>
<ellipse cx="721.0" cy="433.8" rx="4.0" ry="7.2" transform="rotate(32.3 721.0 433.8)" fill="rgb(153,202,255)" class="p"/>
<ellipse cx="685.2" cy="435.0" rx="3.6" ry="5.3" transform="rotate(-9.3 685.2 435.0)" fill="rgb(153,210,255)" class="p"/>
<ellipse cx="713.0" cy="420.2" rx="4.8" ry="8.4" transform="rotate(8.4 713.0 420.2)" fill="rgb(153,220,255)" class="p"/>
<ellipse cx="653.9" cy="484.9" rx="2.8" ry="4.9" transform="rotate(9.1 653.9 484.9)" fill="rgb(153,218,255)" class="p"/>
<ellipse cx="641.7" cy="406.6" rx="5.5" ry="9.8" transform="rotate(-25.5 641.7 406.6)" fill="rgb(153,197,255)" class="p"/>
<ellipse cx="722.2" cy="534.4" rx="2.9" ry="4.8" transform="rotate(27.8 722.2 534.4)" fill="rgb(153,223,255)" class="p"/>
<ellipse cx="675.0" cy="568.5" rx="4.5" ry="6.9" transform="rotate(25.6 675.0 568.5)" fill="rgb(153,184,255)" class="p"/>
<ellipse cx="688.3" cy="482.1" rx="3.0" ry="5.0" transform="rotate(16.5 688.3 482.1)" fill="rgb(153,199,255)" class="p"/>
<ellipse cx="631.5" cy="502.3" rx="3.1" ry="4.9" transform="rotate(-11.5 631.5 502.3)" fill="rgb(153,220,255)" class="p"/>
<ellipse cx="682.5" cy="433.4" rx="5.9" ry="10.1" transform="rotate(14.2 682.5 433.4)" fill="rgb(153,194,255)" class="p"/>
<ellipse cx="704.8" cy="502.3" rx="3.4" ry="6.2" transform="rotate(-3.6 704.8 502.3)" fill="rgb(153,186,255)" class="p"/>
<ellipse cx="693.9" cy="381.1" rx="4.5" ry="6.4" transform="rotate(2.6 693.9 381.1)" fill="rgb(153,224,255)" class="p"/>
<ellipse cx="625.7" cy="518.9" rx="3.3" ry="4.2" transform="rotate(-12.2 625.7 518.9)" fill="rgb(153,215,255)" class="p"/>
<ellipse cx="638.1" cy="446.6" rx="4.7" ry="8.2" transform="rotate(5.5 638.1 446.6)" fill="rgb(153,189,255)" class="p"/>
<ellipse cx="688.7" cy="383.2" rx="3.7" ry="6.7" transform="rotate(1.7 688.7 383.2)" fill="rgb(153,204,255)" class="p"/>
<ellipse cx="633.0" cy="488.9" rx="3.6" ry="5.0" transform="rotate(1.2 633.0 488.9)" fill="rgb(153,201,255)" class="p"/>
<ellipse cx="678.8" cy="446.0" rx="3.8" ry="7.1" transform="rotate(20.7 678.8 446.0)" fill="rgb(153,185,255)" class="p"/>
<ellipse cx="698.7" cy="374.4" rx="5.8" ry="8.1" transform="rotate(-6.6 698.7 374.4)" fill="rgb(153,179,255)" class="p"/>
<ellipse cx="505.7" cy="908.2" rx="4.5" ry="11.2" transform="rotate(0.0 505.7 908.2)" fill="rgb(153,178,255)" opacity="0.50" class="p"/>
<ellipse cx="545.2" cy="911.7" rx="3.5" ry="11.2" transform="rotate(0.0 545.2 911.7)" fill="rgb(153,178,255)" class="p"/>
<ellipse cx="577.1" cy="919.5" rx="5.0" ry="20.0" transform="rotate(3.0 577.1 919.5)" fill="rgb(153,178,255)" class="p"/>
<ellipse cx="575.4" cy="933.3" rx="3.5" ry="11.0" transform="rotate(5.0 575.4 933.3)" fill="rgb(153,204,255)" class="p"/>
<ellipse cx="601.9" cy="918.6" rx="4.0" ry="13.5" transform="rotate(0.0 601.9 918.6)" fill="rgb(153,226,255)" opacity="0.40" class="p"/>
<ellipse cx="506.1" cy="933.3" rx="4.3" ry="16.5" transform="rotate(10.0 506.1 933.3)" fill="rgb(153,204,255)" class="p"/>
<ellipse cx="503.8" cy="940.0" rx="4.0" ry="15.0" transform="rotate(10.0 503.8 940.0)" fill="rgb(153,204,255)" class="p"/>
<ellipse cx="499.7" cy="948.9" rx="4.0" ry="14.5" transform="rotate(10.0 499.7 948.9)" fill="rgb(153,178,255)" class="p"/>
<ellipse cx="627.9" cy="942.9" rx="5.5" ry="20.0" transform="rotate(0.0 627.9 942.9)" fill="rgb(153,204,255)" class="p"/>
<ellipse cx="681.1" cy="940.3" rx="5.9" ry="21.5" transform="rotate(0.0 681.1 940.3)" fill="rgb(153,178,255)" class="p"/>
<ellipse cx="688.6" cy="909.1" rx="4.8" ry="14.8" transform="rotate(0.0 688.6 909.1)" fill="rgb(153,204,255)" class="p"/>
<ellipse cx="691.2" cy="922.9" rx="4.0" ry="14.0" transform="rotate(0.0 691.2 922.9)" fill="rgb(153,178,255)" opacity="0.80" class="p"/>
<ellipse cx="432.0" cy="943.7" rx="4.8" ry="16.5" transform="rotate(3.0 432.0 943.7)" fill="rgb(153,178,255)" opacity="0.14" class="p"/>
<ellipse cx="427.7" cy="976.7" rx="4.8" ry="21.5" transform="rotate(3.0 427.7 976.7)" fill="rgb(153,178,255)" opacity="0.14" class="p"/>
<ellipse cx="487.2" cy="978.7" rx="5.9" ry="22.0" transform="rotate(5.0 487.2 978.7)" fill="rgb(153,178,255)" class="p"/>
<ellipse cx="557.0" cy="973.5" rx="5.9" ry="21.2" transform="rotate(0.0 557.0 973.5)" fill="rgb(153,178,255)" opacity="0.85" class="p"/>
<ellipse cx="572.4" cy="958.5" rx="4.3" ry="17.4" transform="rotate(3.0 572.4 958.5)" fill="rgb(153,204,255)" class="p"/>
<ellipse cx="588.6" cy="963.7" rx="3.3" ry="12.0" transform="rotate(0.0 588.6 963.7)" fill="rgb(153,226,255)" class="p"/>
<ellipse cx="501.9" cy="992.3" rx="5.2" ry="17.4" transform="rotate(3.0 501.9 992.3)" fill="rgb(153,204,255)" class="p"/>
<ellipse cx="502.3" cy="990.0" rx="3.8" ry="12.0" transform="rotate(3.0 502.3 990.0)" fill="rgb(153,226,255)" class="p"/>
<ellipse cx="578.5" cy="995.7" rx="5.2" ry="20.0" transform="rotate(0.0 578.5 995.7)" fill="rgb(153,178,255)" class="p"/>
<ellipse cx="608.5" cy="993.5" rx="5.2" ry="15.5" transform="rotate(0.0 608.5 993.5)" fill="rgb(153,178,255)" class="p"/>
<ellipse cx="688.0" cy="991.4" rx="5.9" ry="16.5" transform="rotate(0.0 688.0 991.4)" fill="rgb(153,204,255)" class="p"/>
<ellipse cx="699.0" cy="1016.5" rx="5.0" ry="22.5" transform="rotate(0.0 699.0 1016.5)" fill="rgb(153,178,255)" class="p"/>
<ellipse cx="439.0" cy="1016.5" rx="3.9" ry="19.5" transform="rotate(3.0 439.0 1016.5)" fill="rgb(153,178,255)" opacity="0.50" class="p"/>
<ellipse cx="441.1" cy="1037.3" rx="3.9" ry="14.3" transform="rotate(2.0 441.1 1037.3)" fill="rgb(153,226,255)" opacity="0.90" class="p"/>
<ellipse cx="509.7" cy="1037.3" rx="5.3" ry="23.4" transform="rotate(3.0 509.7 1037.3)" fill="rgb(153,178,255)" opacity="0.95" class="p"/>
<ellipse cx="580.6" cy="1030.4" rx="5.3" ry="21.2" transform="rotate(0.0 580.6 1030.4)" fill="rgb(153,204,255)" class="p"/>
<ellipse cx="694.6" cy="1056.4" rx="3.9" ry="23.4" transform="rotate(0.0 694.6 1056.4)" fill="rgb(153,178,255)" opacity="0.60" class="p"/>
<ellipse cx="486.7" cy="1091.9" rx="4.8" ry="16.9" transform="rotate(3.0 486.7 1091.9)" fill="rgb(153,226,255)" opacity="0.28" class="p"/>
<ellipse cx="611.8" cy="1087.6" rx="4.3" ry="13.0" transform="rotate(0.0 611.8 1087.6)" fill="rgb(153,204,255)" class="p"/>
<ellipse cx="611.6" cy="1084.0" rx="3.0" ry="7.5" transform="rotate(0.0 611.6 1084.0)" fill="rgb(153,226,255)" class="p"/>
<ellipse cx="611.8" cy="1107.3" rx="5.0" ry="13.8" transform="rotate(0.0 611.8 1107.3)" fill="rgb(153,178,255)" opacity="0.55" class="p"/>
<ellipse cx="630.2" cy="1085.8" rx="3.6" ry="12.5" transform="rotate(0.0 630.2 1085.8)" fill="rgb(153,226,255)" opacity="0.45" class="p"/>
<ellipse cx="705.3" cy="926.4" rx="4.3" ry="13.8" transform="rotate(0.0 705.3 926.4)" fill="rgb(153,204,255)" class="p"/>
<ellipse cx="709.4" cy="929.0" rx="3.5" ry="12.0" transform="rotate(0.0 709.4 929.0)" fill="rgb(153,178,255)" class="p"/>
<ellipse cx="731.6" cy="941.1" rx="4.5" ry="18.2" transform="rotate(0.0 731.6 941.1)" fill="rgb(153,178,255)" opacity="0.80" class="p"/>
<ellipse cx="748.1" cy="938.5" rx="4.3" ry="15.5" transform="rotate(0.0 748.1 938.5)" fill="rgb(153,226,255)" opacity="0.20" class="p"/>
<ellipse cx="755.5" cy="914.3" rx="5.3" ry="22.5" transform="rotate(-2.0 755.5 914.3)" fill="rgb(153,204,255)" class="p"/>
<ellipse cx="764.2" cy="907.3" rx="4.8" ry="14.8" transform="rotate(0.0 764.2 907.3)" fill="rgb(153,226,255)" opacity="0.90" class="p"/>
<ellipse cx="804.0" cy="910.8" rx="5.2" ry="21.5" transform="rotate(0.0 804.0 910.8)" fill="rgb(153,226,255)" opacity="0.25" class="p"/>
<ellipse cx="809.6" cy="904.0" rx="3.0" ry="14.8" transform="rotate(0.0 809.6 904.0)" fill="rgb(153,204,255)" opacity="0.90" class="p"/>
<ellipse cx="818.2" cy="907.3" rx="4.3" ry="14.8" transform="rotate(0.0 818.2 907.3)" fill="rgb(153,226,255)" opacity="0.18" class="p"/>
<ellipse cx="787.4" cy="951.5" rx="5.9" ry="25.0" transform="rotate(-2.0 787.4 951.5)" fill="rgb(153,204,255)" class="p"/>
<ellipse cx="832.1" cy="928.1" rx="3.0" ry="10.8" transform="rotate(-3.0 832.1 928.1)" fill="rgb(153,226,255)" class="p"/>
<ellipse cx="851.5" cy="922.1" rx="3.6" ry="11.7" transform="rotate(-3.0 851.5 922.1)" fill="rgb(153,204,255)" class="p"/>
<ellipse cx="862.4" cy="929.0" rx="5.3" ry="18.5" transform="rotate(-4.0 862.4 929.0)" fill="rgb(153,204,255)" class="p"/>
<ellipse cx="858.0" cy="924.7" rx="4.8" ry="11.2" transform="rotate(-4.0 858.0 924.7)" fill="rgb(153,226,255)" class="p"/>
<ellipse cx="885.0" cy="919.5" rx="5.3" ry="17.4" transform="rotate(-3.0 885.0 919.5)" fill="rgb(153,226,255)" opacity="0.55" class="p"/>
<ellipse cx="905.8" cy="943.7" rx="5.7" ry="25.0" transform="rotate(-5.0 905.8 943.7)" fill="rgb(153,178,255)" opacity="0.30" class="p"/>
<ellipse cx="928.8" cy="897.3" rx="4.8" ry="3.0" transform="rotate(30.0 928.8 897.3)" fill="rgb(153,178,255)" opacity="0.30" class="p"/>
<ellipse cx="752.7" cy="959.3" rx="4.2" ry="13.0" transform="rotate(0.0 752.7 959.3)" fill="rgb(153,178,255)" opacity="0.55" class="p"/>
<ellipse cx="742.0" cy="974.6" rx="4.2" ry="15.5" transform="rotate(0.0 742.0 974.6)" fill="rgb(153,204,255)" class="p"/>
<ellipse cx="754.5" cy="984.5" rx="4.8" ry="19.5" transform="rotate(0.0 754.5 984.5)" fill="rgb(153,178,255)" opacity="0.70" class="p"/>
<ellipse cx="771.1" cy="987.0" rx="5.3" ry="24.7" transform="rotate(-2.0 771.1 987.0)" fill="rgb(153,204,255)" class="p"/>
<ellipse cx="771.5" cy="985.3" rx="4.3" ry="13.8" transform="rotate(-2.0 771.5 985.3)" fill="rgb(153,226,255)" class="p"/>
<ellipse cx="785.3" cy="1017.9" rx="5.2" ry="21.2" transform="rotate(-2.0 785.3 1017.9)" fill="rgb(153,178,255)" opacity="0.90" class="p"/>
<ellipse cx="855.5" cy="1014.4" rx="4.3" ry="17.8" transform="rotate(-5.0 855.5 1014.4)" fill="rgb(153,178,255)" opacity="0.75" class="p"/>
<ellipse cx="723.8" cy="1070.2" rx="3.0" ry="14.8" transform="rotate(0.0 723.8 1070.2)" fill="rgb(153,178,255)" opacity="0.80" class="p"/>
<ellipse cx="803.2" cy="1066.8" rx="3.3" ry="9.1" transform="rotate(0.0 803.2 1066.8)" fill="rgb(153,204,255)" class="p"/>
<ellipse cx="739.0" cy="1095.4" rx="4.2" ry="13.8" transform="rotate(0.0 739.0 1095.4)" fill="rgb(153,226,255)" opacity="0.55" class="p"/>
<ellipse cx="815.1" cy="1094.5" rx="4.3" ry="19.0" transform="rotate(-3.0 815.1 1094.5)" fill="rgb(153,178,255)" opacity="0.25" class="p"/>
<ellipse cx="823.4" cy="1098.8" rx="3.6" ry="12.2" transform="rotate(-3.0 823.4 1098.8)" fill="rgb(153,204,255)" class="p"/>
<ellipse cx="886.7" cy="1087.6" rx="4.8" ry="22.5" transform="rotate(-3.0 886.7 1087.6)" fill="rgb(153,178,255)" opacity="0.18" class="p"/>
<ellipse cx="442.5" cy="1102.1" rx="5.0" ry="14.8" transform="rotate(3.0 442.5 1102.1)" fill="rgb(153,178,255)" opacity="0.50" class="p"/>
<ellipse cx="441.2" cy="1096.9" rx="3.6" ry="8.7" transform="rotate(3.0 441.2 1096.9)" fill="rgb(153,226,255)" class="p"/>
<ellipse cx="426.0" cy="1118.6" rx="2.5" ry="10.5" transform="rotate(3.0 426.0 1118.6)" fill="rgb(153,178,255)" opacity="0.14" class="p"/>
<ellipse cx="455.8" cy="1145.5" rx="5.3" ry="24.7" transform="rotate(3.0 455.8 1145.5)" fill="rgb(153,226,255)" opacity="0.35" class="p"/>
<ellipse cx="462.0" cy="1165.9" rx="5.0" ry="24.7" transform="rotate(5.0 462.0 1165.9)" fill="rgb(153,178,255)" opacity="0.85" class="p"/>
<ellipse cx="501.9" cy="1137.7" rx="3.0" ry="12.2" transform="rotate(3.0 501.9 1137.7)" fill="rgb(153,226,255)" opacity="0.40" class="p"/>
<ellipse cx="506.1" cy="1142.0" rx="3.6" ry="20.4" transform="rotate(3.0 506.1 1142.0)" fill="rgb(153,204,255)" opacity="0.60" class="p"/>
<ellipse cx="601.0" cy="1129.9" rx="3.9" ry="13.0" transform="rotate(3.0 601.0 1129.9)" fill="rgb(153,204,255)" opacity="0.70" class="p"/>
<ellipse cx="594.5" cy="1153.3" rx="4.5" ry="17.4" transform="rotate(3.0 594.5 1153.3)" fill="rgb(153,178,255)" opacity="0.25" class="p"/>
<ellipse cx="672.4" cy="1137.1" rx="3.5" ry="14.3" transform="rotate(0.0 672.4 1137.1)" fill="rgb(153,204,255)" opacity="0.80" class="p"/>
<ellipse cx="492.2" cy="1206.1" rx="4.8" ry="27.3" transform="rotate(4.0 492.2 1206.1)" fill="rgb(153,178,255)" opacity="0.15" class="p"/>
<ellipse cx="562.9" cy="1195.4" rx="5.0" ry="15.6" transform="rotate(2.0 562.9 1195.4)" fill="rgb(153,204,255)" opacity="0.42" class="p"/>
<ellipse cx="513.5" cy="1246.0" rx="4.5" ry="25.0" transform="rotate(3.0 513.5 1246.0)" fill="rgb(153,178,255)" opacity="0.13" class="p"/>
<ellipse cx="584.1" cy="1239.9" rx="5.7" ry="22.1" transform="rotate(2.0 584.1 1239.9)" fill="rgb(153,226,255)" opacity="0.25" class="p"/>
<ellipse cx="678.7" cy="1243.4" rx="5.0" ry="16.5" transform="rotate(0.0 678.7 1243.4)" fill="rgb(153,178,255)" opacity="0.22" class="p"/>
<ellipse cx="710.8" cy="1129.0" rx="4.2" ry="17.8" transform="rotate(0.0 710.8 1129.0)" fill="rgb(153,178,255)" opacity="0.80" class="p"/>
<ellipse cx="723.4" cy="1133.7" rx="4.5" ry="21.6" transform="rotate(0.0 723.4 1133.7)" fill="rgb(153,226,255)" opacity="0.95" class="p"/>
<ellipse cx="839.9" cy="1131.6" rx="4.3" ry="17.8" transform="rotate(-3.0 839.9 1131.6)" fill="rgb(153,178,255)" opacity="0.70" class="p"/>
<ellipse cx="831.8" cy="1153.8" rx="3.0" ry="13.0" transform="rotate(-3.0 831.8 1153.8)" fill="rgb(153,226,255)" opacity="0.38" class="p"/>
<ellipse cx="883.2" cy="1127.3" rx="4.8" ry="26.0" transform="rotate(-4.0 883.2 1127.3)" fill="rgb(153,178,255)" opacity="0.35" class="p"/>
<ellipse cx="889.3" cy="1148.1" rx="4.8" ry="18.6" transform="rotate(-4.0 889.3 1148.1)" fill="rgb(153,204,255)" opacity="0.30" class="p"/>
<ellipse cx="804.0" cy="1228.3" rx="4.2" ry="19.5" transform="rotate(0.0 804.0 1228.3)" fill="rgb(153,178,255)" opacity="0.18" class="p"/>
<ellipse cx="454.8" cy="856.3" rx="5.0" ry="15.5" transform="rotate(5.0 454.8 856.3)" fill="rgb(153,178,255)" class="p"/>
<ellipse cx="448.1" cy="888.1" rx="5.4" ry="21.5" transform="rotate(8.0 448.1 888.1)" fill="rgb(153,178,255)" opacity="0.50" class="p"/>
<ellipse cx="479.8" cy="810.0" rx="4.0" ry="12.0" transform="rotate(3.0 479.8 810.0)" fill="rgb(153,204,255)" class="p"/>
<ellipse cx="480.5" cy="812.0" rx="2.5" ry="7.0" transform="rotate(3.0 480.5 812.0)" fill="rgb(153,226,255)" class="p"/>
<ellipse cx="488.0" cy="847.7" rx="5.0" ry="16.2" transform="rotate(3.0 488.0 847.7)" fill="rgb(153,178,255)" class="p"/>
<ellipse cx="477.7" cy="867.9" rx="2.5" ry="8.0" transform="rotate(3.0 477.7 867.9)" fill="rgb(153,178,255)" class="p"/>
<ellipse cx="508.0" cy="841.9" rx="5.4" ry="20.2" transform="rotate(5.0 508.0 841.9)" fill="rgb(153,204,255)" class="p"/>
<ellipse cx="515.2" cy="869.0" rx="4.9" ry="13.0" transform="rotate(3.0 515.2 869.0)" fill="rgb(153,204,255)" class="p"/>
<ellipse cx="534.7" cy="831.0" rx="3.2" ry="16.5" transform="rotate(0.0 534.7 831.0)" fill="rgb(153,226,255)" opacity="0.25" class="p"/>
<ellipse cx="542.6" cy="809.4" rx="2.5" ry="7.2" transform="rotate(0.0 542.6 809.4)" fill="rgb(153,226,255)" opacity="0.25" class="p"/>
<ellipse cx="586.7" cy="869.3" rx="2.5" ry="8.7" transform="rotate(2.0 586.7 869.3)" fill="rgb(153,178,255)" class="p"/>
<ellipse cx="614.1" cy="843.3" rx="6.2" ry="26.0" transform="rotate(2.0 614.1 843.3)" fill="rgb(153,204,255)" class="p"/>
<ellipse cx="617.7" cy="854.9" rx="4.3" ry="18.0" transform="rotate(2.0 617.7 854.9)" fill="rgb(153,226,255)" class="p"/>
<ellipse cx="609.1" cy="857.8" rx="3.5" ry="7.2" transform="rotate(0.0 609.1 857.8)" fill="rgb(153,178,255)" opacity="0.35" class="p"/>
<ellipse cx="648.1" cy="834.7" rx="5.4" ry="21.6" transform="rotate(0.0 648.1 834.7)" fill="rgb(153,178,255)" class="p"/>
<ellipse cx="653.9" cy="857.8" rx="4.3" ry="19.5" transform="rotate(0.0 653.9 857.8)" fill="rgb(153,204,255)" class="p"/>
<ellipse cx="656.0" cy="814.4" rx="3.2" ry="9.4" transform="rotate(0.0 656.0 814.4)" fill="rgb(153,178,255)" class="p"/>
<ellipse cx="629.6" cy="895.3" rx="4.5" ry="13.7" transform="rotate(0.0 629.6 895.3)" fill="rgb(153,204,255)" class="p"/>
<ellipse cx="709.1" cy="813.7" rx="2.8" ry="10.8" transform="rotate(0.0 709.1 813.7)" fill="rgb(153,178,255)" class="p"/>
<ellipse cx="729.3" cy="824.6" rx="5.4" ry="20.0" transform="rotate(0.0 729.3 824.6)" fill="rgb(153,178,255)" opacity="0.80" class="p"/>
<ellipse cx="740.2" cy="813.0" rx="3.6" ry="11.5" transform="rotate(-3.0 740.2 813.0)" fill="rgb(153,204,255)" class="p"/>
<ellipse cx="740.6" cy="811.0" rx="2.2" ry="7.0" transform="rotate(-3.0 740.6 811.0)" fill="rgb(153,226,255)" class="p"/>
<ellipse cx="748.1" cy="805.8" rx="3.6" ry="8.5" transform="rotate(0.0 748.1 805.8)" fill="rgb(153,178,255)" class="p"/>
<ellipse cx="756.0" cy="805.8" rx="4.0" ry="8.0" transform="rotate(0.0 756.0 805.8)" fill="rgb(153,204,255)" class="p"/>
<ellipse cx="734.4" cy="853.4" rx="5.8" ry="16.5" transform="rotate(-3.0 734.4 853.4)" fill="rgb(153,204,255)" class="p"/>
<ellipse cx="767.6" cy="833.2" rx="3.6" ry="11.5" transform="rotate(-2.0 767.6 833.2)" fill="rgb(153,204,255)" class="p"/>
<ellipse cx="796.5" cy="821.7" rx="4.7" ry="16.5" transform="rotate(-2.0 796.5 821.7)" fill="rgb(153,204,255)" class="p"/>
<ellipse cx="795.8" cy="850.5" rx="4.3" ry="16.0" transform="rotate(-2.0 795.8 850.5)" fill="rgb(153,204,255)" class="p"/>
<ellipse cx="809.5" cy="871.5" rx="5.4" ry="17.4" transform="rotate(-2.0 809.5 871.5)" fill="rgb(153,204,255)" class="p"/>
<ellipse cx="790.0" cy="882.3" rx="5.4" ry="16.5" transform="rotate(-5.0 790.0 882.3)" fill="rgb(153,178,255)" class="p"/>
<ellipse cx="790.0" cy="881.0" rx="2.2" ry="9.5" transform="rotate(-5.0 790.0 881.0)" fill="rgb(153,226,255)" class="p"/>
<ellipse cx="822.5" cy="830.3" rx="3.6" ry="13.7" transform="rotate(-3.0 822.5 830.3)" fill="rgb(153,204,255)" class="p"/>
<ellipse cx="861.5" cy="826.0" rx="6.2" ry="24.5" transform="rotate(-4.0 861.5 826.0)" fill="rgb(153,204,255)" class="p"/>
<ellipse cx="861.5" cy="820.2" rx="3.2" ry="8.0" transform="rotate(-4.0 861.5 820.2)" fill="rgb(153,226,255)" class="p"/>
<ellipse cx="844.1" cy="805.8" rx="3.0" ry="7.2" transform="rotate(0.0 844.1 805.8)" fill="rgb(153,178,255)" class="p"/>
<ellipse cx="894.7" cy="833.9" rx="4.7" ry="13.7" transform="rotate(-3.0 894.7 833.9)" fill="rgb(153,178,255)" class="p"/>
<ellipse cx="893.2" cy="859.2" rx="5.0" ry="15.9" transform="rotate(-3.0 893.2 859.2)" fill="rgb(153,204,255)" class="p"/>
</g>
<g clip-path="url(#vpin)">
<ellipse cx="404.4" cy="726.0" rx="4.5" ry="2.5" transform="rotate(0.0 404.4 726.0)" fill="rgb(153,178,255)" opacity="0.80"/>
<ellipse cx="403.5" cy="745.4" rx="9.5" ry="5.5" transform="rotate(0.0 403.5 745.4)" fill="rgb(153,226,255)" opacity="0.90"/>
<ellipse cx="366.4" cy="757.9" rx="5.5" ry="4.0" transform="rotate(0.0 366.4 757.9)" fill="rgb(153,226,255)" opacity="0.90"/>
<ellipse cx="422.4" cy="757.9" rx="8.5" ry="5.0" transform="rotate(5.0 422.4 757.9)" fill="rgb(153,226,255)" opacity="0.90"/>
<ellipse cx="394.0" cy="781.5" rx="6.0" ry="4.0" transform="rotate(-10.0 394.0 781.5)" fill="rgb(153,226,255)" opacity="0.90"/>
<ellipse cx="436.8" cy="782.8" rx="6.0" ry="4.0" transform="rotate(0.0 436.8 782.8)" fill="rgb(153,226,255)" opacity="0.90"/>
<ellipse cx="360.2" cy="794.5" rx="5.5" ry="4.0" transform="rotate(-15.0 360.2 794.5)" fill="rgb(153,178,255)" opacity="0.85"/>
<ellipse cx="371.8" cy="793.6" rx="9.0" ry="5.0" transform="rotate(-25.0 371.8 793.6)" fill="rgb(153,204,255)" opacity="0.85"/>
<ellipse cx="419.8" cy="794.6" rx="8.0" ry="5.5" transform="rotate(0.0 419.8 794.6)" fill="rgb(153,226,255)" opacity="0.90"/>
<ellipse cx="391.4" cy="799.5" rx="4.5" ry="3.5" transform="rotate(0.0 391.4 799.5)" fill="rgb(153,204,255)" opacity="0.85"/>
<ellipse cx="400.0" cy="805.7" rx="8.0" ry="5.5" transform="rotate(-5.0 400.0 805.7)" fill="rgb(153,204,255)" opacity="0.85"/>
<ellipse cx="441.0" cy="806.0" rx="6.5" ry="4.5" transform="rotate(-20.0 441.0 806.0)" fill="rgb(153,226,255)" opacity="0.85"/>
<ellipse cx="341.8" cy="823.0" rx="5.5" ry="3.5" transform="rotate(-35.0 341.8 823.0)" fill="rgb(153,204,255)" opacity="0.70"/>
<ellipse cx="285.0" cy="841.0" rx="9.5" ry="6.0" transform="rotate(-35.0 285.0 841.0)" fill="rgb(153,226,255)" opacity="0.28"/>
<ellipse cx="416.3" cy="845.6" rx="8.5" ry="6.0" transform="rotate(-30.0 416.3 845.6)" fill="rgb(153,226,255)" opacity="0.85"/>
<ellipse cx="420.5" cy="829.0" rx="3.5" ry="9.5" transform="rotate(5.0 420.5 829.0)" fill="rgb(153,178,255)" opacity="0.90"/>
<ellipse cx="443.0" cy="790.0" rx="4.5" ry="6.5" transform="rotate(10.0 443.0 790.0)" fill="rgb(153,178,255)" opacity="0.50"/>
<ellipse cx="449.0" cy="812.0" rx="3.0" ry="7.0" transform="rotate(8.0 449.0 812.0)" fill="rgb(153,178,255)" opacity="0.35"/>
<ellipse cx="906.5" cy="765.9" rx="9.5" ry="5.5" transform="rotate(0.0 906.5 765.9)" fill="rgb(153,204,255)" opacity="0.85"/>
<ellipse cx="948.5" cy="769.7" rx="8.5" ry="5.5" transform="rotate(15.0 948.5 769.7)" fill="rgb(153,226,255)" opacity="0.88"/>
<ellipse cx="988.3" cy="765.9" rx="8.5" ry="6.0" transform="rotate(5.0 988.3 765.9)" fill="rgb(153,178,255)" opacity="0.85"/>
<ellipse cx="1027.0" cy="768.0" rx="4.0" ry="3.0" transform="rotate(15.0 1027.0 768.0)" fill="rgb(153,226,255)" opacity="0.85"/>
<ellipse cx="967.2" cy="783.5" rx="6.5" ry="5.0" transform="rotate(25.0 967.2 783.5)" fill="rgb(153,178,255)" opacity="0.85"/>
<ellipse cx="899.6" cy="781.0" rx="3.5" ry="3.0" transform="rotate(0.0 899.6 781.0)" fill="rgb(153,178,255)" opacity="0.80"/>
<ellipse cx="897.5" cy="791.5" rx="7.5" ry="4.5" transform="rotate(10.0 897.5 791.5)" fill="rgb(153,226,255)" opacity="0.85"/>
<ellipse cx="950.7" cy="791.5" rx="7.5" ry="4.5" transform="rotate(0.0 950.7 791.5)" fill="rgb(153,204,255)" opacity="0.88"/>
<ellipse cx="1016.6" cy="799.0" rx="8.0" ry="5.0" transform="rotate(22.0 1016.6 799.0)" fill="rgb(153,226,255)" opacity="0.85"/>
<ellipse cx="998.4" cy="803.0" rx="7.5" ry="4.5" transform="rotate(20.0 998.4 803.0)" fill="rgb(153,178,255)" opacity="0.85"/>
<ellipse cx="913.4" cy="803.6" rx="8.5" ry="5.0" transform="rotate(0.0 913.4 803.6)" fill="rgb(153,178,255)" opacity="0.85"/>
<ellipse cx="923.8" cy="806.6" rx="6.0" ry="6.0" transform="rotate(0.0 923.8 806.6)" fill="rgb(153,226,255)" opacity="0.25"/>
<ellipse cx="911.2" cy="812.3" rx="8.0" ry="5.5" transform="rotate(15.0 911.2 812.3)" fill="rgb(153,204,255)" opacity="0.85"/>
<ellipse cx="958.2" cy="838.1" rx="7.5" ry="4.5" transform="rotate(25.0 958.2 838.1)" fill="rgb(153,178,255)" opacity="0.75"/>
<ellipse cx="914.7" cy="857.4" rx="8.0" ry="6.0" transform="rotate(25.0 914.7 857.4)" fill="rgb(153,226,255)" opacity="0.80"/>
<ellipse cx="964.0" cy="867.4" rx="7.5" ry="4.5" transform="rotate(30.0 964.0 867.4)" fill="rgb(153,178,255)" opacity="0.55"/>
<ellipse cx="923.8" cy="878.5" rx="6.0" ry="3.5" transform="rotate(20.0 923.8 878.5)" fill="rgb(153,204,255)" opacity="0.45"/>
<ellipse cx="916.0" cy="884.0" rx="4.5" ry="3.0" transform="rotate(25.0 916.0 884.0)" fill="rgb(153,178,255)" opacity="0.35"/>
<ellipse cx="794.4" cy="729.5" rx="6.5" ry="5.0" transform="rotate(0.0 794.4 729.5)" fill="rgb(153,226,255)" opacity="0.85"/>
<ellipse cx="847.6" cy="729.8" rx="7.5" ry="4.5" transform="rotate(0.0 847.6 729.8)" fill="rgb(153,226,255)" opacity="0.85"/>
<ellipse cx="878.3" cy="734.3" rx="10.0" ry="6.0" transform="rotate(15.0 878.3 734.3)" fill="rgb(153,178,255)" opacity="0.75"/>
<ellipse cx="807.7" cy="748.5" rx="6.5" ry="5.0" transform="rotate(0.0 807.7 748.5)" fill="rgb(153,204,255)" opacity="0.85"/>
<ellipse cx="821.2" cy="754.4" rx="4.5" ry="3.5" transform="rotate(0.0 821.2 754.4)" fill="rgb(153,204,255)" opacity="0.85"/>
<ellipse cx="854.9" cy="769.3" rx="10.0" ry="6.0" transform="rotate(-20.0 854.9 769.3)" fill="rgb(153,204,255)" opacity="0.80"/>
<ellipse cx="861.5" cy="759.8" rx="5.0" ry="3.0" transform="rotate(0.0 861.5 759.8)" fill="rgb(153,178,255)" opacity="0.80"/>
<ellipse cx="796.5" cy="767.6" rx="6.5" ry="5.0" transform="rotate(0.0 796.5 767.6)" fill="rgb(153,204,255)" opacity="0.85"/>
<ellipse cx="813.0" cy="782.3" rx="5.0" ry="4.5" transform="rotate(0.0 813.0 782.3)" fill="rgb(153,178,255)" opacity="0.60"/>
<ellipse cx="856.3" cy="785.0" rx="7.5" ry="4.0" transform="rotate(0.0 856.3 785.0)" fill="rgb(153,204,255)" opacity="0.85"/>
<ellipse cx="797.0" cy="797.4" rx="7.0" ry="5.5" transform="rotate(-30.0 797.0 797.4)" fill="rgb(153,226,255)" opacity="0.30"/>
<ellipse cx="820.7" cy="795.0" rx="9.0" ry="5.0" transform="rotate(15.0 820.7 795.0)" fill="rgb(153,178,255)" opacity="0.80"/>
<ellipse cx="865.0" cy="794.5" rx="8.0" ry="4.5" transform="rotate(-20.0 865.0 794.5)" fill="rgb(153,204,255)" opacity="0.85"/>
<ellipse cx="831.0" cy="803.0" rx="4.0" ry="3.5" transform="rotate(0.0 831.0 803.0)" fill="rgb(153,226,255)" opacity="0.30"/>
<ellipse cx="806.0" cy="810.0" rx="7.0" ry="4.5" transform="rotate(-15.0 806.0 810.0)" fill="rgb(153,204,255)" opacity="0.85"/>
<ellipse cx="830.3" cy="812.7" rx="8.0" ry="5.5" transform="rotate(-20.0 830.3 812.7)" fill="rgb(153,226,255)" opacity="0.85"/>
<ellipse cx="837.7" cy="820.5" rx="4.0" ry="3.0" transform="rotate(0.0 837.7 820.5)" fill="rgb(153,204,255)" opacity="0.85"/>
<ellipse cx="846.4" cy="834.3" rx="6.5" ry="3.5" transform="rotate(0.0 846.4 834.3)" fill="rgb(153,226,255)" opacity="0.85"/>
<ellipse cx="871.9" cy="831.7" rx="4.0" ry="3.5" transform="rotate(0.0 871.9 831.7)" fill="rgb(153,226,255)" opacity="0.30"/>
<ellipse cx="480.5" cy="815.9" rx="4.3" ry="3.6" transform="rotate(0.0 480.5 815.9)" fill="rgb(153,226,255)" opacity="0.85"/>
<ellipse cx="522.4" cy="806.5" rx="5.4" ry="4.7" transform="rotate(0.0 522.4 806.5)" fill="rgb(153,204,255)" opacity="0.85"/>
<ellipse cx="532.5" cy="805.8" rx="5.4" ry="5.0" transform="rotate(0.0 532.5 805.8)" fill="rgb(153,178,255)" opacity="0.85"/>
<ellipse cx="519.5" cy="821.7" rx="7.5" ry="5.4" transform="rotate(-10.0 519.5 821.7)" fill="rgb(153,178,255)" opacity="0.85"/>
<ellipse cx="547.7" cy="816.6" rx="6.2" ry="4.3" transform="rotate(20.0 547.7 816.6)" fill="rgb(153,226,255)" opacity="0.85"/>
<ellipse cx="554.9" cy="824.6" rx="6.2" ry="4.7" transform="rotate(0.0 554.9 824.6)" fill="rgb(153,226,255)" opacity="0.85"/>
<ellipse cx="577.0" cy="818.0" rx="5.0" ry="4.3" transform="rotate(0.0 577.0 818.0)" fill="rgb(153,178,255)" opacity="0.85"/>
<ellipse cx="563.6" cy="835.0" rx="6.2" ry="4.7" transform="rotate(0.0 563.6 835.0)" fill="rgb(153,204,255)" opacity="0.85"/>
<ellipse cx="562.9" cy="851.7" rx="8.3" ry="5.8" transform="rotate(0.0 562.9 851.7)" fill="rgb(153,204,255)" opacity="0.85"/>
<ellipse cx="503.7" cy="846.9" rx="6.2" ry="4.0" transform="rotate(-10.0 503.7 846.9)" fill="rgb(153,226,255)" opacity="0.85"/>
<ellipse cx="597.5" cy="853.4" rx="6.8" ry="5.0" transform="rotate(0.0 597.5 853.4)" fill="rgb(153,178,255)" opacity="0.85"/>
<ellipse cx="587.4" cy="849.8" rx="4.7" ry="3.2" transform="rotate(20.0 587.4 849.8)" fill="rgb(153,226,255)" opacity="0.55"/>
<ellipse cx="584.8" cy="860.7" rx="4.7" ry="4.0" transform="rotate(-20.0 584.8 860.7)" fill="rgb(153,226,255)" opacity="0.85"/>
<ellipse cx="597.5" cy="802.9" rx="8.0" ry="6.5" transform="rotate(0.0 597.5 802.9)" fill="rgb(153,204,255)" opacity="0.85"/>
<ellipse cx="625.7" cy="804.0" rx="5.8" ry="6.5" transform="rotate(0.0 625.7 804.0)" fill="rgb(153,204,255)" opacity="0.85"/>
<ellipse cx="660.8" cy="845.5" rx="5.8" ry="8.3" transform="rotate(0.0 660.8 845.5)" fill="rgb(153,178,255)" opacity="0.85"/>
<ellipse cx="685.7" cy="811.6" rx="5.4" ry="6.5" transform="rotate(0.0 685.7 811.6)" fill="rgb(153,204,255)" opacity="0.85"/>
<ellipse cx="702.6" cy="849.8" rx="8.0" ry="7.0" transform="rotate(-30.0 702.6 849.8)" fill="rgb(153,178,255)" opacity="0.85"/>
<ellipse cx="729.3" cy="810.8" rx="5.8" ry="6.5" transform="rotate(0.0 729.3 810.8)" fill="rgb(153,204,255)" opacity="0.85"/>
<ellipse cx="766.9" cy="808.7" rx="5.8" ry="5.4" transform="rotate(0.0 766.9 808.7)" fill="rgb(153,204,255)" opacity="0.70"/>
<ellipse cx="759.7" cy="831.8" rx="9.4" ry="7.2" transform="rotate(5.0 759.7 831.8)" fill="rgb(153,204,255)" opacity="0.85"/>
<ellipse cx="777.0" cy="824.6" rx="6.5" ry="4.0" transform="rotate(-5.0 777.0 824.6)" fill="rgb(153,204,255)" opacity="0.85"/>
<ellipse cx="725.0" cy="854.2" rx="5.0" ry="6.2" transform="rotate(0.0 725.0 854.2)" fill="rgb(153,204,255)" opacity="0.85"/>
<ellipse cx="695.1" cy="764.3" rx="4.0" ry="5.6" transform="rotate(151.0 695.1 764.3)" fill="rgb(153,200,255)" opacity="0.86"/>
<ellipse cx="683.3" cy="707.8" rx="4.6" ry="6.2" transform="rotate(46.1 683.3 707.8)" fill="rgb(153,179,255)" opacity="0.81"/>
<ellipse cx="514.9" cy="776.1" rx="5.0" ry="8.2" transform="rotate(-125.3 514.9 776.1)" fill="rgb(153,216,255)" opacity="0.86"/>
<ellipse cx="787.5" cy="776.4" rx="3.9" ry="6.1" transform="rotate(121.3 787.5 776.4)" fill="rgb(153,194,255)" opacity="0.86"/>
<ellipse cx="723.3" cy="744.0" rx="4.5" ry="7.3" transform="rotate(33.6 723.3 744.0)" fill="rgb(153,196,255)" opacity="0.86"/>
<ellipse cx="724.0" cy="710.6" rx="5.5" ry="7.8" transform="rotate(76.7 724.0 710.6)" fill="rgb(153,228,255)" opacity="0.48"/>
<ellipse cx="711.2" cy="733.4" rx="4.2" ry="6.1" transform="rotate(45.5 711.2 733.4)" fill="rgb(153,199,255)" opacity="0.86"/>
<ellipse cx="481.7" cy="728.4" rx="6.4" ry="10.6" transform="rotate(-105.2 481.7 728.4)" fill="rgb(153,226,255)" opacity="0.28"/>
<ellipse cx="509.7" cy="797.2" rx="6.2" ry="10.4" transform="rotate(-114.6 509.7 797.2)" fill="rgb(153,207,255)" opacity="0.86"/>
<ellipse cx="731.5" cy="778.7" rx="4.1" ry="6.1" transform="rotate(132.8 731.5 778.7)" fill="rgb(153,207,255)" opacity="0.14"/>
<ellipse cx="729.9" cy="722.6" rx="4.4" ry="6.2" transform="rotate(105.0 729.9 722.6)" fill="rgb(153,226,255)" opacity="0.86"/>
<ellipse cx="778.5" cy="746.7" rx="4.4" ry="6.9" transform="rotate(128.8 778.5 746.7)" fill="rgb(153,195,255)" opacity="0.62"/>
<ellipse cx="523.1" cy="725.6" rx="4.8" ry="7.7" transform="rotate(-90.0 523.1 725.6)" fill="rgb(153,221,255)" opacity="0.86"/>
<ellipse cx="481.0" cy="780.8" rx="3.6" ry="6.0" transform="rotate(-113.9 481.0 780.8)" fill="rgb(153,188,255)" opacity="0.86"/>
<ellipse cx="670.7" cy="730.9" rx="5.0" ry="6.6" transform="rotate(13.3 670.7 730.9)" fill="rgb(153,182,255)" opacity="0.86"/>
<ellipse cx="504.2" cy="749.5" rx="3.8" ry="6.2" transform="rotate(-84.0 504.2 749.5)" fill="rgb(153,222,255)" opacity="0.86"/>
<ellipse cx="576.6" cy="715.9" rx="4.3" ry="7.0" transform="rotate(-50.4 576.6 715.9)" fill="rgb(153,180,255)" opacity="0.86"/>
<ellipse cx="639.0" cy="702.9" rx="5.4" ry="8.3" transform="rotate(-18.6 639.0 702.9)" fill="rgb(153,219,255)" opacity="0.86"/>
<ellipse cx="766.4" cy="746.6" rx="3.7" ry="5.7" transform="rotate(131.4 766.4 746.6)" fill="rgb(153,181,255)" opacity="0.50"/>
<ellipse cx="598.8" cy="781.9" rx="5.6" ry="8.5" transform="rotate(-138.1 598.8 781.9)" fill="rgb(153,205,255)" opacity="0.40"/>
<ellipse cx="516.0" cy="743.4" rx="6.1" ry="9.8" transform="rotate(-112.6 516.0 743.4)" fill="rgb(153,227,255)" opacity="0.39"/>
<ellipse cx="601.5" cy="799.0" rx="4.4" ry="6.6" transform="rotate(-128.6 601.5 799.0)" fill="rgb(153,199,255)" opacity="0.86"/>
<ellipse cx="579.3" cy="754.3" rx="4.4" ry="6.8" transform="rotate(-137.5 579.3 754.3)" fill="rgb(153,213,255)" opacity="0.49"/>
<ellipse cx="707.0" cy="758.4" rx="3.5" ry="5.0" transform="rotate(143.4 707.0 758.4)" fill="rgb(153,202,255)" opacity="0.86"/>
<ellipse cx="516.5" cy="741.1" rx="6.1" ry="10.2" transform="rotate(-77.0 516.5 741.1)" fill="rgb(153,209,255)" opacity="0.86"/>
<ellipse cx="525.1" cy="743.9" rx="4.3" ry="7.1" transform="rotate(-80.2 525.1 743.9)" fill="rgb(153,191,255)" opacity="0.86"/>
<ellipse cx="745.7" cy="711.4" rx="5.7" ry="8.8" transform="rotate(52.9 745.7 711.4)" fill="rgb(153,225,255)" opacity="0.86"/>
<ellipse cx="753.5" cy="706.3" rx="6.3" ry="9.2" transform="rotate(114.8 753.5 706.3)" fill="rgb(153,211,255)" opacity="0.53"/>
<ellipse cx="541.9" cy="723.6" rx="5.2" ry="8.4" transform="rotate(-68.3 541.9 723.6)" fill="rgb(153,226,255)" opacity="0.86"/>
<ellipse cx="669.3" cy="718.1" rx="6.2" ry="9.4" transform="rotate(0.6 669.3 718.1)" fill="rgb(153,181,255)" opacity="0.86"/>
<ellipse cx="511.7" cy="786.8" rx="5.5" ry="8.9" transform="rotate(-106.6 511.7 786.8)" fill="rgb(153,229,255)" opacity="0.86"/>
<ellipse cx="617.0" cy="749.3" rx="6.8" ry="10.0" transform="rotate(-147.5 617.0 749.3)" fill="rgb(153,190,255)" opacity="0.86"/>
<ellipse cx="651.4" cy="722.7" rx="4.8" ry="7.5" transform="rotate(-10.7 651.4 722.7)" fill="rgb(153,213,255)" opacity="0.86"/>
<ellipse cx="540.2" cy="787.1" rx="3.3" ry="5.2" transform="rotate(-123.4 540.2 787.1)" fill="rgb(153,194,255)" opacity="0.86"/>
<ellipse cx="658.8" cy="786.8" rx="6.8" ry="9.3" transform="rotate(-22.6 658.8 786.8)" fill="rgb(153,219,255)" opacity="0.86"/>
<ellipse cx="470.7" cy="774.7" rx="5.6" ry="9.4" transform="rotate(-128.6 470.7 774.7)" fill="rgb(153,188,255)" opacity="0.86"/>
<ellipse cx="715.3" cy="732.5" rx="6.5" ry="9.1" transform="rotate(104.8 715.3 732.5)" fill="rgb(153,178,255)" opacity="0.75"/>
<ellipse cx="689.1" cy="782.4" rx="5.6" ry="8.2" transform="rotate(165.6 689.1 782.4)" fill="rgb(153,200,255)" opacity="0.54"/>
<ellipse cx="468.6" cy="761.8" rx="5.7" ry="9.5" transform="rotate(-101.6 468.6 761.8)" fill="rgb(153,192,255)" opacity="0.86"/>
<ellipse cx="564.9" cy="799.6" rx="3.3" ry="5.3" transform="rotate(-98.1 564.9 799.6)" fill="rgb(153,199,255)" opacity="0.78"/>
<ellipse cx="763.5" cy="772.2" rx="6.6" ry="9.9" transform="rotate(106.9 763.5 772.2)" fill="rgb(153,191,255)" opacity="0.86"/>
<ellipse cx="664.4" cy="722.4" rx="6.3" ry="8.8" transform="rotate(-174.7 664.4 722.4)" fill="rgb(153,178,255)" opacity="0.41"/>
<ellipse cx="654.7" cy="746.3" rx="6.3" ry="9.4" transform="rotate(-173.5 654.7 746.3)" fill="rgb(153,223,255)" opacity="0.44"/>
<ellipse cx="461.1" cy="767.6" rx="6.7" ry="11.3" transform="rotate(-108.7 461.1 767.6)" fill="rgb(153,179,255)" opacity="0.86"/>
<ellipse cx="754.2" cy="723.4" rx="6.7" ry="9.9" transform="rotate(110.4 754.2 723.4)" fill="rgb(153,188,255)" opacity="0.36"/>
<ellipse cx="491.4" cy="775.9" rx="3.6" ry="6.2" transform="rotate(-91.2 491.4 775.9)" fill="rgb(153,180,255)" opacity="0.86"/>
<ellipse cx="446.6" cy="774.1" rx="4.5" ry="7.8" transform="rotate(-130.0 446.6 774.1)" fill="rgb(153,224,255)" opacity="0.71"/>
<ellipse cx="690.0" cy="783.9" rx="4.1" ry="5.9" transform="rotate(27.4 690.0 783.9)" fill="rgb(153,196,255)" opacity="0.86"/>
<ellipse cx="708.3" cy="775.3" rx="5.0" ry="7.5" transform="rotate(159.8 708.3 775.3)" fill="rgb(153,212,255)" opacity="0.52"/>
<ellipse cx="462.2" cy="711.6" rx="6.5" ry="10.9" transform="rotate(-113.8 462.2 711.6)" fill="rgb(153,229,255)" opacity="0.14"/>
<ellipse cx="552.0" cy="758.6" rx="5.9" ry="9.2" transform="rotate(-84.8 552.0 758.6)" fill="rgb(153,189,255)" opacity="0.86"/>
<ellipse cx="537.4" cy="777.8" rx="6.4" ry="10.4" transform="rotate(-90.0 537.4 777.8)" fill="rgb(153,186,255)" opacity="0.86"/>
<ellipse cx="744.5" cy="736.9" rx="5.5" ry="8.1" transform="rotate(110.8 744.5 736.9)" fill="rgb(153,186,255)" opacity="0.79"/>
<ellipse cx="739.5" cy="790.9" rx="4.9" ry="7.3" transform="rotate(85.6 739.5 790.9)" fill="rgb(153,229,255)" opacity="0.86"/>
<ellipse cx="539.2" cy="739.8" rx="6.1" ry="9.7" transform="rotate(-105.7 539.2 739.8)" fill="rgb(153,214,255)" opacity="0.53"/>
<ellipse cx="549.1" cy="776.8" rx="3.7" ry="5.8" transform="rotate(-89.7 549.1 776.8)" fill="rgb(153,217,255)" opacity="0.86"/>
<ellipse cx="504.4" cy="797.7" rx="5.1" ry="9.1" transform="rotate(-88.4 504.4 797.7)" fill="rgb(153,217,255)" opacity="0.86"/>
<ellipse cx="762.0" cy="784.8" rx="7.1" ry="10.8" transform="rotate(111.1 762.0 784.8)" fill="rgb(153,195,255)" opacity="0.86"/>
<ellipse cx="518.9" cy="714.7" rx="4.1" ry="6.5" transform="rotate(-111.0 518.9 714.7)" fill="rgb(153,197,255)" opacity="0.59"/>
<ellipse cx="676.1" cy="736.5" rx="5.7" ry="7.6" transform="rotate(153.9 676.1 736.5)" fill="rgb(153,204,255)" opacity="0.86"/>
<ellipse cx="569.9" cy="742.8" rx="5.8" ry="8.8" transform="rotate(-110.7 569.9 742.8)" fill="rgb(153,200,255)" opacity="0.86"/>
<ellipse cx="633.8" cy="761.3" rx="4.1" ry="5.7" transform="rotate(-88.3 633.8 761.3)" fill="rgb(153,201,255)" opacity="0.86"/>
<ellipse cx="661.0" cy="731.0" rx="3.4" ry="5.1" transform="rotate(-6.3 661.0 731.0)" fill="rgb(153,176,255)" opacity="0.86"/>
<ellipse cx="705.3" cy="706.3" rx="3.9" ry="5.5" transform="rotate(53.3 705.3 706.3)" fill="rgb(153,219,255)" opacity="0.86"/>
<ellipse cx="649.1" cy="796.4" rx="3.3" ry="4.6" transform="rotate(-42.4 649.1 796.4)" fill="rgb(153,201,255)" opacity="0.86"/>
<ellipse cx="699.1" cy="767.3" rx="3.4" ry="4.8" transform="rotate(51.6 699.1 767.3)" fill="rgb(153,228,255)" opacity="0.86"/>
<ellipse cx="504.5" cy="774.8" rx="5.0" ry="8.2" transform="rotate(-100.7 504.5 774.8)" fill="rgb(153,178,255)" opacity="0.86"/>
<ellipse cx="653.6" cy="721.7" rx="4.3" ry="6.4" transform="rotate(-11.5 653.6 721.7)" fill="rgb(153,191,255)" opacity="0.86"/>
<ellipse cx="735.2" cy="703.6" rx="6.1" ry="8.8" transform="rotate(122.7 735.2 703.6)" fill="rgb(153,185,255)" opacity="0.15"/>
<ellipse cx="669.4" cy="728.7" rx="6.4" ry="8.5" transform="rotate(177.3 669.4 728.7)" fill="rgb(153,181,255)" opacity="0.86"/>
<ellipse cx="473.6" cy="783.5" rx="4.9" ry="8.5" transform="rotate(-101.0 473.6 783.5)" fill="rgb(153,205,255)" opacity="0.86"/>
<ellipse cx="632.3" cy="728.2" rx="3.3" ry="5.2" transform="rotate(-22.5 632.3 728.2)" fill="rgb(153,221,255)" opacity="0.86"/>
<ellipse cx="460.5" cy="761.7" rx="5.2" ry="9.0" transform="rotate(-90.5 460.5 761.7)" fill="rgb(153,206,255)" opacity="0.86"/>
<ellipse cx="488.0" cy="740.7" rx="3.8" ry="6.3" transform="rotate(-100.5 488.0 740.7)" fill="rgb(153,192,255)" opacity="0.86"/>
<ellipse cx="475.9" cy="712.3" rx="6.3" ry="10.5" transform="rotate(-107.0 475.9 712.3)" fill="rgb(153,212,255)" opacity="0.54"/>
<ellipse cx="497.8" cy="752.3" rx="4.2" ry="6.9" transform="rotate(-116.0 497.8 752.3)" fill="rgb(153,188,255)" opacity="0.86"/>
<ellipse cx="714.3" cy="713.2" rx="3.8" ry="5.7" transform="rotate(35.8 714.3 713.2)" fill="rgb(153,197,255)" opacity="0.86"/>
<ellipse cx="631.7" cy="767.7" rx="5.7" ry="8.2" transform="rotate(-151.4 631.7 767.7)" fill="rgb(153,190,255)" opacity="0.86"/>
</g>
<path d="M31 804.5H1256" stroke="#9a3030" stroke-width="1"/>
<path d="M668.5 53V1298" stroke="#4a9a28" stroke-width="1"/>
<path d="M30.5 53V1298.5H1256" stroke="#a4a7ab" stroke-width="1.25" fill="none"/>
<path d="M95.5 1298V1314M210.5 1298V1314M324.5 1298V1314M439.5 1298V1314M554.5 1298V1314M668.5 1298V1314M783.5 1298V1314M898.5 1298V1314M1013.5 1298V1314M1127.5 1298V1314M1242.5 1298V1314M16 1262.5H30M16 1148.5H30M16 1033.5H30M16 918.5H30M16 804.5H30M16 689.5H30M16 574.5H30M16 459.5H30M16 345.5H30M16 230.5H30M16 115.5H30" stroke="#b4b4b4" stroke-width="1.2" fill="none"/>
<g font-family="'Liberation Sans',sans-serif" font-size="10.3" fill="#a9abae">
<text x="98.1" y="1310" textLength="21.0" lengthAdjust="spacingAndGlyphs">-500</text>
<text x="213.1" y="1310" textLength="21.0" lengthAdjust="spacingAndGlyphs">-400</text>
<text x="327.1" y="1310" textLength="21.0" lengthAdjust="spacingAndGlyphs">-300</text>
<text x="442.1" y="1310" textLength="21.0" lengthAdjust="spacingAndGlyphs">-200</text>
<text x="557.1" y="1310" textLength="21.0" lengthAdjust="spacingAndGlyphs">-100</text>
<text x="671.1" y="1310" textLength="4.7" lengthAdjust="spacingAndGlyphs">0</text>
<text x="786.1" y="1310" textLength="15.6" lengthAdjust="spacingAndGlyphs">100</text>
<text x="901.1" y="1310" textLength="15.6" lengthAdjust="spacingAndGlyphs">200</text>
<text x="1016.1" y="1310" textLength="15.6" lengthAdjust="spacingAndGlyphs">300</text>
<text x="1130.1" y="1310" textLength="15.6" lengthAdjust="spacingAndGlyphs">400</text>
<text x="1245.1" y="1310" textLength="15.6" lengthAdjust="spacingAndGlyphs">500</text>
<text transform="translate(28.2 1259.3) rotate(-90)" textLength="21.0" lengthAdjust="spacingAndGlyphs">-400</text>
<text transform="translate(28.2 1145.3) rotate(-90)" textLength="21.0" lengthAdjust="spacingAndGlyphs">-300</text>
<text transform="translate(28.2 1030.3) rotate(-90)" textLength="21.0" lengthAdjust="spacingAndGlyphs">-200</text>
<text transform="translate(28.2 915.3) rotate(-90)" textLength="21.0" lengthAdjust="spacingAndGlyphs">-100</text>
<text transform="translate(28.2 801.3) rotate(-90)" textLength="4.7" lengthAdjust="spacingAndGlyphs">0</text>
<text transform="translate(28.2 686.3) rotate(-90)" textLength="15.6" lengthAdjust="spacingAndGlyphs">100</text>
<text transform="translate(28.2 571.3) rotate(-90)" textLength="15.6" lengthAdjust="spacingAndGlyphs">200</text>
<text transform="translate(28.2 456.3) rotate(-90)" textLength="15.6" lengthAdjust="spacingAndGlyphs">300</text>
<text transform="translate(28.2 342.3) rotate(-90)" textLength="15.6" lengthAdjust="spacingAndGlyphs">400</text>
<text transform="translate(28.2 227.3) rotate(-90)" textLength="15.6" lengthAdjust="spacingAndGlyphs">500</text>
<text transform="translate(28.2 112.3) rotate(-90)" textLength="15.6" lengthAdjust="spacingAndGlyphs">600</text>
</g>
<path d="M438.5 781.6 H898.5 L668.5 895.5 Z" stroke="#1fdcdc" stroke-width="1.25" fill="none"/>
<rect x="661.3" y="888.3" width="14.5" height="14.5" stroke="#1fdcdc" stroke-width="1.1" fill="none"/>
<path d="M618.6 779.5V821.4M616.0 821.1999999999999H621.2L618.6 828.4ZM643.7 791V834M641.1 833.8H646.3000000000001L643.7 841ZM668.6 807.6V846.5M666.0 846.3H671.2L668.6 853.5ZM693.4 791V834.4M690.8 834.1999999999999H696.0L693.4 841.4ZM718.6 779.5V821.7M716.0 821.5H721.2L718.6 828.7Z" stroke="#8c8c8c" stroke-width="0.9" fill="none"/>
<rect x="726.8" y="823.8" width="6.8" height="13.6" fill="rgba(105,160,240,0.85)"/><rect x="733.6" y="823.8" width="6.8" height="13.6" fill="#1d3658"/><rect x="726.8" y="823.8" width="13.6" height="13.6" stroke="#2b86ee" stroke-width="1.2" fill="none"/>
<path d="M668.6 880V805" stroke="#f2652a" stroke-width="1.4"/>
<path d="M668.6 792.8 L674.6 806 H662.6 Z" fill="#f2652a"/>
<path d="M684 895.5H760" stroke="#ff1010" stroke-width="1.1"/>
<path d="M772.4 895.5 L759.2 889.4 V901.6 Z" fill="#ff0000"/>
</g>
<rect x="928" y="68" width="313" height="40" rx="20" fill="#393c41"/>
<circle cx="948.1" cy="88.1" r="15" fill="#2b2d32"/>
<g transform="translate(948.1 88.1)" fill="#f4f5f6" stroke="none"><rect x="-2.2" y="-2.2" width="4.4" height="4.4"/><path d="M0 -7.3 L2.3 -4.6 H0.45 V-2.9 H-0.45 V-4.6 H-2.3 Z"/><path d="M0 7.3 L2.3 4.6 H0.45 V2.9 H-0.45 V4.6 H-2.3 Z"/><path d="M-7.3 0 L-4.6 -2.3 V-0.45 H-2.9 V0.45 H-4.6 V2.3 Z"/><path d="M7.3 0 L4.6 -2.3 V-0.45 H2.9 V0.45 H4.6 V2.3 Z"/></g>
<g transform="translate(988.2 88.4)" stroke="#a3b1c0" fill="none" stroke-width="1.1"><path d="M2.2 -6.5 A6.9 6.9 0 1 0 6.6 -1.8"/><path d="M0 -3.4 L3.4 0 L0 3.4 L-3.4 0 Z" fill="#a3b1c0" stroke="none"/><path d="M1.6 -1.8 L5.4 -5.6" /><path d="M2.6 -7.1 H7 V-2.7 Z" fill="#a3b1c0" stroke="none"/></g>
<g transform="translate(1020.8 80.9)" stroke="#a3b1c0" fill="none" stroke-width="1.1"><rect x="0" y="7" width="7.2" height="7.2" fill="#a3b1c0" stroke="none"/><path d="M0.55 4.6 V0.55 H4.8 M9.4 13.65 H13.65 V9.4"/><path d="M8.6 5.6 L13 1.2"/><path d="M9.4 0 H14.2 V4.8 Z" fill="#a3b1c0" stroke="none"/></g>
<path d="M1053.5 73V103" stroke="#53565c" stroke-width="1"/>
<rect x="1064" y="73" width="52" height="30" rx="15" fill="#2b2d32"/>
<path d="M1074.5 81V95.1M1077.45 81V95.1M1080.45 81V95.1M1083.5 81V95.1M1072 83.45H1086M1072 86.4H1086M1072 89.45H1086M1072 92.5H1086" stroke="#f2f3f5" stroke-width="1.15" fill="none"/>
<path d="M1097.3 85 H1106.7 L1102 91.7 Z" fill="#8e9197"/>
<circle cx="1140.9" cy="88.1" r="15" fill="#2b2d32"/>
<text x="1140.55" y="92.75" text-anchor="middle" font-family="'Liberation Sans',sans-serif" font-weight="700" font-size="14.6" fill="#f2f3f4" textLength="13.7" lengthAdjust="spacingAndGlyphs">2D</text>
<g stroke="#6b7683" fill="none" stroke-width="1.1" stroke-linejoin="round"><path d="M1180.5 80.9 L1187.1 83.6 L1184.1 92.8 L1180.5 94.1 L1176.9 92.8 L1173.9 83.6 Z"/><path d="M1173.9 83.6 L1180.5 85.6 L1187.1 83.6 M1180.5 85.6 V94.1"/></g>
<g><path d="M1214 88.2 Q1217.6 82.6 1221.2 82.7 Q1225 82.8 1227.5 88 Q1225 93.2 1221 93.3 Q1217.4 93.2 1214 88.2 Z" fill="#a7b5c4"/><circle cx="1220.9" cy="88.1" r="3.1" fill="#393c41"/><circle cx="1219.4" cy="86.6" r="1.25" fill="#a7b5c4"/><path d="M1221.4 90.2 H1229 V95 H1221.4 Z" fill="#393c41"/><path d="M1222.2 90.9 H1228 L1225.1 94.4 Z" fill="#a7b5c4"/></g>
</svg>
<svg class="abs" style="left:3px;top:651px" width="8" height="34"><path d="M1.5 1v32M4.5 1v32M7.5 1v32" stroke="#34373c" stroke-width="1"/></svg>
<svg class="abs" style="left:1260px;top:651px" width="8" height="34"><path d="M1.5 1v32M4.5 1v32M7.5 1v32" stroke="#3a3d42" stroke-width="1"/></svg>
<svg class="abs" style="left:620px;top:1318px" width="34" height="6"><path d="M0 1.5h32M0 4.5h32" stroke="#3a3d42" stroke-width="1"/></svg>
<div class="abs" style="left:1273px;top:12px;width:458px;height:1312px;background:#2d2e33"></div>
<div class="abs" style="left:1273px;top:160px;width:458px;height:2px;background:#25272c"></div>
<div class="t" style="left:1288px;top:24px">Outline</div>
<div class="t" style="left:1288px;top:174px">Properties</div>
<div class="abs" style="left:1273px;top:99px;width:458px;height:23px;background:#3a3d42"></div>
<div class="abs" style="left:1274px;top:99px;width:2px;height:23px;background:#f2652a"></div>
<svg class="abs" style="left:1285px;top:60px" width="11" height="8"><path d="M0.7 1 L9.5 1 L5.1 7.2 Z" fill="#aeb8c2"/></svg>
<svg class="abs" style="left:1290px;top:50px" width="30" height="30"><rect x="11.05" y="11.45" width="1.70" height="1.70" fill="#676c73"/><rect x="11.05" y="14.85" width="1.70" height="1.70" fill="#676c73"/><rect x="12.75" y="9.75" width="1.70" height="1.70" fill="#676c73"/><rect x="12.75" y="13.15" width="1.70" height="1.70" fill="#92979e"/><rect x="12.75" y="16.55" width="1.70" height="1.70" fill="#676c73"/><rect x="14.45" y="8.05" width="1.70" height="1.70" fill="#676c73"/><rect x="14.45" y="11.45" width="1.70" height="1.70" fill="#92979e"/><rect x="14.45" y="14.85" width="1.70" height="1.70" fill="#92979e"/><rect x="14.45" y="18.25" width="1.70" height="1.70" fill="#676c73"/><rect x="16.15" y="9.75" width="1.70" height="1.70" fill="#92979e"/><rect x="16.15" y="13.15" width="1.70" height="1.70" fill="#92979e"/><rect x="16.15" y="16.55" width="1.70" height="1.70" fill="#92979e"/><rect x="17.85" y="8.05" width="1.70" height="1.70" fill="#676c73"/><rect x="17.85" y="11.45" width="1.70" height="1.70" fill="#92979e"/><rect x="17.85" y="14.85" width="1.70" height="1.70" fill="#92979e"/><rect x="17.85" y="18.25" width="1.70" height="1.70" fill="#676c73"/><rect x="19.55" y="9.75" width="1.70" height="1.70" fill="#676c73"/><rect x="19.55" y="13.15" width="1.70" height="1.70" fill="#92979e"/><rect x="19.55" y="16.55" width="1.70" height="1.70" fill="#676c73"/><rect x="21.25" y="11.45" width="1.70" height="1.70" fill="#676c73"/><rect x="21.25" y="14.85" width="1.70" height="1.70" fill="#676c73"/></svg>
<div class="t " style="left:1320px;top:56.7px;">ParticleFX</div>
<svg class="abs" style="left:1312px;top:81px" width="17" height="13" viewBox="0 0 17 13"><path d="M0.5 8.6 L7.6 5.4 L15.6 8.2 L8 12.4 Z" fill="#a3a8af"/><circle cx="4.6" cy="6" r="1.7" fill="#a3a8af"/><circle cx="8.4" cy="5" r="1.8" fill="#a3a8af"/><circle cx="11.6" cy="6.3" r="1.5" fill="#a3a8af"/><circle cx="14.4" cy="3.2" r="1.5" fill="#a3a8af"/><circle cx="2.6" cy="1.2" r="0.7" fill="#a3a8af"/><circle cx="6.4" cy="1.5" r="0.8" fill="#a3a8af"/><path d="M2.6 7.6 Q4.6 6.6 6.4 7.8 M6.4 6.9 Q8.4 5.8 10.6 7 M9.8 8.2 Q11.6 7.2 13.2 8.2" stroke="#2d2e33" stroke-width="0.7" fill="none"/></svg>
<div class="t " style="left:1333px;top:79.7px;">emitter</div>
<svg class="abs" style="left:1312px;top:104px" width="17" height="13" viewBox="0 0 17 13"><path d="M0.5 8.6 L7.6 5.4 L15.6 8.2 L8 12.4 Z" fill="#c5cad0"/><circle cx="4.6" cy="6" r="1.7" fill="#c5cad0"/><circle cx="8.4" cy="5" r="1.8" fill="#c5cad0"/><circle cx="11.6" cy="6.3" r="1.5" fill="#c5cad0"/><circle cx="14.4" cy="3.2" r="1.5" fill="#c5cad0"/><circle cx="2.6" cy="1.2" r="0.7" fill="#c5cad0"/><circle cx="6.4" cy="1.5" r="0.8" fill="#c5cad0"/><path d="M2.6 7.6 Q4.6 6.6 6.4 7.8 M6.4 6.9 Q8.4 5.8 10.6 7 M9.8 8.2 Q11.6 7.2 13.2 8.2" stroke="#3a3d42" stroke-width="0.7" fill="none"/></svg>
<div class="t " style="left:1333px;top:102.7px;color:#f2f3f4">emitter_delayed</div>
<svg class="abs" style="left:1312px;top:126px" width="16" height="15" viewBox="0 0 16 15"><g fill="none" stroke="#8f949b" stroke-width="0.75" stroke-linecap="round"><path d="M2.2 4.6 Q8 2.2 13.6 4.2"/><path d="M2.6 7 Q8 9.4 13.2 6.6"/><path d="M3.6 6 Q8 4.6 12.4 6"/><path d="M4.2 9.4 Q8 11.4 11.6 9.2"/><path d="M5.6 12 Q8 13.4 10.2 11.8"/><path d="M6.8 13.8 Q8 14.4 9 13.6"/></g><circle cx="11.6" cy="2.2" r="1.5" fill="#9a9fa6"/><circle cx="1.6" cy="1.4" r="0.6" fill="#9a9fa6"/><circle cx="2.6" cy="9.6" r="0.8" fill="#9a9fa6"/><circle cx="14.6" cy="8.6" r="0.6" fill="#9a9fa6"/></svg>
<div class="t " style="left:1333px;top:125.7px;">Acceleration</div>
<div class="t " style="left:1294px;top:201.1px;letter-spacing:-0.363px">Play Mode</div>
<div class="abs" style="left:1430px;top:202px;width:290px;height:40px;overflow:hidden"><div class="abs" style="left:-1430px;top:-202px"><div class="fld l" style="left:1439.5px;top:195px;width:271.5px;height:26px;line-height:26.6px;border-radius:3px">Loop</div><div class="abs" style="left:1685px;top:195px;width:26px;height:26px;background:#3a3d43;border-radius:0 3px 3px 0"></div><svg class="abs" style="left:1685px;top:195px" width="26" height="26"><path d="M8.3 9.6 L17.5 9.6 L12.9 16 Z" fill="#a9b4c0"/></svg></div></div>
<div class="t " style="left:1294px;top:232.1px;letter-spacing:-0.485px">Size Mode</div>
<div class="fld l" style="left:1439.5px;top:226px;width:271.5px;height:26px;line-height:26.6px;border-radius:3px">Manual</div><div class="abs" style="left:1685px;top:226px;width:26px;height:26px;background:#3a3d43;border-radius:0 3px 3px 0"></div><svg class="abs" style="left:1685px;top:226px" width="26" height="26"><path d="M8.3 9.6 L17.5 9.6 L12.9 16 Z" fill="#a9b4c0"/></svg>
<div class="t " style="left:1294px;top:263.1px;letter-spacing:-0.373px">Emission Space</div>
<div class="fld l" style="left:1439.5px;top:257px;width:271.5px;height:26px;line-height:26.6px;border-radius:3px">World</div><div class="abs" style="left:1685px;top:257px;width:26px;height:26px;background:#3a3d43;border-radius:0 3px 3px 0"></div><svg class="abs" style="left:1685px;top:257px" width="26" height="26"><path d="M8.3 9.6 L17.5 9.6 L12.9 16 Z" fill="#a9b4c0"/></svg>
<div class="t " style="left:1294px;top:294.1px;letter-spacing:0.019px">Duration</div>
<div class="fld r " style="left:1443.5px;top:288.0px;width:127.0px;height:26px;line-height:26.6px;">1.0</div>
<div class="pm" style="left:1579.5px;top:292.8px">+/-</div>
<div class="fld r " style="left:1599px;top:288.0px;width:112px;height:26px;line-height:26.6px;">0.0</div>
<div class="t " style="left:1294px;top:325.1px;letter-spacing:-0.204px">Start Delay</div>
<div class="fld r " style="left:1443.5px;top:319.0px;width:127.0px;height:26px;line-height:26.6px;background:#1f2227;border-color:#3f4146;box-shadow:inset 0 -2px 0 #f2652a;">1.8</div>
<div class="pm" style="left:1579.5px;top:323.8px">+/-</div>
<div class="fld r " style="left:1599px;top:319.0px;width:112px;height:26px;line-height:26.6px;">0.0</div>
<div class="t " style="left:1294px;top:356.1px;letter-spacing:-0.1px">Start Offset</div>
<div class="fld l " style="left:1439.5px;top:351.0px;width:271.5px;height:26px;line-height:26.6px;border-radius:3px">0.0</div>
<div class="t " style="left:1294px;top:387.1px;letter-spacing:-0.25px">Image</div>
<div class="fld l" style="left:1439.5px;top:381px;width:271.5px;height:26px;line-height:26.6px;border-radius:3px;padding-right:60px">/assets/sprites.atlas</div><div class="abs" style="left:1657px;top:381px;width:54px;height:26px;background:#3a3d43;border-radius:0 3px 3px 0"></div><svg class="abs" style="left:1657px;top:381.5px" width="54" height="25"><path d="M7.5 12.5 H15 M11.8 9 L15.3 12.5 L11.8 16 M17.6 8.6 V16.4" stroke="#a4abb3" stroke-width="1.1" fill="none"/></svg><div class="t" style="left:1690.5px;top:384.5px;color:#c0c6cc;letter-spacing:0.3px">...</div>
<div class="t " style="left:1294px;top:418.1px;letter-spacing:0.045px">Animation</div>
<div class="fld l" style="left:1439.5px;top:412px;width:271.5px;height:26px;line-height:26.6px;border-radius:3px">droplet</div><div class="abs" style="left:1685px;top:412px;width:26px;height:26px;background:#3a3d43;border-radius:0 3px 3px 0"></div><svg class="abs" style="left:1685px;top:412px" width="26" height="26"><path d="M8.3 9.6 L17.5 9.6 L12.9 16 Z" fill="#a9b4c0"/></svg>
<div class="t " style="left:1294px;top:449.1px;letter-spacing:-0.059px">Material</div>
<div class="fld l" style="left:1439.5px;top:443px;width:271.5px;height:26px;line-height:26.6px;border-radius:3px;padding-right:60px"><span style="letter-spacing:0.14px">/builtins/materials/particlefx.materia</span></div><div class="abs" style="left:1657px;top:443px;width:54px;height:26px;background:#3a3d43;border-radius:0 3px 3px 0"></div><svg class="abs" style="left:1657px;top:443.5px" width="54" height="25"><path d="M7.5 12.5 H15 M11.8 9 L15.3 12.5 L11.8 16 M17.6 8.6 V16.4" stroke="#a4abb3" stroke-width="1.1" fill="none"/></svg><div class="t" style="left:1690.5px;top:446.5px;color:#c0c6cc;letter-spacing:0.3px">...</div>
<div class="t " style="left:1294px;top:480.1px;letter-spacing:-0.252px">Blend Mode</div>
<div class="fld l" style="left:1439.5px;top:474px;width:271.5px;height:26px;line-height:26.6px;border-radius:3px">Alpha</div><div class="abs" style="left:1685px;top:474px;width:26px;height:26px;background:#3a3d43;border-radius:0 3px 3px 0"></div><svg class="abs" style="left:1685px;top:474px" width="26" height="26"><path d="M8.3 9.6 L17.5 9.6 L12.9 16 Z" fill="#a9b4c0"/></svg>
<div class="t " style="left:1294px;top:511.1px;letter-spacing:-0.228px">Max Particle Count</div>
<div class="fld l " style="left:1439.5px;top:506.0px;width:271.5px;height:26px;line-height:26.6px;border-radius:3px"><span style="letter-spacing:-0.6px">1024</span></div>
<div class="t " style="left:1294px;top:542.1px;letter-spacing:-0.02px">Emitter Type</div>
<div class="fld l" style="left:1439.5px;top:536px;width:271.5px;height:26px;line-height:26.6px;border-radius:3px"><span style="letter-spacing:-0.55px">2D Cone</span></div><div class="abs" style="left:1685px;top:536px;width:26px;height:26px;background:#3a3d43;border-radius:0 3px 3px 0"></div><svg class="abs" style="left:1685px;top:536px" width="26" height="26"><path d="M8.3 9.6 L17.5 9.6 L12.9 16 Z" fill="#a9b4c0"/></svg>
<div class="t " style="left:1294px;top:573.1px;letter-spacing:0.004px">Particle Orientation</div>
<div class="fld l" style="left:1439.5px;top:567px;width:271.5px;height:26px;line-height:26.6px;border-radius:3px">Movement direction</div><div class="abs" style="left:1685px;top:567px;width:26px;height:26px;background:#3a3d43;border-radius:0 3px 3px 0"></div><svg class="abs" style="left:1685px;top:567px" width="26" height="26"><path d="M8.3 9.6 L17.5 9.6 L12.9 16 Z" fill="#a9b4c0"/></svg>
<div class="t " style="left:1294px;top:604.1px;letter-spacing:0.019px">Inherit Velocity</div>
<div class="fld l " style="left:1439.5px;top:599.0px;width:271.5px;height:26px;line-height:26.6px;border-radius:3px">0.0</div>
<div class="t " style="left:1294px;top:635.1px;letter-spacing:-0.092px">Stretch With Velocity</div>
<div class="abs" style="left:1439.5px;top:633.3px;width:18px;height:18px;background:#25272c;border:1px solid #36383d;border-radius:2px"></div>
<svg class="abs" style="left:1439.5px;top:633.3px" width="18" height="18"><path d="M4.3 9.4 L7.8 12.6 L14.2 5.6" stroke="#a9b8c9" stroke-width="2" fill="none"/></svg>
<div class="t " style="left:1294px;top:666.1px;letter-spacing:-0.391px">Spawn Rate</div>
<div class="cbtn" style="left:1439px;top:660px"><svg width="26" height="26" viewBox="0 0 26 26" style="position:absolute;left:0;top:0"><path d="M7.2 19.2 L9.2 13.4 M12.6 10.4 L19.2 7.6" stroke="#aab0b8" stroke-width="1.1" fill="none" stroke-linecap="round"/><rect x="9.0" y="9.6" width="3.6" height="3.6" fill="none" stroke="#aab0b8" stroke-width="1.1"/></svg></div>
<div class="fld r " style="left:1469.5px;top:660.0px;width:116.0px;height:26px;line-height:26.6px;">300.0</div>
<div class="pm" style="left:1590.5px;top:664.8px">+/-</div>
<div class="fld r " style="left:1610.5px;top:660.0px;width:100.5px;height:26px;line-height:26.6px;">0.0</div>
<div class="t " style="left:1294px;top:697.1px;letter-spacing:-0.328px">Emitter Size X</div>
<div class="cbtn" style="left:1439px;top:691px"><svg width="26" height="26" viewBox="0 0 26 26" style="position:absolute;left:0;top:0"><path d="M7.2 19.2 L9.2 13.4 M12.6 10.4 L19.2 7.6" stroke="#aab0b8" stroke-width="1.1" fill="none" stroke-linecap="round"/><rect x="9.0" y="9.6" width="3.6" height="3.6" fill="none" stroke="#aab0b8" stroke-width="1.1"/></svg></div>
<div class="fld r " style="left:1469.5px;top:691.0px;width:116.0px;height:26px;line-height:26.6px;">400.0</div>
<div class="pm" style="left:1590.5px;top:695.8px">+/-</div>
<div class="fld r " style="left:1610.5px;top:691.0px;width:100.5px;height:26px;line-height:26.6px;">0.0</div>
<div class="t " style="left:1294px;top:728.1px;letter-spacing:-0.333px">Emitter Size Y</div>
<div class="cbtn" style="left:1439px;top:722px"><svg width="26" height="26" viewBox="0 0 26 26" style="position:absolute;left:0;top:0"><path d="M7.2 19.2 L9.2 13.4 M12.6 10.4 L19.2 7.6" stroke="#aab0b8" stroke-width="1.1" fill="none" stroke-linecap="round"/><rect x="9.0" y="9.6" width="3.6" height="3.6" fill="none" stroke="#aab0b8" stroke-width="1.1"/></svg></div>
<div class="fld r " style="left:1469.5px;top:722.0px;width:116.0px;height:26px;line-height:26.6px;">100.0</div>
<div class="pm" style="left:1590.5px;top:726.8px">+/-</div>
<div class="fld r " style="left:1610.5px;top:722.0px;width:100.5px;height:26px;line-height:26.6px;">0.0</div>
<div class="t " style="left:1294px;top:759.1px;letter-spacing:-0.264px">Emitter Size Z</div>
<div class="cbtn" style="left:1439px;top:753px"><svg width="26" height="26" viewBox="0 0 26 26" style="position:absolute;left:0;top:0"><path d="M7.2 19.2 L9.2 13.4 M12.6 10.4 L19.2 7.6" stroke="#aab0b8" stroke-width="1.1" fill="none" stroke-linecap="round"/><rect x="9.0" y="9.6" width="3.6" height="3.6" fill="none" stroke="#aab0b8" stroke-width="1.1"/></svg></div>
<div class="fld r " style="left:1469.5px;top:753.0px;width:116.0px;height:26px;line-height:26.6px;">0.0</div>
<div class="pm" style="left:1590.5px;top:757.8px">+/-</div>
<div class="fld r " style="left:1610.5px;top:753.0px;width:100.5px;height:26px;line-height:26.6px;">0.0</div>
<div class="t " style="left:1294px;top:790.1px;letter-spacing:-0.11px">Particle Life Time</div>
<div class="cbtn" style="left:1439px;top:784px"><svg width="26" height="26" viewBox="0 0 26 26" style="position:absolute;left:0;top:0"><path d="M7.2 19.2 L9.2 13.4 M12.6 10.4 L19.2 7.6" stroke="#aab0b8" stroke-width="1.1" fill="none" stroke-linecap="round"/><rect x="9.0" y="9.6" width="3.6" height="3.6" fill="none" stroke="#aab0b8" stroke-width="1.1"/></svg></div>
<div class="fld r " style="left:1469.5px;top:784.0px;width:116.0px;height:26px;line-height:26.6px;">0.5</div>
<div class="pm" style="left:1590.5px;top:788.8px">+/-</div>
<div class="fld r " style="left:1610.5px;top:784.0px;width:100.5px;height:26px;line-height:26.6px;">0.0</div>
<div class="t " style="left:1294px;top:821.1px;letter-spacing:-0.062px">Initial Speed</div>
<div class="cbtn" style="left:1439px;top:815px"><svg width="26" height="26" viewBox="0 0 26 26" style="position:absolute;left:0;top:0"><path d="M7.2 19.2 L9.2 13.4 M12.6 10.4 L19.2 7.6" stroke="#aab0b8" stroke-width="1.1" fill="none" stroke-linecap="round"/><rect x="9.0" y="9.6" width="3.6" height="3.6" fill="none" stroke="#aab0b8" stroke-width="1.1"/></svg></div>
<div class="fld r " style="left:1469.5px;top:815.0px;width:116.0px;height:26px;line-height:26.6px;">400.0</div>
<div class="pm" style="left:1590.5px;top:819.8px">+/-</div>
<div class="fld r " style="left:1610.5px;top:815.0px;width:100.5px;height:26px;line-height:26.6px;">100.0</div>
<div class="t " style="left:1294px;top:852.1px;letter-spacing:-0.124px">Initial Size</div>
<div class="cbtn" style="left:1439px;top:846px"><svg width="26" height="26" viewBox="0 0 26 26" style="position:absolute;left:0;top:0"><path d="M7.2 19.2 L9.2 13.4 M12.6 10.4 L19.2 7.6" stroke="#aab0b8" stroke-width="1.1" fill="none" stroke-linecap="round"/><rect x="9.0" y="9.6" width="3.6" height="3.6" fill="none" stroke="#aab0b8" stroke-width="1.1"/></svg></div>
<div class="fld r " style="left:1469.5px;top:846.0px;width:116.0px;height:26px;line-height:26.6px;">8.0</div>
<div class="pm" style="left:1590.5px;top:850.8px">+/-</div>
<div class="fld r " style="left:1610.5px;top:846.0px;width:100.5px;height:26px;line-height:26.6px;">3.0</div>
<div class="t " style="left:1294px;top:883.1px;letter-spacing:-0.109px">Initial Red</div>
<div class="cbtn" style="left:1439px;top:877px"><svg width="26" height="26" viewBox="0 0 26 26" style="position:absolute;left:0;top:0"><path d="M7.2 19.2 L9.2 13.4 M12.6 10.4 L19.2 7.6" stroke="#aab0b8" stroke-width="1.1" fill="none" stroke-linecap="round"/><rect x="9.0" y="9.6" width="3.6" height="3.6" fill="none" stroke="#aab0b8" stroke-width="1.1"/></svg></div>
<div class="fld r " style="left:1469.5px;top:877.0px;width:116.0px;height:26px;line-height:26.6px;">0.6</div>
<div class="pm" style="left:1590.5px;top:881.8px">+/-</div>
<div class="fld r " style="left:1610.5px;top:877.0px;width:100.5px;height:26px;line-height:26.6px;">0.0</div>
<div class="t " style="left:1294px;top:914.1px;letter-spacing:-0.174px">Initial Green</div>
<div class="cbtn" style="left:1439px;top:908px"><svg width="26" height="26" viewBox="0 0 26 26" style="position:absolute;left:0;top:0"><path d="M7.2 19.2 L9.2 13.4 M12.6 10.4 L19.2 7.6" stroke="#aab0b8" stroke-width="1.1" fill="none" stroke-linecap="round"/><rect x="9.0" y="9.6" width="3.6" height="3.6" fill="none" stroke="#aab0b8" stroke-width="1.1"/></svg></div>
<div class="fld r " style="left:1469.5px;top:908.0px;width:116.0px;height:26px;line-height:26.6px;">0.8</div>
<div class="pm" style="left:1590.5px;top:912.8px">+/-</div>
<div class="fld r " style="left:1610.5px;top:908.0px;width:100.5px;height:26px;line-height:26.6px;">0.1</div>
<div class="t " style="left:1294px;top:945.1px;letter-spacing:-0.161px">Initial Blue</div>
<div class="cbtn" style="left:1439px;top:939px"><svg width="26" height="26" viewBox="0 0 26 26" style="position:absolute;left:0;top:0"><path d="M7.2 19.2 L9.2 13.4 M12.6 10.4 L19.2 7.6" stroke="#aab0b8" stroke-width="1.1" fill="none" stroke-linecap="round"/><rect x="9.0" y="9.6" width="3.6" height="3.6" fill="none" stroke="#aab0b8" stroke-width="1.1"/></svg></div>
<div class="fld r " style="left:1469.5px;top:939.0px;width:116.0px;height:26px;line-height:26.6px;">1.0</div>
<div class="pm" style="left:1590.5px;top:943.8px">+/-</div>
<div class="fld r " style="left:1610.5px;top:939.0px;width:100.5px;height:26px;line-height:26.6px;">0.0</div>
<div class="t " style="left:1294px;top:976.1px;letter-spacing:-0.165px">Initial Alpha</div>
<div class="cbtn" style="left:1439px;top:970px"><svg width="26" height="26" viewBox="0 0 26 26" style="position:absolute;left:0;top:0"><path d="M7.2 19.2 L9.2 13.4 M12.6 10.4 L19.2 7.6" stroke="#aab0b8" stroke-width="1.1" fill="none" stroke-linecap="round"/><rect x="9.0" y="9.6" width="3.6" height="3.6" fill="none" stroke="#aab0b8" stroke-width="1.1"/></svg></div>
<div class="fld r " style="left:1469.5px;top:970.0px;width:116.0px;height:26px;line-height:26.6px;">1.0</div>
<div class="pm" style="left:1590.5px;top:974.8px">+/-</div>
<div class="fld r " style="left:1610.5px;top:970.0px;width:100.5px;height:26px;line-height:26.6px;">0.0</div>
<div class="t " style="left:1294px;top:1007.1px;letter-spacing:-0.166px">Initial Rotation</div>
<div class="cbtn" style="left:1439px;top:1001px"><svg width="26" height="26" viewBox="0 0 26 26" style="position:absolute;left:0;top:0"><path d="M7.2 19.2 L9.2 13.4 M12.6 10.4 L19.2 7.6" stroke="#aab0b8" stroke-width="1.1" fill="none" stroke-linecap="round"/><rect x="9.0" y="9.6" width="3.6" height="3.6" fill="none" stroke="#aab0b8" stroke-width="1.1"/></svg></div>
<div class="fld r " style="left:1469.5px;top:1001.0px;width:116.0px;height:26px;line-height:26.6px;">0.0</div>
<div class="pm" style="left:1590.5px;top:1005.8px">+/-</div>
<div class="fld r " style="left:1610.5px;top:1001.0px;width:100.5px;height:26px;line-height:26.6px;">0.0</div>
<div class="t " style="left:1294px;top:1038.1px;letter-spacing:-0.166px">Initial Stretch X</div>
<div class="cbtn" style="left:1439px;top:1032px"><svg width="26" height="26" viewBox="0 0 26 26" style="position:absolute;left:0;top:0"><path d="M7.2 19.2 L9.2 13.4 M12.6 10.4 L19.2 7.6" stroke="#aab0b8" stroke-width="1.1" fill="none" stroke-linecap="round"/><rect x="9.0" y="9.6" width="3.6" height="3.6" fill="none" stroke="#aab0b8" stroke-width="1.1"/></svg></div>
<div class="fld r " style="left:1469.5px;top:1032.0px;width:116.0px;height:26px;line-height:26.6px;">0.0</div>
<div class="pm" style="left:1590.5px;top:1036.8px">+/-</div>
<div class="fld r " style="left:1610.5px;top:1032.0px;width:100.5px;height:26px;line-height:26.6px;">0.0</div>
<div class="t " style="left:1294px;top:1069.1px;letter-spacing:-0.166px">Initial Stretch Y</div>
<div class="cbtn" style="left:1439px;top:1063px"><svg width="26" height="26" viewBox="0 0 26 26" style="position:absolute;left:0;top:0"><path d="M7.2 19.2 L9.2 13.4 M12.6 10.4 L19.2 7.6" stroke="#aab0b8" stroke-width="1.1" fill="none" stroke-linecap="round"/><rect x="9.0" y="9.6" width="3.6" height="3.6" fill="none" stroke="#aab0b8" stroke-width="1.1"/></svg></div>
<div class="fld r " style="left:1469.5px;top:1063.0px;width:116.0px;height:26px;line-height:26.6px;">0.2</div>
<div class="pm" style="left:1590.5px;top:1067.8px">+/-</div>
<div class="fld r " style="left:1610.5px;top:1063.0px;width:100.5px;height:26px;line-height:26.6px;">0.1</div>
<div class="t " style="left:1294px;top:1100.1px;letter-spacing:-0.0px">Initial Angular Velocity</div>
<div class="cbtn" style="left:1439px;top:1094px"><svg width="26" height="26" viewBox="0 0 26 26" style="position:absolute;left:0;top:0"><path d="M7.2 19.2 L9.2 13.4 M12.6 10.4 L19.2 7.6" stroke="#aab0b8" stroke-width="1.1" fill="none" stroke-linecap="round"/><rect x="9.0" y="9.6" width="3.6" height="3.6" fill="none" stroke="#aab0b8" stroke-width="1.1"/></svg></div>
<div class="fld r " style="left:1469.5px;top:1094.0px;width:116.0px;height:26px;line-height:26.6px;">0.0</div>
<div class="pm" style="left:1590.5px;top:1098.8px">+/-</div>
<div class="fld r " style="left:1610.5px;top:1094.0px;width:100.5px;height:26px;line-height:26.6px;">0.0</div>
<div class="t " style="left:1289px;top:1129.7px;">Particle Life</div>
<div class="t " style="left:1294px;top:1160.1px;letter-spacing:-0.436px">Scale</div>
<div class="cbtn" style="left:1405px;top:1154px"><svg width="26" height="26" viewBox="0 0 26 26" style="position:absolute;left:0;top:0"><path d="M7.2 19.2 L9.2 13.4 M12.6 10.4 L19.2 7.6" stroke="#aab0b8" stroke-width="1.1" fill="none" stroke-linecap="round"/><rect x="9.0" y="9.6" width="3.6" height="3.6" fill="none" stroke="#aab0b8" stroke-width="1.1"/></svg></div>
<div class="fld r " style="left:1435.5px;top:1154.0px;width:275.5px;height:26px;line-height:26.6px;">1.0</div>
<div class="t " style="left:1294px;top:1191.1px;letter-spacing:-0.646px">Red</div>
<div class="cbtn" style="left:1405px;top:1185px"><svg width="26" height="26" viewBox="0 0 26 26" style="position:absolute;left:0;top:0"><path d="M7.2 19.2 L9.2 13.4 M12.6 10.4 L19.2 7.6" stroke="#aab0b8" stroke-width="1.1" fill="none" stroke-linecap="round"/><rect x="9.0" y="9.6" width="3.6" height="3.6" fill="none" stroke="#aab0b8" stroke-width="1.1"/></svg></div>
<div class="fld r " style="left:1435.5px;top:1185.0px;width:275.5px;height:26px;line-height:26.6px;">1.0</div>
<div class="t " style="left:1294px;top:1222.1px;letter-spacing:-0.53px">Green</div>
<div class="cbtn" style="left:1405px;top:1216px"><svg width="26" height="26" viewBox="0 0 26 26" style="position:absolute;left:0;top:0"><path d="M7.2 19.2 L9.2 13.4 M12.6 10.4 L19.2 7.6" stroke="#aab0b8" stroke-width="1.1" fill="none" stroke-linecap="round"/><rect x="9.0" y="9.6" width="3.6" height="3.6" fill="none" stroke="#aab0b8" stroke-width="1.1"/></svg></div>
<div class="fld r " style="left:1435.5px;top:1216.0px;width:275.5px;height:26px;line-height:26.6px;">1.0</div>
<div class="t " style="left:1294px;top:1253.1px;letter-spacing:-0.208px">Blue</div>
<div class="cbtn" style="left:1405px;top:1247px"><svg width="26" height="26" viewBox="0 0 26 26" style="position:absolute;left:0;top:0"><path d="M7.2 19.2 L9.2 13.4 M12.6 10.4 L19.2 7.6" stroke="#aab0b8" stroke-width="1.1" fill="none" stroke-linecap="round"/><rect x="9.0" y="9.6" width="3.6" height="3.6" fill="none" stroke="#aab0b8" stroke-width="1.1"/></svg></div>
<div class="fld r " style="left:1435.5px;top:1247.0px;width:275.5px;height:26px;line-height:26.6px;">1.0</div>
<div class="t " style="left:1294px;top:1284.1px;letter-spacing:-0.237px">Alpha</div>
<div class="cbtn" style="left:1405px;top:1278px"><svg width="26" height="26" viewBox="0 0 26 26" style="position:absolute;left:0;top:0"><path d="M7.2 19.2 L9.2 13.4 M12.6 10.4 L19.2 7.6" stroke="#5fb0ff" stroke-width="1.1" fill="none" stroke-linecap="round"/><rect x="9.0" y="9.6" width="3.6" height="3.6" fill="none" stroke="#5fb0ff" stroke-width="1.1"/></svg></div>
<div class="fld r " style="left:1435.5px;top:1278.0px;width:275.5px;height:26px;line-height:26.6px;color:#6a7078;background:#2b2d32;border-color:#34363b;">0.0</div>
<div class="t " style="left:1294px;top:1315.1px;letter-spacing:-0.195px">Rotation</div>
<div class="cbtn" style="left:1405px;top:1309px"><svg width="26" height="26" viewBox="0 0 26 26" style="position:absolute;left:0;top:0"><path d="M7.2 19.2 L9.2 13.4 M12.6 10.4 L19.2 7.6" stroke="#aab0b8" stroke-width="1.1" fill="none" stroke-linecap="round"/><rect x="9.0" y="9.6" width="3.6" height="3.6" fill="none" stroke="#aab0b8" stroke-width="1.1"/></svg></div>
<div class="fld r " style="left:1435.5px;top:1309.0px;width:275.5px;height:26px;line-height:26.6px;">0.0</div>
<div class="abs" style="left:1273px;top:1324px;width:458px;height:2px;background:#22252a"></div>
<div class="abs" style="left:1728px;top:321px;width:6px;height:903px;background:#3a3d42;border-radius:3px"></div>
</body></html>
